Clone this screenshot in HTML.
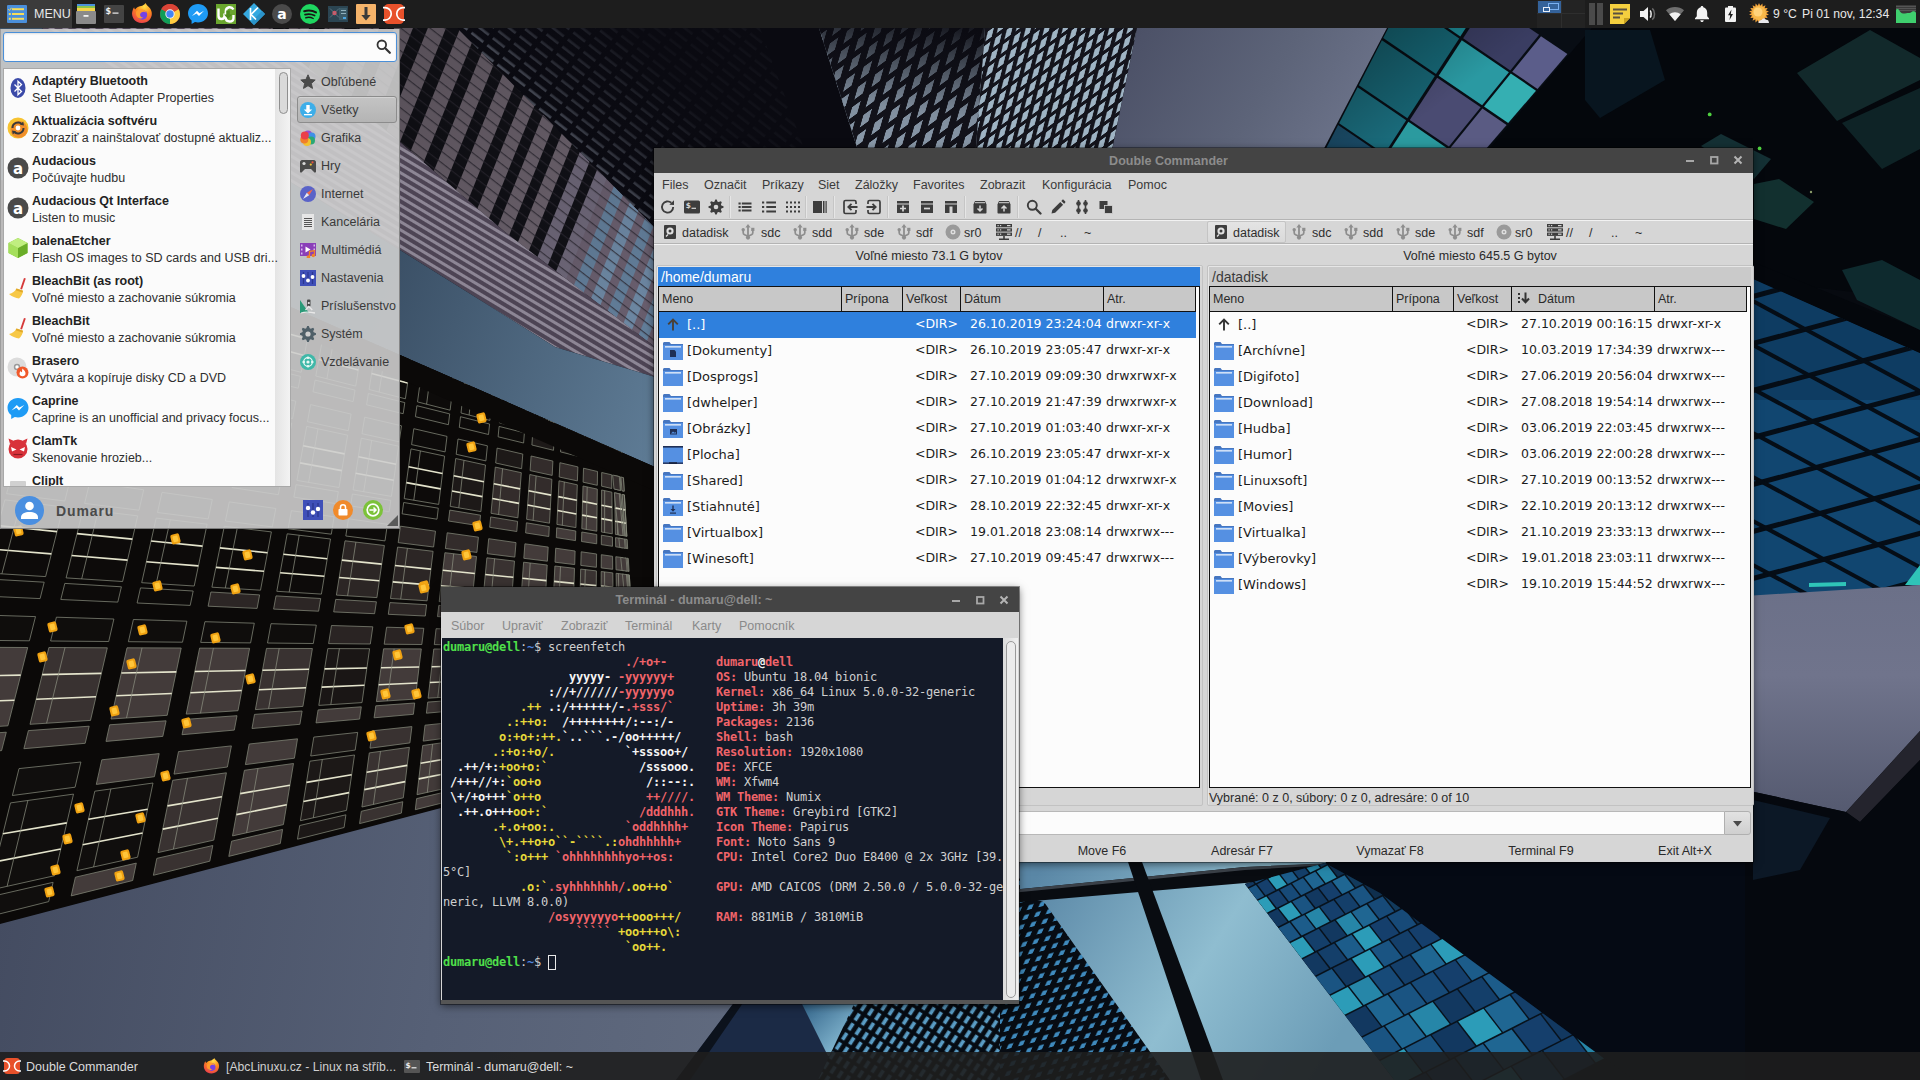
<!DOCTYPE html>
<html lang="sk"><head><meta charset="utf-8"><title>Desktop</title>
<style>
*{box-sizing:border-box;margin:0;padding:0}
html,body{width:1920px;height:1080px;overflow:hidden;background:#10141c}
body{position:relative;font-family:"Liberation Sans", "DejaVu Sans", sans-serif;font-size:12.5px;color:#2a2a2a}
.abs{position:absolute}
.t{position:absolute;white-space:nowrap;line-height:1;margin-top:1px}
#wall{position:absolute;left:0;top:0;width:1920px;height:1080px}
#top{position:absolute;left:0;top:0;width:1920px;height:28px;background:#1d1d1d}
#bot{position:absolute;left:0;top:1052px;width:1920px;height:28px;background:rgba(30,30,30,.9)}

#tt{font-family:"DejaVu Sans Mono","Liberation Mono",monospace;font-size:12px;line-height:15px;letter-spacing:-0.224px;color:#cfcfcf;white-space:pre}
#tt b.r{color:#f0646a}#tt b.w{color:#f4f4f4}#tt b.y{color:#e6d93a}#tt b.g{color:#4fe04a}#tt b.b{color:#4f86e0}
</style></head>
<body>
<svg id="wall" width="1920" height="1080" viewBox="0 0 1920 1080">
<defs>
<linearGradient id="skyA" gradientUnits="userSpaceOnUse" x1="380" y1="300" x2="700" y2="420"><stop offset="0" stop-color="#3b5066"/><stop offset="1" stop-color="#62809a"/></linearGradient>
<linearGradient id="skyB" gradientUnits="userSpaceOnUse" x1="0" y1="900" x2="800" y2="1050"><stop offset="0" stop-color="#444c61"/><stop offset=".55" stop-color="#566076"/><stop offset="1" stop-color="#626c80"/></linearGradient>
<linearGradient id="skyC" gradientUnits="userSpaceOnUse" x1="1140" y1="28" x2="1340" y2="150"><stop offset="0" stop-color="#4c5167"/><stop offset=".6" stop-color="#5d6479"/><stop offset="1" stop-color="#6b7289"/></linearGradient>
<linearGradient id="skyD" x1="0" y1="0" x2="0" y2="1"><stop offset="0" stop-color="#6b7088"/><stop offset=".4" stop-color="#70748c"/><stop offset="1" stop-color="#555a70"/></linearGradient>
<linearGradient id="skyE" gradientUnits="userSpaceOnUse" x1="1040" y1="870" x2="1330" y2="1050"><stop offset="0" stop-color="#5a87a6"/><stop offset=".55" stop-color="#8fbdd0"/><stop offset="1" stop-color="#6c9db7"/></linearGradient>
<pattern id="pinkV" width="12.5" height="40" patternUnits="userSpaceOnUse" patternTransform="rotate(19 400 28)"><rect width="12.5" height="40" fill="#121219"/><rect width="5.6" height="40" fill="#6e6471"/><rect y="9" width="5.6" height="1" fill="#4a4450"/><rect y="19" width="5.6" height="1" fill="#4a4450"/><rect y="29" width="5.6" height="1" fill="#4a4450"/><rect y="39" width="5.6" height="1" fill="#4a4450"/></pattern>
<pattern id="pinkH" width="40" height="7" patternUnits="userSpaceOnUse" patternTransform="rotate(31 400 250)"><rect width="40" height="7" fill="#4d4454"/><rect width="40" height="3" fill="#8d8695"/></pattern>
<pattern id="meshD" width="9" height="20" patternUnits="userSpaceOnUse" patternTransform="rotate(-52 600 60)"><rect width="9" height="20" fill="#0b0b12"/><rect x="1" y="2" width="2.600" height="15" fill="#aab4c6"/></pattern>
<pattern id="meshL" width="9" height="15" patternUnits="userSpaceOnUse" patternTransform="rotate(14 900 80) skewY(-50)"><rect width="9" height="15" fill="#14141c"/><rect x="1.500" y="2" width="5" height="10" fill="#9fb4c4"/></pattern>
<pattern id="meshB" width="9.500" height="11" patternUnits="userSpaceOnUse" patternTransform="rotate(24 1000 900) skewY(-38)"><rect width="9.500" height="11" fill="#070c13"/><rect x="2.500" y="2.500" width="4" height="5.500" fill="#3f8abd"/></pattern>
<pattern id="meshB2" width="8.500" height="11.500" patternUnits="userSpaceOnUse" patternTransform="rotate(33 900 1020)"><rect width="8.500" height="11.500" fill="#060b12"/><rect x="2.200" y="1.800" width="3.700" height="8" fill="#5a9cc4"/></pattern>
<pattern id="pinkFl" width="40" height="9" patternUnits="userSpaceOnUse" patternTransform="rotate(38 400 28)"><rect y="0" width="40" height="1.200" fill="#2c2832" opacity=".8"/></pattern>
<linearGradient id="pinkSh" gradientUnits="userSpaceOnUse" x1="380" y1="30" x2="700" y2="330"><stop offset="0" stop-color="#000" stop-opacity=".22"/><stop offset="1" stop-color="#000" stop-opacity="0"/></linearGradient>
<linearGradient id="meshFade" gradientUnits="userSpaceOnUse" x1="520" y1="170" x2="650" y2="50"><stop offset="0" stop-color="#0a0a11" stop-opacity=".1"/><stop offset=".45" stop-color="#0a0a11" stop-opacity=".72"/><stop offset="1" stop-color="#0a0a11" stop-opacity=".95"/></linearGradient>
<pattern id="meshL2" width="13" height="21" patternUnits="userSpaceOnUse" patternTransform="rotate(16 900 80) skewY(-52)"><path d="M0 0h13v21h-13z M3.500 4h6.500v13h-6.500z" fill="#13131b" fill-rule="evenodd"/></pattern>
<linearGradient id="meshL2sh" gradientUnits="userSpaceOnUse" x1="900" y1="20" x2="880" y2="165"><stop offset="0" stop-color="#0a0a11" stop-opacity=".9"/><stop offset=".3" stop-color="#0a0a11" stop-opacity=".5"/><stop offset=".6" stop-color="#0a0a11" stop-opacity=".12"/><stop offset="1" stop-color="#0a0a11" stop-opacity="0"/></linearGradient>
<linearGradient id="tpSh" gradientUnits="userSpaceOnUse" x1="1390" y1="30" x2="1480" y2="150"><stop offset="0" stop-color="#000" stop-opacity=".28"/><stop offset=".6" stop-color="#000" stop-opacity="0"/></linearGradient>
<linearGradient id="skyF" gradientUnits="userSpaceOnUse" x1="800" y1="1000" x2="850" y2="1050"><stop offset="0" stop-color="#2c5d84"/><stop offset="1" stop-color="#8fc3da"/></linearGradient>
<clipPath id="clipLit"><polygon points="-10,175 400,355 655,467 1100,660 1100,635 655,752 441,808 0,924 -10,927"/></clipPath>
</defs>
<rect width="1920" height="1080" fill="#070a10"/>
<polygon points="380.0,28.0 825.0,28.0 865.0,160.0 865.0,420.0 655.0,420.0 380.0,140.0" fill="#0a0a11"/>
<polygon points="430.0,28.0 760.0,28.0 870.0,330.0 655.0,260.0" fill="url(#meshD)" opacity=".8"/>
<polygon points="380.0,28.0 825.0,28.0 865.0,160.0 865.0,420.0 655.0,420.0 380.0,140.0" fill="url(#meshFade)"/>
<clipPath id="clipPink"><polygon points="-10,-400 457,28 650,223 837,411 655,347 505,232 400,142 -10,-190"/></clipPath>
<g clip-path="url(#clipPink)">
<rect x="-10" y="-400" width="900" height="850" fill="#111117"/>
<polygon points="962.8,-717.3 1391.2,-544.2 716.9,1124.7 288.5,951.6" fill="#6b6070"/>
<polygon points="260.0,-1001.3 281.5,-992.6 -392.8,676.4 -414.3,667.7" fill="#6f6570"/>
<polygon points="298.4,-985.8 319.5,-977.2 -354.8,691.7 -375.9,683.2" fill="#6f6570"/>
<polygon points="336.0,-970.6 356.7,-962.2 -317.6,706.7 -338.3,698.4" fill="#6f6570"/>
<polygon points="372.9,-955.7 393.1,-947.5 -281.2,721.4 -301.4,713.3" fill="#6f6570"/>
<polygon points="409.0,-941.1 428.8,-933.1 -245.5,735.9 -265.3,727.9" fill="#6f6570"/>
<polygon points="444.4,-926.8 463.8,-918.9 -210.4,750.0 -229.9,742.2" fill="#6f6570"/>
<polygon points="479.1,-912.7 498.2,-905.0 -176.1,763.9 -195.2,756.2" fill="#6f6570"/>
<polygon points="513.1,-899.0 531.8,-891.5 -142.5,777.5 -161.2,769.9" fill="#6f6570"/>
<polygon points="546.4,-885.5 564.7,-878.1 -109.6,790.8 -127.9,783.4" fill="#6f6570"/>
<polygon points="579.1,-872.3 597.0,-865.1 -77.3,803.8 -95.2,796.6" fill="#6f6570"/>
<polygon points="611.1,-859.4 628.7,-852.3 -45.6,816.6 -63.2,809.5" fill="#6f6570"/>
<polygon points="642.5,-846.7 659.7,-839.8 -14.6,829.1 -31.8,822.2" fill="#6f6570"/>
<polygon points="673.2,-834.3 690.1,-827.5 15.8,841.4 -1.1,834.6" fill="#6f6570"/>
<polygon points="703.3,-822.2 719.8,-815.5 45.6,853.5 29.0,846.8" fill="#6f6570"/>
<polygon points="732.8,-810.2 749.0,-803.7 74.7,865.3 58.5,858.7" fill="#6f6570"/>
<polygon points="761.8,-798.5 777.4,-792.2 103.1,876.7 87.5,870.4" fill="#6f6570"/>
<polygon points="789.7,-787.2 804.8,-781.2 130.5,887.8 115.4,881.7" fill="#6f6570"/>
<polygon points="816.6,-776.4 831.0,-770.6 156.7,898.4 142.3,892.5" fill="#6f6570"/>
<polygon points="842.3,-766.0 856.2,-760.4 181.9,908.5 168.0,902.9" fill="#6f6570"/>
<polygon points="867.1,-756.0 880.4,-750.6 206.1,918.3 192.8,912.9" fill="#6f6570"/>
<polygon points="890.8,-746.4 903.6,-741.2 229.3,927.7 216.5,922.5" fill="#6f6570"/>
<polygon points="913.6,-737.2 925.9,-732.2 251.6,936.7 239.3,931.7" fill="#6f6570"/>
<polygon points="935.5,-728.3 947.3,-723.6 273.0,945.3 261.2,940.6" fill="#716a7c"/>
<polygon points="956.5,-719.9 967.8,-715.3 293.5,953.6 282.2,949.1" fill="#716a7c"/>
<polygon points="976.7,-711.7 987.5,-707.3 313.2,961.6 302.4,957.2" fill="#64809c"/>
<polygon points="996.0,-703.9 1006.4,-699.7 332.1,969.2 321.7,965.0" fill="#6f8aa6"/>
<polygon points="1014.6,-696.4 1024.6,-692.3 350.3,976.6 340.3,972.6" fill="#64809c"/>
<polygon points="1032.5,-689.2 1042.1,-685.3 367.8,983.6 358.2,979.8" fill="#6f8aa6"/>
<polygon points="1049.6,-682.2 1058.8,-678.5 384.5,990.4 375.3,986.7" fill="#64809c"/>
<polygon points="1066.0,-675.6 1074.9,-672.0 400.6,996.9 391.7,993.3" fill="#6f8aa6"/>
<polygon points="1081.8,-669.2 1090.3,-665.8 416.0,1003.1 407.5,999.7" fill="#64809c"/>
<polygon points="1097.0,-663.1 1105.1,-659.8 430.8,1009.1 422.7,1005.8" fill="#6f8aa6"/>
<polygon points="1111.5,-657.2 1119.4,-654.1 445.1,1014.9 437.2,1011.7" fill="#64809c"/>
<polygon points="1125.5,-651.6 1133.3,-648.4 459.0,1020.5 451.2,1017.3" fill="#6f8aa6"/>
<polygon points="1139.4,-646.0 1147.2,-642.8 472.9,1026.1 465.1,1023.0" fill="#64809c"/>
<polygon points="1153.3,-640.3 1161.1,-637.2 486.8,1031.7 479.0,1028.6" fill="#6f8aa6"/>
<polygon points="1167.2,-634.7 1175.0,-631.6 500.7,1037.4 492.9,1034.2" fill="#64809c"/>
<rect x="-10" y="-400" width="900" height="850" fill="url(#pinkFl)"/>
<rect x="-10" y="-400" width="900" height="850" fill="url(#pinkSh)"/>
</g>
<polygon points="-10.0,-190.0 400.0,142.0 505.0,232.0 655.0,347.0 837.0,411.0 655.0,377.0 555.0,347.0 400.0,250.0 -10.0,-4.0" fill="url(#pinkH)"/>
<polygon points="-10.0,-4.0 400.0,250.0 555.0,347.0 655.0,377.0 1100.0,470.0 1100.0,660.0 655.0,467.0 400.0,355.0 -10.0,175.0" fill="url(#skyA)"/>
<g clip-path="url(#clipLit)">
<rect x="0" y="150" width="1100" height="820" fill="#0b0908"/>
<polygon points="106.4,122.7 156.0,140.2 151.8,156.7 101.9,139.4" fill="#0d0b0a" stroke="#7d8274" stroke-width=".8"/>
<polygon points="100.7,144.0 150.7,161.3 137.4,213.8 86.3,197.5" fill="#0d0b0a" stroke="#7d8274" stroke-width=".8"/>
<path d="M95.6 163.0L145.9 180.0" stroke="#e4e4cc" stroke-width="1.6"/>
<path d="M91.0 180.1L141.7 196.8" stroke="#e4e4cc" stroke-width="1.6"/>
<path d="M114.4 148.8L100.3 202.0" stroke="#8f9484" stroke-width=".7"/>
<polygon points="85.1,201.8 136.3,218.0 133.2,230.2 81.8,214.2" fill="#0d0b0a" stroke="#7d8274" stroke-width=".8"/>
<polygon points="172.8,146.2 219.3,162.6 215.5,178.9 168.8,162.6" fill="#0d0b0a" stroke="#7d8274" stroke-width=".8"/>
<polygon points="167.7,167.1 214.5,183.3 202.6,234.7 154.8,219.4" fill="#0d0b0a" stroke="#7d8274" stroke-width=".8"/>
<path d="M163.1 185.7L210.3 201.6" stroke="#e4e4cc" stroke-width="1.6"/>
<path d="M158.9 202.4L206.5 218.1" stroke="#e4e4cc" stroke-width="1.6"/>
<path d="M180.5 171.6L167.9 223.6" stroke="#8f9484" stroke-width=".7"/>
<polygon points="153.7,223.6 201.7,238.8 198.9,250.7 150.7,235.7" fill="#0d0b0a" stroke="#7d8274" stroke-width=".8"/>
<polygon points="235.0,168.2 278.3,183.5 274.9,199.5 231.4,184.4" fill="#0d0b0a" stroke="#7d8274" stroke-width=".8"/>
<polygon points="230.4,188.8 274.0,203.9 263.5,254.2 218.9,239.9" fill="#0d0b0a" stroke="#7d8274" stroke-width=".8"/>
<path d="M226.3 207.0L270.3 221.8" stroke="#e4e4cc" stroke-width="1.6"/>
<path d="M222.6 223.4L266.9 237.9" stroke="#e4e4cc" stroke-width="1.6"/>
<path d="M242.4 193.0L231.2 243.8" stroke="#8f9484" stroke-width=".7"/>
<polygon points="218.0,244.0 262.7,258.2 260.3,269.7 215.3,255.7" fill="#0d0b0a" stroke="#7d8274" stroke-width=".8"/>
<polygon points="292.9,188.7 332.9,202.9 329.9,218.6 289.7,204.6" fill="#0d0b0a" stroke="#7d8274" stroke-width=".8"/>
<polygon points="288.8,209.0 329.1,222.9 319.9,272.2 278.6,259.0" fill="#0d0b0a" stroke="#7d8274" stroke-width=".8"/>
<path d="M285.1 226.8L325.8 240.5" stroke="#e4e4cc" stroke-width="1.6"/>
<path d="M281.9 242.8L322.9 256.3" stroke="#e4e4cc" stroke-width="1.6"/>
<path d="M299.9 212.8L290.0 262.6" stroke="#8f9484" stroke-width=".7"/>
<polygon points="277.8,263.0 319.2,276.1 317.1,287.4 275.5,274.5" fill="#0d0b0a" stroke="#7d8274" stroke-width=".8"/>
<polygon points="346.3,207.6 383.0,220.6 380.4,236.1 343.5,223.3" fill="#0d0b0a" stroke="#7d8274" stroke-width=".8"/>
<polygon points="342.7,227.6 379.7,240.4 371.7,288.8 333.8,276.7" fill="#0d0b0a" stroke="#7d8274" stroke-width=".8"/>
<path d="M339.5 245.1L376.9 257.7" stroke="#e4e4cc" stroke-width="1.6"/>
<path d="M336.7 260.9L374.3 273.2" stroke="#e4e4cc" stroke-width="1.6"/>
<path d="M353.0 231.1L344.3 280.0" stroke="#8f9484" stroke-width=".7"/>
<polygon points="333.1,280.6 371.1,292.6 369.3,303.7 331.1,291.8" fill="#0d0b0a" stroke="#7d8274" stroke-width=".8"/>
<polygon points="395.3,224.9 428.5,236.7 426.3,252.0 392.8,240.4" fill="#0d0b0a" stroke="#7d8274" stroke-width=".8"/>
<polygon points="392.1,244.6 425.7,256.2 418.9,303.9 384.5,292.9" fill="#0d0b0a" stroke="#7d8274" stroke-width=".8"/>
<path d="M389.4 261.9L423.3 273.3" stroke="#e4e4cc" stroke-width="1.6"/>
<path d="M386.9 277.4L421.1 288.6" stroke="#e4e4cc" stroke-width="1.6"/>
<path d="M401.5 247.9L394.0 295.9" stroke="#8f9484" stroke-width=".7"/>
<polygon points="383.8,296.7 418.4,307.6 416.8,318.5 382.1,307.6" fill="#0d0b0a" stroke="#7d8274" stroke-width=".8"/>
<polygon points="439.6,240.6 469.3,251.2 467.5,266.3 437.5,255.9" fill="#0d0b0a" stroke="#7d8274" stroke-width=".8"/>
<polygon points="436.9,260.1 467.0,270.5 461.3,317.5 430.4,307.6" fill="#0d0b0a" stroke="#7d8274" stroke-width=".8"/>
<path d="M434.6 277.1L465.0 287.4" stroke="#e4e4cc" stroke-width="1.6"/>
<path d="M432.5 292.3L463.2 302.4" stroke="#e4e4cc" stroke-width="1.6"/>
<path d="M445.3 263.0L439.0 310.3" stroke="#8f9484" stroke-width=".7"/>
<polygon points="429.9,311.3 460.9,321.1 459.6,331.8 428.4,322.1" fill="#0d0b0a" stroke="#7d8274" stroke-width=".8"/>
<polygon points="479.2,254.7 505.4,263.9 503.9,279.0 477.4,269.8" fill="#0d0b0a" stroke="#7d8274" stroke-width=".8"/>
<polygon points="477.0,273.9 503.5,283.1 498.9,329.5 471.6,320.7" fill="#0d0b0a" stroke="#7d8274" stroke-width=".8"/>
<path d="M475.0 290.8L501.8 299.8" stroke="#e4e4cc" stroke-width="1.6"/>
<path d="M473.3 305.7L500.4 314.6" stroke="#e4e4cc" stroke-width="1.6"/>
<path d="M484.4 276.5L479.2 323.2" stroke="#8f9484" stroke-width=".7"/>
<polygon points="471.2,324.4 498.5,333.1 497.5,343.6 469.9,335.0" fill="#0d0b0a" stroke="#7d8274" stroke-width=".8"/>
<polygon points="514.0,267.0 536.5,275.0 535.4,289.9 512.6,282.0" fill="#0d0b0a" stroke="#7d8274" stroke-width=".8"/>
<polygon points="512.2,286.1 535.1,294.0 531.5,339.9 507.9,332.3" fill="#0d0b0a" stroke="#7d8274" stroke-width=".8"/>
<path d="M510.6 302.7L533.8 310.5" stroke="#e4e4cc" stroke-width="1.6"/>
<path d="M509.2 317.6L532.7 325.2" stroke="#e4e4cc" stroke-width="1.6"/>
<path d="M518.6 288.3L514.5 334.5" stroke="#8f9484" stroke-width=".7"/>
<polygon points="507.5,336.0 531.3,343.5 530.5,353.8 506.6,346.4" fill="#0d0b0a" stroke="#7d8274" stroke-width=".8"/>
<polygon points="543.8,277.5 562.6,284.2 561.8,299.1 542.7,292.5" fill="#0d0b0a" stroke="#7d8274" stroke-width=".8"/>
<polygon points="542.5,296.5 561.6,303.1 559.1,348.7 539.2,342.4" fill="#0d0b0a" stroke="#7d8274" stroke-width=".8"/>
<path d="M541.3 313.1L560.7 319.6" stroke="#e4e4cc" stroke-width="1.6"/>
<path d="M540.2 327.7L559.9 334.2" stroke="#e4e4cc" stroke-width="1.6"/>
<path d="M547.9 298.4L544.8 344.2" stroke="#8f9484" stroke-width=".7"/>
<polygon points="538.9,345.9 558.9,352.3 558.3,362.5 538.2,356.2" fill="#0d0b0a" stroke="#7d8274" stroke-width=".8"/>
<polygon points="568.6,286.3 583.6,291.6 583.1,306.5 567.9,301.2" fill="#0d0b0a" stroke="#7d8274" stroke-width=".8"/>
<polygon points="567.7,305.2 583.0,310.5 581.5,355.9 565.4,350.8" fill="#0d0b0a" stroke="#7d8274" stroke-width=".8"/>
<path d="M566.9 321.7L582.5 326.9" stroke="#e4e4cc" stroke-width="1.6"/>
<path d="M566.1 336.2L582.0 341.5" stroke="#e4e4cc" stroke-width="1.6"/>
<path d="M572.1 306.8L570.1 352.2" stroke="#8f9484" stroke-width=".7"/>
<polygon points="565.3,354.3 581.4,359.4 581.1,369.6 564.8,364.5" fill="#0d0b0a" stroke="#7d8274" stroke-width=".8"/>
<polygon points="588.2,293.3 599.4,297.2 599.2,312.1 587.8,308.1" fill="#0d0b0a" stroke="#7d8274" stroke-width=".8"/>
<polygon points="587.7,312.2 599.2,316.1 598.7,361.4 586.5,357.5" fill="#0d0b0a" stroke="#7d8274" stroke-width=".8"/>
<path d="M587.3 328.6L599.0 332.5" stroke="#e4e4cc" stroke-width="1.6"/>
<path d="M586.9 343.1L598.8 347.0" stroke="#e4e4cc" stroke-width="1.6"/>
<path d="M591.1 313.3L590.1 358.6" stroke="#8f9484" stroke-width=".7"/>
<polygon points="586.4,361.0 598.6,364.9 598.5,375.0 586.1,371.1" fill="#0d0b0a" stroke="#7d8274" stroke-width=".8"/>
<polygon points="602.6,298.4 609.7,300.9 609.9,315.8 602.5,313.2" fill="#0d0b0a" stroke="#7d8274" stroke-width=".8"/>
<polygon points="602.5,317.2 609.9,319.8 610.4,365.2 602.2,362.5" fill="#0d0b0a" stroke="#7d8274" stroke-width=".8"/>
<path d="M602.4 333.7L610.1 336.2" stroke="#e4e4cc" stroke-width="1.6"/>
<path d="M602.3 348.1L610.3 350.7" stroke="#e4e4cc" stroke-width="1.6"/>
<path d="M604.8 318.0L604.8 363.3" stroke="#8f9484" stroke-width=".7"/>
<polygon points="602.2,366.1 610.5,368.7 610.6,378.7 602.2,376.1" fill="#0d0b0a" stroke="#7d8274" stroke-width=".8"/>
<polygon points="611.5,301.5 614.6,302.6 615.1,317.6 611.8,316.4" fill="#0d0b0a" stroke="#7d8274" stroke-width=".8"/>
<polygon points="611.8,320.5 615.2,321.6 616.7,367.2 612.6,365.8" fill="#0d0b0a" stroke="#7d8274" stroke-width=".8"/>
<path d="M612.1 336.9L615.8 338.1" stroke="#e4e4cc" stroke-width="1.6"/>
<path d="M612.4 351.4L616.2 352.7" stroke="#e4e4cc" stroke-width="1.6"/>
<path d="M613.0 320.9L614.0 366.3" stroke="#8f9484" stroke-width=".7"/>
<polygon points="612.7,369.4 616.8,370.7 617.2,380.8 612.8,379.4" fill="#0d0b0a" stroke="#7d8274" stroke-width=".8"/>
<polygon points="614.9,302.7 613.8,302.3 614.6,317.4 615.5,317.7" fill="#0d0b0a" stroke="#7d8274" stroke-width=".8"/>
<polygon points="615.7,321.8 614.9,321.5 617.4,367.4 617.4,367.4" fill="#0d0b0a" stroke="#7d8274" stroke-width=".8"/>
<path d="M616.3 338.3L615.8 338.2" stroke="#e4e4cc" stroke-width="1.6"/>
<path d="M616.9 352.9L616.6 352.8" stroke="#e4e4cc" stroke-width="1.6"/>
<path d="M615.8 321.8L617.7 367.5" stroke="#8f9484" stroke-width=".7"/>
<polygon points="617.6,370.9 617.6,370.9 618.1,381.1 618.0,381.0" fill="#0d0b0a" stroke="#7d8274" stroke-width=".8"/>
<polygon points="612.7,301.9 607.2,300.0 608.4,315.3 613.6,317.1" fill="#0d0b0a" stroke="#7d8274" stroke-width=".8"/>
<polygon points="613.8,321.2 608.7,319.4 612.3,365.8 616.6,367.1" fill="#0d0b0a" stroke="#7d8274" stroke-width=".8"/>
<path d="M614.8 337.8L610.0 336.2" stroke="#e4e4cc" stroke-width="1.6"/>
<path d="M615.7 352.5L611.2 351.0" stroke="#e4e4cc" stroke-width="1.6"/>
<path d="M612.8 320.8L615.8 366.9" stroke="#8f9484" stroke-width=".7"/>
<polygon points="616.8,370.7 612.6,369.3 613.4,379.6 617.5,380.9" fill="#0d0b0a" stroke="#7d8274" stroke-width=".8"/>
<polygon points="604.6,299.1 594.8,295.6 596.3,311.1 605.9,314.4" fill="#0d0b0a" stroke="#7d8274" stroke-width=".8"/>
<polygon points="606.2,318.5 596.7,315.3 601.4,362.3 610.0,365.0" fill="#0d0b0a" stroke="#7d8274" stroke-width=".8"/>
<path d="M607.6 335.4L598.4 332.3" stroke="#e4e4cc" stroke-width="1.6"/>
<path d="M608.8 350.3L599.9 347.3" stroke="#e4e4cc" stroke-width="1.6"/>
<path d="M604.0 317.8L608.0 364.4" stroke="#8f9484" stroke-width=".7"/>
<polygon points="610.3,368.6 601.8,365.9 602.8,376.3 611.2,378.9" fill="#0d0b0a" stroke="#7d8274" stroke-width=".8"/>
<polygon points="78.1,227.9 129.8,243.6 125.3,261.4 73.2,246.1" fill="#0d0b0a" stroke="#7d8274" stroke-width=".8"/>
<polygon points="71.8,251.2 124.1,266.4 109.7,323.4 56.1,309.8" fill="#0d0b0a" stroke="#7d8274" stroke-width=".8"/>
<path d="M66.3 271.9L119.0 286.6" stroke="#e4e4cc" stroke-width="1.6"/>
<path d="M61.2 290.7L114.3 304.9" stroke="#e4e4cc" stroke-width="1.6"/>
<path d="M86.2 255.3L70.8 313.5" stroke="#8f9484" stroke-width=".7"/>
<polygon points="54.8,314.5 108.5,328.0 105.1,341.3 51.1,328.2" fill="#0d0b0a" stroke="#7d8274" stroke-width=".8"/>
<polygon points="147.5,248.9 195.9,263.7 191.9,281.0 143.1,266.6" fill="#0d0b0a" stroke="#7d8274" stroke-width=".8"/>
<polygon points="141.9,271.5 190.8,285.8 178.1,340.9 127.9,328.1" fill="#0d0b0a" stroke="#7d8274" stroke-width=".8"/>
<path d="M136.9 291.6L186.3 305.4" stroke="#e4e4cc" stroke-width="1.6"/>
<path d="M132.4 309.7L182.2 323.0" stroke="#e4e4cc" stroke-width="1.6"/>
<path d="M155.3 275.4L141.7 331.6" stroke="#8f9484" stroke-width=".7"/>
<polygon points="126.8,332.6 177.1,345.3 174.1,358.1 123.5,345.8" fill="#0d0b0a" stroke="#7d8274" stroke-width=".8"/>
<polygon points="212.4,268.7 257.6,282.4 254.1,299.2 208.5,285.9" fill="#0d0b0a" stroke="#7d8274" stroke-width=".8"/>
<polygon points="207.5,290.6 253.1,303.9 242.0,357.2 195.2,345.2" fill="#0d0b0a" stroke="#7d8274" stroke-width=".8"/>
<path d="M203.1 310.0L249.2 322.8" stroke="#e4e4cc" stroke-width="1.6"/>
<path d="M199.2 327.5L245.6 339.9" stroke="#e4e4cc" stroke-width="1.6"/>
<path d="M220.1 294.2L208.1 348.5" stroke="#8f9484" stroke-width=".7"/>
<polygon points="194.2,349.6 241.1,361.4 238.5,373.7 191.3,362.2" fill="#0d0b0a" stroke="#7d8274" stroke-width=".8"/>
<polygon points="272.9,287.0 314.8,299.7 311.7,316.1 269.5,303.8" fill="#0d0b0a" stroke="#7d8274" stroke-width=".8"/>
<polygon points="268.6,308.3 310.9,320.6 301.2,372.3 257.8,361.2" fill="#0d0b0a" stroke="#7d8274" stroke-width=".8"/>
<path d="M264.8 327.2L307.4 339.1" stroke="#e4e4cc" stroke-width="1.6"/>
<path d="M261.3 344.1L304.3 355.6" stroke="#e4e4cc" stroke-width="1.6"/>
<path d="M280.3 311.7L269.8 364.3" stroke="#8f9484" stroke-width=".7"/>
<polygon points="257.0,365.4 300.4,376.4 298.2,388.2 254.5,377.6" fill="#0d0b0a" stroke="#7d8274" stroke-width=".8"/>
<polygon points="328.9,304.0 367.3,315.7 364.7,331.7 325.9,320.3" fill="#0d0b0a" stroke="#7d8274" stroke-width=".8"/>
<polygon points="325.1,324.8 363.9,336.1 355.7,386.1 315.8,376.0" fill="#0d0b0a" stroke="#7d8274" stroke-width=".8"/>
<path d="M321.8 343.1L361.0 354.0" stroke="#e4e4cc" stroke-width="1.6"/>
<path d="M318.8 359.5L358.3 370.0" stroke="#e4e4cc" stroke-width="1.6"/>
<path d="M335.9 327.9L326.9 378.8" stroke="#8f9484" stroke-width=".7"/>
<polygon points="315.1,380.1 355.0,390.1 353.1,401.6 313.0,391.8" fill="#0d0b0a" stroke="#7d8274" stroke-width=".8"/>
<polygon points="380.2,319.6 415.1,330.2 412.9,345.8 377.7,335.5" fill="#0d0b0a" stroke="#7d8274" stroke-width=".8"/>
<polygon points="377.0,339.8 412.3,350.1 405.4,398.8 369.1,389.5" fill="#0d0b0a" stroke="#7d8274" stroke-width=".8"/>
<path d="M374.1 357.6L409.8 367.6" stroke="#e4e4cc" stroke-width="1.6"/>
<path d="M371.6 373.5L407.6 383.1" stroke="#e4e4cc" stroke-width="1.6"/>
<path d="M386.8 342.7L379.1 392.1" stroke="#8f9484" stroke-width=".7"/>
<polygon points="368.4,393.5 404.8,402.6 403.2,413.7 366.6,404.8" fill="#0d0b0a" stroke="#7d8274" stroke-width=".8"/>
<polygon points="426.8,333.8 458.2,343.3 456.4,358.6 424.7,349.3" fill="#0d0b0a" stroke="#7d8274" stroke-width=".8"/>
<polygon points="424.1,353.5 455.9,362.8 450.1,410.2 417.5,401.9" fill="#0d0b0a" stroke="#7d8274" stroke-width=".8"/>
<path d="M421.7 370.9L453.8 379.8" stroke="#e4e4cc" stroke-width="1.6"/>
<path d="M419.6 386.4L452.0 395.0" stroke="#e4e4cc" stroke-width="1.6"/>
<path d="M432.9 356.1L426.6 404.2" stroke="#8f9484" stroke-width=".7"/>
<polygon points="416.9,405.7 449.7,413.9 448.4,424.7 415.4,416.7" fill="#0d0b0a" stroke="#7d8274" stroke-width=".8"/>
<polygon points="468.6,346.5 496.4,354.9 494.9,369.9 466.9,361.7" fill="#0d0b0a" stroke="#7d8274" stroke-width=".8"/>
<polygon points="466.4,365.8 494.5,374.0 489.9,420.4 461.0,413.0" fill="#0d0b0a" stroke="#7d8274" stroke-width=".8"/>
<path d="M464.4 382.8L492.9 390.7" stroke="#e4e4cc" stroke-width="1.6"/>
<path d="M462.7 397.9L491.4 405.5" stroke="#e4e4cc" stroke-width="1.6"/>
<path d="M474.3 368.1L469.1 415.0" stroke="#8f9484" stroke-width=".7"/>
<polygon points="460.5,416.7 489.6,424.0 488.5,434.5 459.3,427.4" fill="#0d0b0a" stroke="#7d8274" stroke-width=".8"/>
<polygon points="505.5,357.7 529.6,365.0 528.5,379.8 504.1,372.6" fill="#0d0b0a" stroke="#7d8274" stroke-width=".8"/>
<polygon points="503.7,376.7 528.2,383.8 524.7,429.2 499.4,422.8" fill="#0d0b0a" stroke="#7d8274" stroke-width=".8"/>
<path d="M502.2 393.3L526.9 400.2" stroke="#e4e4cc" stroke-width="1.6"/>
<path d="M500.8 408.0L525.8 414.7" stroke="#e4e4cc" stroke-width="1.6"/>
<path d="M510.6 378.7L506.5 424.6" stroke="#8f9484" stroke-width=".7"/>
<polygon points="499.1,426.4 524.4,432.8 523.6,443.0 498.1,436.8" fill="#0d0b0a" stroke="#7d8274" stroke-width=".8"/>
<polygon points="537.4,367.4 557.7,373.6 556.9,388.1 536.4,382.1" fill="#0d0b0a" stroke="#7d8274" stroke-width=".8"/>
<polygon points="536.1,386.1 556.7,392.1 554.3,436.8 532.9,431.3" fill="#0d0b0a" stroke="#7d8274" stroke-width=".8"/>
<path d="M534.9 402.4L555.8 408.2" stroke="#e4e4cc" stroke-width="1.6"/>
<path d="M533.9 416.9L555.1 422.5" stroke="#e4e4cc" stroke-width="1.6"/>
<path d="M541.9 387.8L538.9 432.8" stroke="#8f9484" stroke-width=".7"/>
<polygon points="532.6,434.8 554.1,440.2 553.5,450.3 531.9,445.0" fill="#1d1918" stroke="#7d8274" stroke-width=".8"/>
<polygon points="564.2,375.5 580.7,380.5 580.2,395.0 563.5,390.0" fill="#0d0b0a" stroke="#7d8274" stroke-width=".8"/>
<polygon points="563.3,394.0 580.1,398.9 578.7,443.0 561.1,438.5" fill="#1d1918" stroke="#7d8274" stroke-width=".8"/>
<path d="M562.5 410.1L579.6 414.8" stroke="#e4e4cc" stroke-width="1.6"/>
<path d="M561.8 424.3L579.1 428.9" stroke="#e4e4cc" stroke-width="1.6"/>
<path d="M568.1 395.4L566.1 439.8" stroke="#8f9484" stroke-width=".7"/>
<polygon points="561.0,442.0 578.5,446.4 578.2,456.3 560.5,451.9" fill="#1d1918" stroke="#7d8274" stroke-width=".8"/>
<polygon points="585.8,382.1 598.4,385.9 598.2,400.2 585.4,396.5" fill="#0d0b0a" stroke="#7d8274" stroke-width=".8"/>
<polygon points="585.3,400.4 598.2,404.1 597.7,447.8 584.1,444.4" fill="#1d1918" stroke="#7d8274" stroke-width=".8"/>
<path d="M584.9 416.3L598.0 420.0" stroke="#e4e4cc" stroke-width="1.6"/>
<path d="M584.5 430.4L597.9 433.9" stroke="#e4e4cc" stroke-width="1.6"/>
<path d="M589.1 401.5L588.1 445.4" stroke="#8f9484" stroke-width=".7"/>
<polygon points="584.0,447.8 597.7,451.2 597.6,461.0 583.8,457.6" fill="#332c2b" stroke="#7d8274" stroke-width=".8"/>
<polygon points="602.1,387.0 610.7,389.6 610.9,403.9 602.1,401.4" fill="#0d0b0a" stroke="#7d8274" stroke-width=".8"/>
<polygon points="602.0,405.2 610.9,407.8 611.4,451.3 601.8,448.9" fill="#1d1918" stroke="#7d8274" stroke-width=".8"/>
<path d="M601.9 421.0L611.1 423.6" stroke="#e4e4cc" stroke-width="1.6"/>
<path d="M601.9 435.0L611.2 437.5" stroke="#e4e4cc" stroke-width="1.6"/>
<path d="M604.7 406.0L604.7 449.6" stroke="#8f9484" stroke-width=".7"/>
<polygon points="601.8,452.3 611.4,454.7 611.5,464.3 601.7,462.0" fill="#332c2b" stroke="#7d8274" stroke-width=".8"/>
<polygon points="613.0,390.3 617.5,391.7 618.0,406.0 613.3,404.6" fill="#1d1918" stroke="#7d8274" stroke-width=".8"/>
<polygon points="613.3,408.5 618.1,409.9 619.6,453.4 614.1,452.0" fill="#1d1918" stroke="#7d8274" stroke-width=".8"/>
<path d="M613.6 424.3L618.7 425.7" stroke="#e4e4cc" stroke-width="1.6"/>
<path d="M613.8 438.2L619.1 439.6" stroke="#e4e4cc" stroke-width="1.6"/>
<path d="M614.9 409.0L615.8 452.5" stroke="#8f9484" stroke-width=".7"/>
<polygon points="614.1,455.4 619.7,456.8 620.0,466.4 614.3,465.0" fill="#332c2b" stroke="#7d8274" stroke-width=".8"/>
<polygon points="618.4,392.0 618.7,392.1 619.5,406.5 618.9,406.3" fill="#1d1918" stroke="#7d8274" stroke-width=".8"/>
<polygon points="619.1,410.2 619.8,410.4 622.2,454.1 620.8,453.7" fill="#332c2b" stroke="#7d8274" stroke-width=".8"/>
<path d="M619.7 426.0L620.6 426.2" stroke="#e4e4cc" stroke-width="1.6"/>
<path d="M620.3 439.9L621.4 440.2" stroke="#e4e4cc" stroke-width="1.6"/>
<path d="M619.6 410.3L621.5 453.9" stroke="#8f9484" stroke-width=".7"/>
<polygon points="620.9,457.1 622.3,457.4 622.9,467.1 621.3,466.7" fill="#332c2b" stroke="#7d8274" stroke-width=".8"/>
<polygon points="618.1,391.9 614.2,390.7 615.4,405.3 619.0,406.3" fill="#1d1918" stroke="#7d8274" stroke-width=".8"/>
<polygon points="619.2,410.3 615.7,409.2 619.1,453.3 621.9,454.0" fill="#1d1918" stroke="#7d8274" stroke-width=".8"/>
<path d="M620.2 426.1L616.9 425.2" stroke="#e4e4cc" stroke-width="1.6"/>
<path d="M621.1 440.1L618.0 439.3" stroke="#e4e4cc" stroke-width="1.6"/>
<path d="M618.6 410.1L621.5 453.9" stroke="#8f9484" stroke-width=".7"/>
<polygon points="622.1,457.4 619.3,456.7 620.1,466.4 622.7,467.1" fill="#332c2b" stroke="#7d8274" stroke-width=".8"/>
<polygon points="612.1,390.1 603.9,387.6 605.4,402.3 613.3,404.7" fill="#0d0b0a" stroke="#7d8274" stroke-width=".8"/>
<polygon points="613.7,408.6 605.8,406.3 610.2,451.0 617.3,452.8" fill="#1d1918" stroke="#7d8274" stroke-width=".8"/>
<path d="M615.0 424.7L607.4 422.6" stroke="#e4e4cc" stroke-width="1.6"/>
<path d="M616.2 438.8L608.8 436.8" stroke="#e4e4cc" stroke-width="1.6"/>
<path d="M611.8 408.1L615.7 452.4" stroke="#8f9484" stroke-width=".7"/>
<polygon points="617.6,456.2 610.5,454.5 611.5,464.3 618.4,466.0" fill="#332c2b" stroke="#7d8274" stroke-width=".8"/>
<polygon points="47.1,343.2 101.4,355.9 96.5,375.4 41.6,363.4" fill="#0d0b0a" stroke="#7d8274" stroke-width=".8"/>
<polygon points="40.1,369.0 95.1,380.8 79.3,443.5 22.7,433.9" fill="#0d0b0a" stroke="#7d8274" stroke-width=".8"/>
<path d="M34.0 391.9L89.5 403.0" stroke="#e4e4cc" stroke-width="1.6"/>
<path d="M28.4 412.7L84.4 423.1" stroke="#e4e4cc" stroke-width="1.6"/>
<path d="M55.3 372.2L38.2 436.6" stroke="#8f9484" stroke-width=".7"/>
<polygon points="21.2,439.2 78.0,448.6 74.3,463.2 17.2,454.4" fill="#0d0b0a" stroke="#7d8274" stroke-width=".8"/>
<polygon points="119.9,360.2 170.9,372.1 166.6,390.8 115.2,379.5" fill="#0d0b0a" stroke="#7d8274" stroke-width=".8"/>
<polygon points="113.9,384.9 165.4,396.0 151.6,455.8 98.6,446.8" fill="#0d0b0a" stroke="#7d8274" stroke-width=".8"/>
<path d="M108.4 406.8L160.5 417.2" stroke="#e4e4cc" stroke-width="1.6"/>
<path d="M103.5 426.6L156.1 436.3" stroke="#e4e4cc" stroke-width="1.6"/>
<path d="M128.0 387.9L113.2 449.3" stroke="#8f9484" stroke-width=".7"/>
<polygon points="97.3,451.8 150.5,460.6 147.3,474.5 93.7,466.2" fill="#0d0b0a" stroke="#7d8274" stroke-width=".8"/>
<polygon points="188.2,376.1 235.7,387.2 232.0,405.2 184.0,394.6" fill="#0d0b0a" stroke="#7d8274" stroke-width=".8"/>
<polygon points="182.9,399.7 230.9,410.1 219.0,467.2 169.6,458.8" fill="#0d0b0a" stroke="#7d8274" stroke-width=".8"/>
<path d="M178.2 420.7L226.7 430.4" stroke="#e4e4cc" stroke-width="1.6"/>
<path d="M173.9 439.6L222.9 448.7" stroke="#e4e4cc" stroke-width="1.6"/>
<path d="M196.1 402.6L183.2 461.1" stroke="#8f9484" stroke-width=".7"/>
<polygon points="168.5,463.6 218.1,471.8 215.3,485.0 165.4,477.3" fill="#0d0b0a" stroke="#7d8274" stroke-width=".8"/>
<polygon points="251.8,390.9 295.8,401.2 292.6,418.5 248.2,408.7" fill="#0d0b0a" stroke="#7d8274" stroke-width=".8"/>
<polygon points="247.2,413.6 291.7,423.2 281.5,477.8 235.7,470.0" fill="#0d0b0a" stroke="#7d8274" stroke-width=".8"/>
<path d="M243.1 433.7L288.1 442.6" stroke="#e4e4cc" stroke-width="1.6"/>
<path d="M239.4 451.7L284.8 460.1" stroke="#e4e4cc" stroke-width="1.6"/>
<path d="M259.5 416.2L248.4 472.2" stroke="#8f9484" stroke-width=".7"/>
<polygon points="234.8,474.5 280.7,482.1 278.3,494.7 232.2,487.6" fill="#0d0b0a" stroke="#7d8274" stroke-width=".8"/>
<polygon points="310.6,404.6 351.1,414.1 348.3,430.7 307.5,421.7" fill="#0d0b0a" stroke="#7d8274" stroke-width=".8"/>
<polygon points="306.7,426.4 347.6,435.2 339.0,487.5 296.9,480.4" fill="#0d0b0a" stroke="#7d8274" stroke-width=".8"/>
<path d="M303.2 445.7L344.5 453.9" stroke="#e4e4cc" stroke-width="1.6"/>
<path d="M300.1 462.9L341.8 470.6" stroke="#e4e4cc" stroke-width="1.6"/>
<path d="M318.0 428.9L308.6 482.4" stroke="#8f9484" stroke-width=".7"/>
<polygon points="296.1,484.7 338.3,491.7 336.3,503.7 293.9,497.1" fill="#0d0b0a" stroke="#7d8274" stroke-width=".8"/>
<polygon points="364.7,417.2 401.5,425.8 399.2,441.8 362.0,433.7" fill="#0d0b0a" stroke="#7d8274" stroke-width=".8"/>
<polygon points="361.3,438.2 398.6,446.2 391.4,496.4 353.1,489.9" fill="#0d0b0a" stroke="#7d8274" stroke-width=".8"/>
<path d="M358.4 456.7L396.0 464.2" stroke="#e4e4cc" stroke-width="1.6"/>
<path d="M355.7 473.2L393.7 480.2" stroke="#e4e4cc" stroke-width="1.6"/>
<path d="M371.7 440.4L363.7 491.7" stroke="#8f9484" stroke-width=".7"/>
<polygon points="352.4,494.0 390.8,500.4 389.2,511.8 350.6,505.9" fill="#0d0b0a" stroke="#7d8274" stroke-width=".8"/>
<polygon points="413.8,428.7 447.0,436.4 445.1,451.9 411.6,444.6" fill="#0d0b0a" stroke="#7d8274" stroke-width=".8"/>
<polygon points="411.0,448.9 444.6,456.1 438.7,504.4 404.2,498.6" fill="#0d0b0a" stroke="#7d8274" stroke-width=".8"/>
<path d="M408.6 466.7L442.5 473.5" stroke="#e4e4cc" stroke-width="1.6"/>
<path d="M406.4 482.6L440.6 488.9" stroke="#e4e4cc" stroke-width="1.6"/>
<path d="M420.4 450.9L413.8 500.2" stroke="#8f9484" stroke-width=".7"/>
<polygon points="403.7,502.5 438.3,508.2 437.0,519.2 402.1,513.8" fill="#0d0b0a" stroke="#7d8274" stroke-width=".8"/>
<polygon points="458.0,439.0 487.4,445.8 485.9,460.9 456.2,454.3" fill="#0d0b0a" stroke="#7d8274" stroke-width=".8"/>
<polygon points="455.7,458.5 485.5,465.0 480.9,511.6 450.2,506.4" fill="#1d1918" stroke="#7d8274" stroke-width=".8"/>
<path d="M453.7 475.7L483.9 481.7" stroke="#e4e4cc" stroke-width="1.6"/>
<path d="M452.0 491.0L482.4 496.6" stroke="#e4e4cc" stroke-width="1.6"/>
<path d="M464.0 460.3L458.8 507.8" stroke="#8f9484" stroke-width=".7"/>
<polygon points="449.8,510.1 480.5,515.2 479.5,525.8 448.5,521.0" fill="#332c2b" stroke="#7d8274" stroke-width=".8"/>
<polygon points="497.1,448.1 522.8,454.1 521.6,468.7 495.7,463.0" fill="#1d1918" stroke="#7d8274" stroke-width=".8"/>
<polygon points="495.3,467.1 521.3,472.7 517.9,517.8 491.0,513.3" fill="#332c2b" stroke="#7d8274" stroke-width=".8"/>
<path d="M493.8 483.7L520.1 488.9" stroke="#e4e4cc" stroke-width="1.6"/>
<path d="M492.4 498.5L519.0 503.4" stroke="#e4e4cc" stroke-width="1.6"/>
<path d="M502.6 468.7L498.6 514.6" stroke="#8f9484" stroke-width=".7"/>
<polygon points="490.7,516.9 517.6,521.4 516.8,531.5 489.7,527.3" fill="#332c2b" stroke="#7d8274" stroke-width=".8"/>
<polygon points="531.1,456.0 552.9,461.1 552.2,475.4 530.1,470.6" fill="#332c2b" stroke="#7d8274" stroke-width=".8"/>
<polygon points="529.8,474.5 551.9,479.3 549.5,523.2 526.6,519.3" fill="#332c2b" stroke="#7d8274" stroke-width=".8"/>
<path d="M528.6 490.7L551.1 495.1" stroke="#e4e4cc" stroke-width="1.6"/>
<path d="M527.6 505.0L550.3 509.2" stroke="#e4e4cc" stroke-width="1.6"/>
<path d="M536.1 475.9L533.1 520.4" stroke="#8f9484" stroke-width=".7"/>
<polygon points="526.4,522.8 549.3,526.6 548.8,536.5 525.6,532.9" fill="#393231" stroke="#7d8274" stroke-width=".8"/>
<polygon points="559.9,462.7 577.9,466.9 577.4,480.9 559.2,477.0" fill="#332c2b" stroke="#7d8274" stroke-width=".8"/>
<polygon points="559.0,480.8 577.3,484.8 575.9,527.6 556.9,524.4" fill="#332c2b" stroke="#7d8274" stroke-width=".8"/>
<path d="M558.3 496.6L576.8 500.3" stroke="#e4e4cc" stroke-width="1.6"/>
<path d="M557.6 510.5L576.3 514.0" stroke="#e4e4cc" stroke-width="1.6"/>
<path d="M564.3 481.9L562.3 525.4" stroke="#8f9484" stroke-width=".7"/>
<polygon points="556.7,527.8 575.8,531.0 575.5,540.6 556.3,537.6" fill="#433b3a" stroke="#7d8274" stroke-width=".8"/>
<polygon points="583.5,468.2 597.5,471.5 597.3,485.3 583.1,482.2" fill="#332c2b" stroke="#7d8274" stroke-width=".8"/>
<polygon points="583.0,486.0 597.3,489.1 596.8,531.2 581.8,528.7" fill="#433b3a" stroke="#7d8274" stroke-width=".8"/>
<path d="M582.6 501.4L597.1 504.3" stroke="#e4e4cc" stroke-width="1.6"/>
<path d="M582.2 515.1L597.0 517.8" stroke="#e4e4cc" stroke-width="1.6"/>
<path d="M587.2 486.9L586.2 529.4" stroke="#8f9484" stroke-width=".7"/>
<polygon points="581.8,532.0 596.8,534.5 596.7,543.8 581.5,541.5" fill="#433b3a" stroke="#7d8274" stroke-width=".8"/>
<polygon points="601.7,472.5 611.7,474.8 611.8,488.5 601.6,486.2" fill="#332c2b" stroke="#7d8274" stroke-width=".8"/>
<polygon points="601.6,490.0 611.9,492.2 612.3,533.8 601.4,532.0" fill="#393231" stroke="#7d8274" stroke-width=".8"/>
<path d="M601.5 505.2L612.0 507.3" stroke="#e4e4cc" stroke-width="1.6"/>
<path d="M601.4 518.6L612.2 520.6" stroke="#e4e4cc" stroke-width="1.6"/>
<path d="M604.7 490.7L604.6 532.5" stroke="#8f9484" stroke-width=".7"/>
<polygon points="601.4,535.2 612.4,537.0 612.5,546.3 601.3,544.6" fill="#393231" stroke="#7d8274" stroke-width=".8"/>
<polygon points="614.5,475.4 620.3,476.8 620.8,490.5 614.7,489.1" fill="#332c2b" stroke="#7d8274" stroke-width=".8"/>
<polygon points="614.7,492.8 620.9,494.2 622.3,535.5 615.4,534.4" fill="#433b3a" stroke="#7d8274" stroke-width=".8"/>
<path d="M615.0 507.9L621.4 509.2" stroke="#e4e4cc" stroke-width="1.6"/>
<path d="M615.2 521.2L621.9 522.4" stroke="#e4e4cc" stroke-width="1.6"/>
<path d="M616.7 493.3L617.6 534.7" stroke="#8f9484" stroke-width=".7"/>
<polygon points="615.5,537.6 622.4,538.7 622.7,547.9 615.7,546.8" fill="#433b3a" stroke="#7d8274" stroke-width=".8"/>
<polygon points="621.7,477.1 623.5,477.5 624.2,491.2 622.2,490.8" fill="#332c2b" stroke="#7d8274" stroke-width=".8"/>
<polygon points="622.4,494.5 624.4,494.9 626.7,536.3 624.0,535.8" fill="#433b3a" stroke="#7d8274" stroke-width=".8"/>
<path d="M623.0 509.5L625.2 509.9" stroke="#e4e4cc" stroke-width="1.6"/>
<path d="M623.5 522.7L626.0 523.2" stroke="#e4e4cc" stroke-width="1.6"/>
<path d="M623.2 494.7L625.0 536.0" stroke="#8f9484" stroke-width=".7"/>
<polygon points="624.1,539.0 626.9,539.4 627.4,548.6 624.5,548.1" fill="#433b3a" stroke="#7d8274" stroke-width=".8"/>
<polygon points="623.3,477.5 620.9,476.9 622.0,490.7 624.2,491.2" fill="#332c2b" stroke="#7d8274" stroke-width=".8"/>
<polygon points="624.4,494.9 622.2,494.4 625.5,536.0 626.9,536.3" fill="#393231" stroke="#7d8274" stroke-width=".8"/>
<path d="M625.3 510.0L623.4 509.6" stroke="#e4e4cc" stroke-width="1.6"/>
<path d="M626.1 523.2L624.4 522.9" stroke="#e4e4cc" stroke-width="1.6"/>
<path d="M624.1 494.9L626.8 536.3" stroke="#8f9484" stroke-width=".7"/>
<polygon points="627.1,539.5 625.7,539.3 626.4,548.4 627.7,548.6" fill="#393231" stroke="#7d8274" stroke-width=".8"/>
<polygon points="619.3,476.6 612.6,475.0 614.0,489.0 620.4,490.4" fill="#332c2b" stroke="#7d8274" stroke-width=".8"/>
<polygon points="620.7,494.1 614.3,492.7 618.5,534.9 624.2,535.8" fill="#433b3a" stroke="#7d8274" stroke-width=".8"/>
<path d="M622.0 509.3L615.9 508.1" stroke="#e4e4cc" stroke-width="1.6"/>
<path d="M623.1 522.6L617.2 521.5" stroke="#e4e4cc" stroke-width="1.6"/>
<path d="M619.3 493.8L623.0 535.6" stroke="#8f9484" stroke-width=".7"/>
<polygon points="624.5,539.1 618.8,538.1 619.8,547.4 625.2,548.3" fill="#433b3a" stroke="#7d8274" stroke-width=".8"/>
<polygon points="12.6,471.2 70.2,479.4 64.8,501.0 6.6,493.7" fill="#0d0b0a" stroke="#7d8274" stroke-width=".8"/>
<polygon points="4.9,499.9 63.3,506.9 45.6,576.6 -14.7,572.8" fill="#0d0b0a" stroke="#7d8274" stroke-width=".8"/>
<path d="M-2.0 525.6L57.0 531.6" stroke="#e4e4cc" stroke-width="1.6"/>
<path d="M-8.3 549.0L51.4 553.9" stroke="#e4e4cc" stroke-width="1.6"/>
<path d="M20.9 501.8L1.9 573.8" stroke="#8f9484" stroke-width=".7"/>
<polygon points="-16.3,578.7 44.2,582.2 40.1,598.6 -20.9,595.8" fill="#0d0b0a" stroke="#7d8274" stroke-width=".8"/>
<polygon points="89.8,482.1 143.7,489.8 139.0,510.2 84.6,503.4" fill="#0d0b0a" stroke="#7d8274" stroke-width=".8"/>
<polygon points="83.1,509.3 137.7,515.9 122.6,581.5 66.1,577.9" fill="#0d0b0a" stroke="#7d8274" stroke-width=".8"/>
<path d="M77.1 533.6L132.4 539.1" stroke="#e4e4cc" stroke-width="1.6"/>
<path d="M71.7 555.5L127.5 560.1" stroke="#e4e4cc" stroke-width="1.6"/>
<path d="M98.1 511.1L81.7 578.9" stroke="#8f9484" stroke-width=".7"/>
<polygon points="64.8,583.4 121.4,586.8 117.8,602.1 60.8,599.5" fill="#0d0b0a" stroke="#7d8274" stroke-width=".8"/>
<polygon points="162.0,492.4 212.3,499.5 208.2,518.9 157.5,512.5" fill="#0d0b0a" stroke="#7d8274" stroke-width=".8"/>
<polygon points="156.2,518.1 207.1,524.2 194.2,586.0 141.7,582.7" fill="#0d0b0a" stroke="#7d8274" stroke-width=".8"/>
<path d="M151.1 541.0L202.5 546.1" stroke="#e4e4cc" stroke-width="1.6"/>
<path d="M146.4 561.7L198.4 565.9" stroke="#e4e4cc" stroke-width="1.6"/>
<path d="M170.3 519.8L156.2 583.6" stroke="#8f9484" stroke-width=".7"/>
<polygon points="140.5,587.9 193.2,591.0 190.2,605.4 137.1,603.0" fill="#0d0b0a" stroke="#7d8274" stroke-width=".8"/>
<polygon points="229.3,501.9 275.8,508.5 272.3,526.9 225.4,521.0" fill="#0d0b0a" stroke="#7d8274" stroke-width=".8"/>
<polygon points="224.3,526.3 271.4,531.9 260.5,590.2 211.9,587.2" fill="#0d0b0a" stroke="#7d8274" stroke-width=".8"/>
<path d="M219.9 547.9L267.5 552.7" stroke="#e4e4cc" stroke-width="1.6"/>
<path d="M216.0 567.4L264.0 571.3" stroke="#e4e4cc" stroke-width="1.6"/>
<path d="M237.3 527.8L225.3 588.0" stroke="#8f9484" stroke-width=".7"/>
<polygon points="210.9,592.0 259.6,594.9 257.1,608.4 208.1,606.2" fill="#2c2625" stroke="#7d8274" stroke-width=".8"/>
<polygon points="291.4,510.7 334.1,516.8 331.3,534.2 288.1,528.8" fill="#0d0b0a" stroke="#7d8274" stroke-width=".8"/>
<polygon points="287.2,533.8 330.5,539.0 321.4,594.1 276.8,591.3" fill="#0d0b0a" stroke="#7d8274" stroke-width=".8"/>
<path d="M283.5 554.3L327.2 558.7" stroke="#e4e4cc" stroke-width="1.6"/>
<path d="M280.2 572.7L324.3 576.3" stroke="#e4e4cc" stroke-width="1.6"/>
<path d="M299.2 535.3L289.2 592.1" stroke="#8f9484" stroke-width=".7"/>
<polygon points="276.0,595.9 320.7,598.5 318.6,611.2 273.6,609.1" fill="#2c2625" stroke="#7d8274" stroke-width=".8"/>
<polygon points="348.5,518.8 387.4,524.3 385.0,540.9 345.8,536.0" fill="#0d0b0a" stroke="#7d8274" stroke-width=".8"/>
<polygon points="345.0,540.8 384.4,545.5 376.9,597.6 336.4,595.1" fill="#2c2625" stroke="#7d8274" stroke-width=".8"/>
<path d="M341.9 560.1L381.7 564.1" stroke="#e4e4cc" stroke-width="1.6"/>
<path d="M339.2 577.5L379.3 580.8" stroke="#e4e4cc" stroke-width="1.6"/>
<path d="M355.9 542.1L347.6 595.8" stroke="#8f9484" stroke-width=".7"/>
<polygon points="335.7,599.4 376.4,601.8 374.6,613.7 333.7,611.9" fill="#2c2625" stroke="#7d8274" stroke-width=".8"/>
<polygon points="400.4,526.2 435.5,531.2 433.6,547.0 398.2,542.6" fill="#2c2625" stroke="#7d8274" stroke-width=".8"/>
<polygon points="397.6,547.1 433.1,551.3 427.1,600.8 390.5,598.5" fill="#2c2625" stroke="#7d8274" stroke-width=".8"/>
<path d="M395.0 565.5L430.9 569.1" stroke="#e4e4cc" stroke-width="1.6"/>
<path d="M392.8 581.9L429.0 584.9" stroke="#e4e4cc" stroke-width="1.6"/>
<path d="M407.4 548.3L400.7 599.1" stroke="#8f9484" stroke-width=".7"/>
<polygon points="389.9,602.6 426.6,604.7 425.3,616.0 388.3,614.3" fill="#2c2625" stroke="#7d8274" stroke-width=".8"/>
<polygon points="447.2,532.8 478.4,537.2 476.9,552.4 445.4,548.5" fill="#332c2b" stroke="#7d8274" stroke-width=".8"/>
<polygon points="444.9,552.7 476.5,556.5 471.8,603.6 439.2,601.6" fill="#433b3a" stroke="#7d8274" stroke-width=".8"/>
<path d="M442.8 570.3L474.8 573.5" stroke="#e4e4cc" stroke-width="1.6"/>
<path d="M441.0 585.9L473.3 588.5" stroke="#e4e4cc" stroke-width="1.6"/>
<path d="M453.7 553.8L448.3 602.2" stroke="#8f9484" stroke-width=".7"/>
<polygon points="438.8,605.4 471.4,607.4 470.4,618.0 437.5,616.6" fill="#433b3a" stroke="#7d8274" stroke-width=".8"/>
<polygon points="488.7,538.7 516.0,542.6 514.8,557.1 487.3,553.7" fill="#393231" stroke="#7d8274" stroke-width=".8"/>
<polygon points="486.9,557.8 514.5,561.1 511.1,606.1 482.5,604.3" fill="#393231" stroke="#7d8274" stroke-width=".8"/>
<path d="M485.3 574.5L513.3 577.3" stroke="#e4e4cc" stroke-width="1.6"/>
<path d="M483.9 589.4L512.2 591.7" stroke="#e4e4cc" stroke-width="1.6"/>
<path d="M494.6 558.7L490.5 604.8" stroke="#8f9484" stroke-width=".7"/>
<polygon points="482.2,608.0 510.8,609.7 510.0,619.8 481.2,618.5" fill="#393231" stroke="#7d8274" stroke-width=".8"/>
<polygon points="524.9,543.8 548.2,547.1 547.4,561.2 523.8,558.3" fill="#433b3a" stroke="#7d8274" stroke-width=".8"/>
<polygon points="523.6,562.2 547.2,565.0 544.9,608.3 520.4,606.7" fill="#433b3a" stroke="#7d8274" stroke-width=".8"/>
<path d="M522.4 578.2L546.4 580.6" stroke="#e4e4cc" stroke-width="1.6"/>
<path d="M521.4 592.5L545.6 594.5" stroke="#e4e4cc" stroke-width="1.6"/>
<path d="M530.2 563.0L527.3 607.2" stroke="#8f9484" stroke-width=".7"/>
<polygon points="520.1,610.2 544.7,611.7 544.1,621.4 519.4,620.3" fill="#433b3a" stroke="#7d8274" stroke-width=".8"/>
<polygon points="555.7,548.2 575.1,551.0 574.7,564.6 555.0,562.2" fill="#433b3a" stroke="#7d8274" stroke-width=".8"/>
<polygon points="554.9,566.0 574.5,568.3 573.2,610.1 552.8,608.8" fill="#433b3a" stroke="#7d8274" stroke-width=".8"/>
<path d="M554.1 581.4L574.0 583.4" stroke="#e4e4cc" stroke-width="1.6"/>
<path d="M553.4 595.1L573.6 596.8" stroke="#e4e4cc" stroke-width="1.6"/>
<path d="M560.5 566.6L558.6 609.2" stroke="#8f9484" stroke-width=".7"/>
<polygon points="552.6,612.1 573.1,613.3 572.8,622.7 552.1,621.7" fill="#433b3a" stroke="#7d8274" stroke-width=".8"/>
<polygon points="581.2,551.8 596.6,554.0 596.4,567.3 580.8,565.4" fill="#393231" stroke="#7d8274" stroke-width=".8"/>
<polygon points="580.7,569.1 596.4,570.9 596.0,611.5 579.6,610.5" fill="#393231" stroke="#7d8274" stroke-width=".8"/>
<path d="M580.3 584.0L596.2 585.6" stroke="#e4e4cc" stroke-width="1.6"/>
<path d="M580.0 597.3L596.1 598.6" stroke="#e4e4cc" stroke-width="1.6"/>
<path d="M585.3 569.6L584.3 610.8" stroke="#8f9484" stroke-width=".7"/>
<polygon points="579.5,613.7 595.9,614.7 595.8,623.7 579.3,623.0" fill="#393231" stroke="#7d8274" stroke-width=".8"/>
<polygon points="601.3,554.7 612.6,556.3 612.7,569.3 601.2,567.9" fill="#433b3a" stroke="#7d8274" stroke-width=".8"/>
<polygon points="601.2,571.5 612.8,572.9 613.2,612.6 601.0,611.8" fill="#433b3a" stroke="#7d8274" stroke-width=".8"/>
<path d="M601.1 586.1L612.9 587.3" stroke="#e4e4cc" stroke-width="1.6"/>
<path d="M601.0 599.0L613.1 600.0" stroke="#e4e4cc" stroke-width="1.6"/>
<path d="M604.6 571.9L604.6 612.1" stroke="#8f9484" stroke-width=".7"/>
<polygon points="601.0,615.0 613.2,615.7 613.3,624.5 600.9,623.9" fill="#433b3a" stroke="#7d8274" stroke-width=".8"/>
<polygon points="615.8,556.7 623.0,557.7 623.5,570.7 616.0,569.8" fill="#433b3a" stroke="#7d8274" stroke-width=".8"/>
<polygon points="616.1,573.3 623.6,574.2 624.9,613.4 616.8,612.9" fill="#433b3a" stroke="#7d8274" stroke-width=".8"/>
<path d="M616.3 587.7L624.0 588.4" stroke="#e4e4cc" stroke-width="1.6"/>
<path d="M616.6 600.3L624.5 601.0" stroke="#e4e4cc" stroke-width="1.6"/>
<path d="M618.4 573.6L619.3 613.0" stroke="#8f9484" stroke-width=".7"/>
<polygon points="616.8,615.9 625.0,616.4 625.3,625.0 617.0,624.7" fill="#433b3a" stroke="#7d8274" stroke-width=".8"/>
<polygon points="624.8,558.0 627.9,558.4 628.6,571.3 625.3,570.9" fill="#393231" stroke="#7d8274" stroke-width=".8"/>
<polygon points="625.5,574.4 628.8,574.8 631.0,613.8 627.0,613.5" fill="#393231" stroke="#7d8274" stroke-width=".8"/>
<path d="M626.0 588.6L629.6 589.0" stroke="#e4e4cc" stroke-width="1.6"/>
<path d="M626.5 601.1L630.3 601.4" stroke="#e4e4cc" stroke-width="1.6"/>
<path d="M626.7 574.6L628.4 613.6" stroke="#8f9484" stroke-width=".7"/>
<polygon points="627.1,616.5 631.1,616.8 631.6,625.3 627.5,625.1" fill="#393231" stroke="#7d8274" stroke-width=".8"/>
<polygon points="628.3,558.5 627.2,558.3 628.2,571.3 629.1,571.4" fill="#433b3a" stroke="#7d8274" stroke-width=".8"/>
<polygon points="629.3,574.9 628.4,574.8 631.5,613.8 631.6,613.8" fill="#433b3a" stroke="#7d8274" stroke-width=".8"/>
<path d="M630.1 589.0L629.5 589.0" stroke="#e4e4cc" stroke-width="1.6"/>
<path d="M630.9 601.5L630.5 601.5" stroke="#e4e4cc" stroke-width="1.6"/>
<path d="M629.3 574.9L631.9 613.8" stroke="#8f9484" stroke-width=".7"/>
<polygon points="631.8,616.8 631.7,616.8 632.3,625.4 632.3,625.4" fill="#433b3a" stroke="#7d8274" stroke-width=".8"/>
<polygon points="626.1,558.2 620.7,557.4 622.0,570.5 627.1,571.1" fill="#433b3a" stroke="#7d8274" stroke-width=".8"/>
<polygon points="627.4,574.7 622.4,574.1 626.3,613.5 630.7,613.7" fill="#433b3a" stroke="#7d8274" stroke-width=".8"/>
<path d="M628.6 588.9L623.8 588.4" stroke="#e4e4cc" stroke-width="1.6"/>
<path d="M629.6 601.4L625.1 601.0" stroke="#e4e4cc" stroke-width="1.6"/>
<path d="M626.4 574.5L629.8 613.7" stroke="#8f9484" stroke-width=".7"/>
<polygon points="630.9,616.7 626.6,616.5 627.5,625.1 631.6,625.3" fill="#433b3a" stroke="#7d8274" stroke-width=".8"/>
<polygon points="-26.0,614.7 35.5,616.6 29.4,640.8 -32.9,640.2" fill="#0f0d0c" stroke="#7d8274" stroke-width=".8"/>
<polygon points="-34.7,647.2 27.7,647.5 7.9,725.8 -57.0,730.1" fill="#433b3a" stroke="#7d8274" stroke-width=".8"/>
<path d="M-42.6 676.4L20.7 675.1" stroke="#e4e4cc" stroke-width="1.6"/>
<path d="M-49.7 702.9L14.4 700.2" stroke="#e4e4cc" stroke-width="1.6"/>
<path d="M-17.6 647.3L-39.2 728.9" stroke="#8f9484" stroke-width=".7"/>
<polygon points="-58.9,736.8 6.3,732.2 1.6,750.6 -64.1,756.4" fill="#433b3a" stroke="#7d8274" stroke-width=".8"/>
<polygon points="56.4,617.2 113.9,619.0 108.7,641.5 50.6,641.0" fill="#0f0d0c" stroke="#7d8274" stroke-width=".8"/>
<polygon points="48.9,647.5 107.3,647.8 90.5,720.4 30.0,724.3" fill="#393231" stroke="#7d8274" stroke-width=".8"/>
<path d="M42.2 674.6L101.3 673.4" stroke="#e4e4cc" stroke-width="1.6"/>
<path d="M36.2 699.2L96.0 696.7" stroke="#e4e4cc" stroke-width="1.6"/>
<path d="M65.0 647.6L46.6 723.2" stroke="#8f9484" stroke-width=".7"/>
<polygon points="28.4,730.6 89.2,726.2 85.2,743.3 23.9,748.7" fill="#393231" stroke="#7d8274" stroke-width=".8"/>
<polygon points="133.4,619.5 186.9,621.2 182.5,642.2 128.4,641.7" fill="#0f0d0c" stroke="#7d8274" stroke-width=".8"/>
<polygon points="127.0,647.8 181.2,648.0 167.2,715.3 111.0,719.0" fill="#433b3a" stroke="#7d8274" stroke-width=".8"/>
<path d="M121.4 673.0L176.3 671.9" stroke="#e4e4cc" stroke-width="1.6"/>
<path d="M116.2 695.8L171.8 693.5" stroke="#e4e4cc" stroke-width="1.6"/>
<path d="M142.0 647.9L126.5 718.0" stroke="#8f9484" stroke-width=".7"/>
<polygon points="109.7,724.8 166.1,720.8 162.8,736.4 106.0,741.4" fill="#433b3a" stroke="#7d8274" stroke-width=".8"/>
<polygon points="204.9,621.7 254.3,623.2 250.6,642.9 200.7,642.4" fill="#0f0d0c" stroke="#7d8274" stroke-width=".8"/>
<polygon points="199.6,648.1 249.6,648.3 238.0,710.7 186.2,714.1" fill="#433b3a" stroke="#7d8274" stroke-width=".8"/>
<path d="M194.8 671.5L245.5 670.5" stroke="#e4e4cc" stroke-width="1.6"/>
<path d="M190.5 692.7L241.7 690.5" stroke="#e4e4cc" stroke-width="1.6"/>
<path d="M213.4 648.2L200.5 713.2" stroke="#8f9484" stroke-width=".7"/>
<polygon points="185.1,719.4 237.0,715.7 234.3,730.1 182.0,734.7" fill="#433b3a" stroke="#7d8274" stroke-width=".8"/>
<polygon points="271.0,623.7 316.3,625.1 313.3,643.5 267.5,643.0" fill="#0f0d0c" stroke="#7d8274" stroke-width=".8"/>
<polygon points="266.5,648.4 312.4,648.5 302.9,706.4 255.4,709.6" fill="#393231" stroke="#7d8274" stroke-width=".8"/>
<path d="M262.5 670.2L309.0 669.2" stroke="#e4e4cc" stroke-width="1.6"/>
<path d="M259.0 689.8L306.0 687.8" stroke="#e4e4cc" stroke-width="1.6"/>
<path d="M279.2 648.4L268.6 708.7" stroke="#8f9484" stroke-width=".7"/>
<polygon points="254.5,714.4 302.1,711.0 299.9,724.3 252.0,728.5" fill="#393231" stroke="#7d8274" stroke-width=".8"/>
<polygon points="331.5,625.5 372.8,626.8 370.3,644.0 328.6,643.6" fill="#2a2423" stroke="#7d8274" stroke-width=".8"/>
<polygon points="327.8,648.6 369.6,648.7 362.0,702.6 318.8,705.4" fill="#1a1615" stroke="#7d8274" stroke-width=".8"/>
<path d="M324.6 668.9L366.9 668.0" stroke="#e4e4cc" stroke-width="1.6"/>
<path d="M321.7 687.1L364.4 685.3" stroke="#e4e4cc" stroke-width="1.6"/>
<path d="M339.4 648.6L330.8 704.6" stroke="#8f9484" stroke-width=".7"/>
<polygon points="318.1,709.9 361.3,706.8 359.6,719.1 316.0,722.9" fill="#433b3a" stroke="#7d8274" stroke-width=".8"/>
<polygon points="386.6,627.2 423.8,628.3 421.8,644.5 384.2,644.2" fill="#2a2423" stroke="#7d8274" stroke-width=".8"/>
<polygon points="383.6,648.8 421.3,648.9 415.2,699.1 376.4,701.6" fill="#433b3a" stroke="#7d8274" stroke-width=".8"/>
<path d="M381.0 667.8L419.1 667.0" stroke="#e4e4cc" stroke-width="1.6"/>
<path d="M378.7 684.7L417.2 683.0" stroke="#e4e4cc" stroke-width="1.6"/>
<path d="M394.1 648.8L387.2 700.9" stroke="#8f9484" stroke-width=".7"/>
<polygon points="375.8,705.8 414.7,703.0 413.4,714.3 374.1,717.8" fill="#433b3a" stroke="#7d8274" stroke-width=".8"/>
<polygon points="436.1,628.7 469.2,629.7 467.7,645.0 434.3,644.6" fill="#2a2423" stroke="#7d8274" stroke-width=".8"/>
<polygon points="433.8,649.0 467.3,649.1 462.7,696.0 428.1,698.2" fill="#393231" stroke="#7d8274" stroke-width=".8"/>
<path d="M431.7 666.7L465.6 666.0" stroke="#e4e4cc" stroke-width="1.6"/>
<path d="M429.9 682.5L464.2 681.0" stroke="#e4e4cc" stroke-width="1.6"/>
<path d="M443.1 649.0L437.8 697.6" stroke="#8f9484" stroke-width=".7"/>
<polygon points="427.7,702.1 462.3,699.6 461.3,710.1 426.4,713.2" fill="#393231" stroke="#7d8274" stroke-width=".8"/>
<polygon points="480.1,630.0 509.2,630.9 508.1,645.3 478.7,645.1" fill="#2a2423" stroke="#7d8274" stroke-width=".8"/>
<polygon points="478.4,649.2 507.8,649.3 504.4,693.2 474.1,695.2" fill="#433b3a" stroke="#7d8274" stroke-width=".8"/>
<path d="M476.8 665.8L506.5 665.2" stroke="#e4e4cc" stroke-width="1.6"/>
<path d="M475.4 680.5L505.4 679.3" stroke="#e4e4cc" stroke-width="1.6"/>
<path d="M486.6 649.2L482.6 694.7" stroke="#8f9484" stroke-width=".7"/>
<polygon points="473.7,698.8 504.1,696.6 503.4,706.4 472.8,709.1" fill="#433b3a" stroke="#7d8274" stroke-width=".8"/>
<polygon points="518.6,631.2 543.6,631.9 542.8,645.7 517.6,645.4" fill="#2a2423" stroke="#7d8274" stroke-width=".8"/>
<polygon points="517.4,649.3 542.6,649.4 540.3,690.9 514.3,692.6" fill="#433b3a" stroke="#7d8274" stroke-width=".8"/>
<path d="M516.2 665.0L541.8 664.5" stroke="#e4e4cc" stroke-width="1.6"/>
<path d="M515.3 678.8L541.1 677.8" stroke="#e4e4cc" stroke-width="1.6"/>
<path d="M524.5 649.3L521.6 692.1" stroke="#8f9484" stroke-width=".7"/>
<polygon points="514.0,695.9 540.2,694.1 539.7,703.2 513.4,705.5" fill="#433b3a" stroke="#7d8274" stroke-width=".8"/>
<polygon points="551.6,632.1 572.4,632.8 572.0,645.9 550.9,645.7" fill="#2a2423" stroke="#7d8274" stroke-width=".8"/>
<polygon points="550.8,649.4 571.9,649.5 570.6,688.9 548.7,690.3" fill="#393231" stroke="#7d8274" stroke-width=".8"/>
<path d="M550.0 664.3L571.4 663.9" stroke="#e4e4cc" stroke-width="1.6"/>
<path d="M549.4 677.4L571.0 676.5" stroke="#e4e4cc" stroke-width="1.6"/>
<path d="M556.8 649.5L555.0 689.9" stroke="#8f9484" stroke-width=".7"/>
<polygon points="548.6,693.5 570.5,691.9 570.2,700.5 548.2,702.4" fill="#393231" stroke="#7d8274" stroke-width=".8"/>
<polygon points="579.0,633.0 595.7,633.5 595.6,646.2 578.7,646.0" fill="#2a2423" stroke="#7d8274" stroke-width=".8"/>
<polygon points="578.6,649.5 595.5,649.6 595.1,687.3 577.5,688.4" fill="#433b3a" stroke="#7d8274" stroke-width=".8"/>
<path d="M578.2 663.8L595.4 663.4" stroke="#e4e4cc" stroke-width="1.6"/>
<path d="M577.8 676.2L595.3 675.4" stroke="#e4e4cc" stroke-width="1.6"/>
<path d="M583.5 649.6L582.6 688.1" stroke="#8f9484" stroke-width=".7"/>
<polygon points="577.4,691.4 595.1,690.1 595.0,698.3 577.2,699.9" fill="#433b3a" stroke="#7d8274" stroke-width=".8"/>
<polygon points="600.9,633.6 613.4,634.0 613.6,646.3 600.8,646.2" fill="#2a2423" stroke="#7d8274" stroke-width=".8"/>
<polygon points="600.8,649.6 613.6,649.7 614.0,686.0 600.6,686.9" fill="#433b3a" stroke="#7d8274" stroke-width=".8"/>
<path d="M600.7 663.3L613.8 663.0" stroke="#e4e4cc" stroke-width="1.6"/>
<path d="M600.6 675.2L613.9 674.6" stroke="#e4e4cc" stroke-width="1.6"/>
<path d="M604.5 649.6L604.5 686.7" stroke="#8f9484" stroke-width=".7"/>
<polygon points="600.6,689.7 614.0,688.8 614.1,696.6 600.5,697.8" fill="#433b3a" stroke="#7d8274" stroke-width=".8"/>
<polygon points="617.1,634.1 625.6,634.4 626.0,646.5 617.3,646.4" fill="#2a2423" stroke="#7d8274" stroke-width=".8"/>
<polygon points="617.4,649.7 626.1,649.7 627.3,685.2 618.0,685.8" fill="#393231" stroke="#7d8274" stroke-width=".8"/>
<path d="M617.6 662.9L626.5 662.8" stroke="#e4e4cc" stroke-width="1.6"/>
<path d="M617.8 674.5L626.9 674.1" stroke="#e4e4cc" stroke-width="1.6"/>
<path d="M620.0 649.7L620.8 685.6" stroke="#8f9484" stroke-width=".7"/>
<polygon points="618.0,688.5 627.3,687.8 627.6,695.4 618.2,696.3" fill="#393231" stroke="#7d8274" stroke-width=".8"/>
<polygon points="627.8,634.4 632.1,634.6 632.8,646.5 628.3,646.5" fill="#2a2423" stroke="#7d8274" stroke-width=".8"/>
<polygon points="628.4,649.7 633.0,649.7 634.9,684.7 629.8,685.0" fill="#433b3a" stroke="#7d8274" stroke-width=".8"/>
<path d="M628.9 662.7L633.7 662.6" stroke="#e4e4cc" stroke-width="1.6"/>
<path d="M629.3 674.0L634.3 673.8" stroke="#e4e4cc" stroke-width="1.6"/>
<path d="M629.9 649.7L631.5 684.9" stroke="#8f9484" stroke-width=".7"/>
<polygon points="629.9,687.7 635.0,687.3 635.4,694.7 630.2,695.2" fill="#433b3a" stroke="#7d8274" stroke-width=".8"/>
<polygon points="632.9,634.6 633.1,634.6 634.0,646.5 633.6,646.5" fill="#2a2423" stroke="#7d8274" stroke-width=".8"/>
<polygon points="633.8,649.7 634.2,649.7 636.9,684.5 635.9,684.6" fill="#433b3a" stroke="#7d8274" stroke-width=".8"/>
<path d="M634.6 662.6L635.2 662.6" stroke="#e4e4cc" stroke-width="1.6"/>
<path d="M635.3 673.7L636.1 673.7" stroke="#e4e4cc" stroke-width="1.6"/>
<path d="M634.2 649.7L636.5 684.6" stroke="#8f9484" stroke-width=".7"/>
<polygon points="636.1,687.2 637.1,687.1 637.7,694.5 636.6,694.6" fill="#433b3a" stroke="#7d8274" stroke-width=".8"/>
<polygon points="632.4,634.6 628.4,634.5 629.6,646.5 633.4,646.5" fill="#2a2423" stroke="#7d8274" stroke-width=".8"/>
<polygon points="633.6,649.7 629.9,649.7 633.4,684.8 636.5,684.6" fill="#393231" stroke="#7d8274" stroke-width=".8"/>
<path d="M634.7 662.6L631.2 662.7" stroke="#e4e4cc" stroke-width="1.6"/>
<path d="M635.6 673.7L632.3 673.9" stroke="#e4e4cc" stroke-width="1.6"/>
<path d="M632.9 649.7L636.0 684.6" stroke="#8f9484" stroke-width=".7"/>
<polygon points="636.7,687.2 633.6,687.4 634.4,694.8 637.4,694.6" fill="#393231" stroke="#7d8274" stroke-width=".8"/>
<polygon points="-70.0,778.1 -3.5,771.0 -10.5,798.5 -77.9,807.4" fill="#100e0d" stroke="#7d8274" stroke-width=".8"/>
<polygon points="19.0,768.6 80.9,762.0 75.1,787.2 12.4,795.5" fill="#100e0d" stroke="#7d8274" stroke-width=".8"/>
<polygon points="10.5,802.9 73.5,794.1 54.6,875.7 -11.1,890.4" fill="#100e0d" stroke="#7d8274" stroke-width=".8"/>
<path d="M2.9 833.7L66.8 822.9" stroke="#e4e4cc" stroke-width="1.6"/>
<path d="M-4.0 861.7L60.8 849.0" stroke="#e4e4cc" stroke-width="1.6"/>
<path d="M27.9 800.5L7.1 886.3" stroke="#8f9484" stroke-width=".7"/>
<polygon points="-12.8,897.5 53.1,882.3 48.7,901.6 -18.0,918.3" fill="#100e0d" stroke="#7d8274" stroke-width=".8"/>
<polygon points="101.8,759.8 159.2,753.6 154.4,776.7 96.3,784.4" fill="#433b3a" stroke="#7d8274" stroke-width=".8"/>
<polygon points="94.8,791.2 153.0,783.0 137.6,857.2 76.9,870.7" fill="#100e0d" stroke="#7d8274" stroke-width=".8"/>
<path d="M88.4 819.2L147.6 809.3" stroke="#e4e4cc" stroke-width="1.6"/>
<path d="M82.7 844.7L142.6 833.0" stroke="#e4e4cc" stroke-width="1.6"/>
<path d="M110.9 788.9L93.6 867.0" stroke="#8f9484" stroke-width=".7"/>
<polygon points="75.4,877.2 136.3,863.1 132.7,880.5 71.2,895.9" fill="#433b3a" stroke="#7d8274" stroke-width=".8"/>
<polygon points="178.5,751.6 231.4,745.9 227.4,767.0 174.0,774.1" fill="#393231" stroke="#7d8274" stroke-width=".8"/>
<polygon points="172.7,780.3 226.4,772.8 213.8,840.1 158.0,852.6" fill="#393231" stroke="#7d8274" stroke-width=".8"/>
<path d="M167.5 805.9L221.9 796.7" stroke="#e4e4cc" stroke-width="1.6"/>
<path d="M162.8 829.1L217.9 818.3" stroke="#e4e4cc" stroke-width="1.6"/>
<path d="M187.5 778.2L173.4 849.1" stroke="#8f9484" stroke-width=".7"/>
<polygon points="156.8,858.4 212.8,845.5 209.8,861.2 153.4,875.3" fill="#393231" stroke="#7d8274" stroke-width=".8"/>
<polygon points="249.2,744.0 297.5,738.8 294.4,758.2 245.4,764.6" fill="#433b3a" stroke="#7d8274" stroke-width=".8"/>
<polygon points="244.4,770.3 293.5,763.5 283.4,824.6 232.5,835.9" fill="#433b3a" stroke="#7d8274" stroke-width=".8"/>
<path d="M240.2 793.6L289.9 785.2" stroke="#e4e4cc" stroke-width="1.6"/>
<path d="M236.4 814.6L286.7 804.8" stroke="#e4e4cc" stroke-width="1.6"/>
<path d="M258.0 768.4L246.6 832.8" stroke="#8f9484" stroke-width=".7"/>
<polygon points="231.6,841.2 282.6,829.4 280.3,843.5 228.8,856.4" fill="#433b3a" stroke="#7d8274" stroke-width=".8"/>
<polygon points="313.8,737.1 357.7,732.4 355.2,750.1 310.7,756.0" fill="#1c1817" stroke="#7d8274" stroke-width=".8"/>
<polygon points="309.9,761.2 354.5,755.0 346.5,810.4 300.4,820.7" fill="#1c1817" stroke="#7d8274" stroke-width=".8"/>
<path d="M306.5 782.4L351.6 774.8" stroke="#e4e4cc" stroke-width="1.6"/>
<path d="M303.5 801.5L349.1 792.6" stroke="#e4e4cc" stroke-width="1.6"/>
<path d="M322.3 759.5L313.3 817.9" stroke="#8f9484" stroke-width=".7"/>
<polygon points="299.7,825.5 345.9,814.8 344.1,827.5 297.5,839.2" fill="#1c1817" stroke="#7d8274" stroke-width=".8"/>
<polygon points="372.4,730.8 411.9,726.6 409.9,742.9 370.0,748.2" fill="#393231" stroke="#7d8274" stroke-width=".8"/>
<polygon points="369.3,752.9 409.4,747.3 403.3,797.8 361.9,807.0" fill="#393231" stroke="#7d8274" stroke-width=".8"/>
<path d="M366.7 772.3L407.2 765.4" stroke="#e4e4cc" stroke-width="1.6"/>
<path d="M364.3 789.6L405.2 781.6" stroke="#e4e4cc" stroke-width="1.6"/>
<path d="M380.5 751.3L373.4 804.4" stroke="#8f9484" stroke-width=".7"/>
<polygon points="361.3,811.3 402.8,801.7 401.4,813.1 359.6,823.6" fill="#393231" stroke="#7d8274" stroke-width=".8"/>
<polygon points="425.0,725.2 460.2,721.5 458.7,736.4 423.2,741.1" fill="#433b3a" stroke="#7d8274" stroke-width=".8"/>
<polygon points="422.7,745.5 458.3,740.5 453.7,786.5 417.0,794.7" fill="#433b3a" stroke="#7d8274" stroke-width=".8"/>
<path d="M420.6 763.2L456.6 757.1" stroke="#e4e4cc" stroke-width="1.6"/>
<path d="M418.8 778.9L455.2 771.8" stroke="#e4e4cc" stroke-width="1.6"/>
<path d="M432.6 744.1L427.3 792.4" stroke="#8f9484" stroke-width=".7"/>
<polygon points="416.6,798.6 453.4,790.1 452.4,800.4 415.3,809.7" fill="#433b3a" stroke="#7d8274" stroke-width=".8"/>
<polygon points="471.7,720.2 502.6,716.9 501.5,730.8 470.4,734.9" fill="#433b3a" stroke="#7d8274" stroke-width=".8"/>
<polygon points="470.0,738.9 501.2,734.5 498.0,776.6 465.8,783.8" fill="#433b3a" stroke="#7d8274" stroke-width=".8"/>
<path d="M468.5 755.1L500.0 749.8" stroke="#e4e4cc" stroke-width="1.6"/>
<path d="M467.2 769.5L499.0 763.2" stroke="#e4e4cc" stroke-width="1.6"/>
<path d="M478.8 737.6L474.8 781.8" stroke="#8f9484" stroke-width=".7"/>
<polygon points="465.5,787.3 497.7,779.8 497.0,789.2 464.6,797.3" fill="#433b3a" stroke="#7d8274" stroke-width=".8"/>
<polygon points="512.6,715.9 539.1,713.0 538.4,725.9 511.7,729.4" fill="#393231" stroke="#7d8274" stroke-width=".8"/>
<polygon points="511.4,733.1 538.2,729.4 536.1,768.1 508.5,774.2" fill="#393231" stroke="#7d8274" stroke-width=".8"/>
<path d="M510.3 748.0L537.5 743.4" stroke="#e4e4cc" stroke-width="1.6"/>
<path d="M509.4 761.2L536.8 755.8" stroke="#e4e4cc" stroke-width="1.6"/>
<path d="M519.0 732.0L516.3 772.5" stroke="#8f9484" stroke-width=".7"/>
<polygon points="508.2,777.4 535.9,771.0 535.5,779.5 507.6,786.5" fill="#393231" stroke="#7d8274" stroke-width=".8"/>
<polygon points="547.7,712.1 569.9,709.7 569.5,721.8 547.1,724.7" fill="#433b3a" stroke="#7d8274" stroke-width=".8"/>
<polygon points="546.9,728.1 569.4,725.0 568.2,760.9 545.0,766.1" fill="#433b3a" stroke="#7d8274" stroke-width=".8"/>
<path d="M546.2 742.0L569.0 738.1" stroke="#e4e4cc" stroke-width="1.6"/>
<path d="M545.6 754.1L568.6 749.6" stroke="#e4e4cc" stroke-width="1.6"/>
<path d="M553.3 727.3L551.6 764.6" stroke="#8f9484" stroke-width=".7"/>
<polygon points="544.9,769.0 568.1,763.6 567.9,771.4 544.5,777.3" fill="#433b3a" stroke="#7d8274" stroke-width=".8"/>
<polygon points="576.9,709.0 594.9,707.1 594.8,718.4 576.6,720.8" fill="#433b3a" stroke="#7d8274" stroke-width=".8"/>
<polygon points="576.5,724.0 594.8,721.5 594.4,755.0 575.6,759.2" fill="#433b3a" stroke="#7d8274" stroke-width=".8"/>
<path d="M576.2 736.9L594.6 733.8" stroke="#e4e4cc" stroke-width="1.6"/>
<path d="M575.9 748.2L594.5 744.5" stroke="#e4e4cc" stroke-width="1.6"/>
<path d="M581.8 723.3L581.0 758.0" stroke="#8f9484" stroke-width=".7"/>
<polygon points="575.5,761.9 594.4,757.6 594.3,764.8 575.3,769.6" fill="#433b3a" stroke="#7d8274" stroke-width=".8"/>
<polygon points="600.5,706.5 614.2,705.0 614.3,715.8 600.4,717.7" fill="#393231" stroke="#7d8274" stroke-width=".8"/>
<polygon points="600.4,720.7 614.4,718.7 614.7,750.5 600.2,753.7" fill="#393231" stroke="#7d8274" stroke-width=".8"/>
<path d="M600.3 732.8L614.5 730.4" stroke="#e4e4cc" stroke-width="1.6"/>
<path d="M600.3 743.4L614.6 740.6" stroke="#e4e4cc" stroke-width="1.6"/>
<path d="M604.5 720.1L604.5 752.8" stroke="#8f9484" stroke-width=".7"/>
<polygon points="600.2,756.2 614.8,752.9 614.8,759.7 600.2,763.3" fill="#393231" stroke="#7d8274" stroke-width=".8"/>
<polygon points="618.3,704.6 627.9,703.5 628.2,714.0 618.5,715.3" fill="#433b3a" stroke="#7d8274" stroke-width=".8"/>
<polygon points="618.5,718.2 628.3,716.8 629.3,747.2 619.1,749.5" fill="#433b3a" stroke="#7d8274" stroke-width=".8"/>
<path d="M618.7 729.7L628.7 728.0" stroke="#e4e4cc" stroke-width="1.6"/>
<path d="M618.9 739.7L629.0 737.8" stroke="#e4e4cc" stroke-width="1.6"/>
<path d="M621.5 717.8L622.1 748.8" stroke="#8f9484" stroke-width=".7"/>
<polygon points="619.1,751.9 629.4,749.5 629.6,755.9 619.2,758.6" fill="#433b3a" stroke="#7d8274" stroke-width=".8"/>
<polygon points="630.5,703.3 635.9,702.7 636.4,712.9 630.9,713.6" fill="#433b3a" stroke="#7d8274" stroke-width=".8"/>
<polygon points="631.0,716.4 636.6,715.6 638.2,745.2 632.2,746.6" fill="#433b3a" stroke="#7d8274" stroke-width=".8"/>
<path d="M631.4 727.6L637.2 726.6" stroke="#e4e4cc" stroke-width="1.6"/>
<path d="M631.8 737.2L637.7 736.1" stroke="#e4e4cc" stroke-width="1.6"/>
<path d="M632.8 716.2L634.1 746.1" stroke="#8f9484" stroke-width=".7"/>
<polygon points="632.3,748.8 638.3,747.4 638.7,753.7 632.5,755.2" fill="#433b3a" stroke="#7d8274" stroke-width=".8"/>
<polygon points="637.0,702.6 638.3,702.4 639.1,712.6 637.7,712.7" fill="#393231" stroke="#7d8274" stroke-width=".8"/>
<polygon points="637.8,715.5 639.3,715.3 641.5,744.5 639.6,744.9" fill="#393231" stroke="#7d8274" stroke-width=".8"/>
<path d="M638.5 726.4L640.1 726.1" stroke="#e4e4cc" stroke-width="1.6"/>
<path d="M639.1 735.8L640.8 735.4" stroke="#e4e4cc" stroke-width="1.6"/>
<path d="M638.5 715.4L640.4 744.7" stroke="#8f9484" stroke-width=".7"/>
<polygon points="639.7,747.1 641.7,746.7 642.2,752.8 640.1,753.3" fill="#393231" stroke="#7d8274" stroke-width=".8"/>
<polygon points="638.0,702.4 635.2,702.8 636.2,712.9 638.8,712.6" fill="#433b3a" stroke="#7d8274" stroke-width=".8"/>
<polygon points="639.1,715.3 636.4,715.7 639.3,745.0 641.5,744.5" fill="#433b3a" stroke="#7d8274" stroke-width=".8"/>
<path d="M640.0 726.1L637.5 726.6" stroke="#e4e4cc" stroke-width="1.6"/>
<path d="M640.7 735.5L638.4 735.9" stroke="#e4e4cc" stroke-width="1.6"/>
<path d="M638.7 715.4L641.2 744.6" stroke="#8f9484" stroke-width=".7"/>
<polygon points="641.7,746.7 639.6,747.1 640.2,753.3 642.2,752.8" fill="#433b3a" stroke="#7d8274" stroke-width=".8"/>
<polygon points="-23.6,941.2 43.8,922.8 37.2,951.5 -31.3,972.2" fill="#433b3a" stroke="#7d8274" stroke-width=".8"/>
<polygon points="-33.4,980.8 35.3,959.4 13.7,1052.9 -58.6,1082.6" fill="#433b3a" stroke="#7d8274" stroke-width=".8"/>
<path d="M-42.2 1016.5L27.7 992.2" stroke="#e4e4cc" stroke-width="1.6"/>
<path d="M-50.3 1049.1L20.8 1022.2" stroke="#e4e4cc" stroke-width="1.6"/>
<path d="M-14.4 974.9L-38.6 1074.4" stroke="#8f9484" stroke-width=".7"/>
<polygon points="66.5,916.6 128.7,899.6 123.3,925.3 60.3,944.5" fill="#393231" stroke="#7d8274" stroke-width=".8"/>
<polygon points="58.5,952.2 121.8,932.4 104.5,1015.6 38.1,1042.9" fill="#393231" stroke="#7d8274" stroke-width=".8"/>
<path d="M51.3 984.1L115.7 961.8" stroke="#e4e4cc" stroke-width="1.6"/>
<path d="M44.8 1013.1L110.1 988.4" stroke="#e4e4cc" stroke-width="1.6"/>
<path d="M76.0 946.7L56.5 1035.3" stroke="#8f9484" stroke-width=".7"/>
<polygon points="149.6,893.9 206.6,878.4 202.3,901.4 144.6,918.9" fill="#433b3a" stroke="#7d8274" stroke-width=".8"/>
<polygon points="143.2,925.8 201.2,907.7 187.3,981.6 126.8,1006.5" fill="#433b3a" stroke="#7d8274" stroke-width=".8"/>
<path d="M137.4 954.3L196.3 933.9" stroke="#e4e4cc" stroke-width="1.6"/>
<path d="M132.1 980.1L191.8 957.5" stroke="#e4e4cc" stroke-width="1.6"/>
<path d="M159.2 920.8L143.6 999.6" stroke="#8f9484" stroke-width=".7"/>
<polygon points="225.8,873.1 277.7,859.0 274.3,879.5 221.7,895.5" fill="#433b3a" stroke="#7d8274" stroke-width=".8"/>
<polygon points="220.6,901.6 273.4,885.2 262.6,950.7 207.6,973.3" fill="#433b3a" stroke="#7d8274" stroke-width=".8"/>
<path d="M216.0 927.0L269.6 908.5" stroke="#e4e4cc" stroke-width="1.6"/>
<path d="M211.9 950.0L266.1 929.4" stroke="#e4e4cc" stroke-width="1.6"/>
<path d="M235.3 897.1L222.9 967.0" stroke="#8f9484" stroke-width=".7"/>
<polygon points="206.6,979.0 261.8,955.9 259.2,971.1 203.6,995.8" fill="#433b3a" stroke="#7d8274" stroke-width=".8"/>
<polygon points="295.1,854.2 342.1,841.4 339.5,859.8 291.9,874.2" fill="#393231" stroke="#7d8274" stroke-width=".8"/>
<polygon points="291.1,879.7 338.8,864.8 330.5,922.8 281.0,943.1" fill="#393231" stroke="#7d8274" stroke-width=".8"/>
<path d="M287.5 902.3L335.8 885.5" stroke="#e4e4cc" stroke-width="1.6"/>
<path d="M284.2 922.6L333.2 904.1" stroke="#e4e4cc" stroke-width="1.6"/>
<path d="M304.3 875.6L294.7 937.5" stroke="#8f9484" stroke-width=".7"/>
<polygon points="280.2,948.2 329.8,927.4 327.9,940.8 277.8,962.9" fill="#393231" stroke="#7d8274" stroke-width=".8"/>
<polygon points="357.8,837.1 399.9,825.6 397.9,842.1 355.3,855.0" fill="#433b3a" stroke="#7d8274" stroke-width=".8"/>
<polygon points="354.7,859.9 397.4,846.6 391.2,897.9 347.0,916.0" fill="#433b3a" stroke="#7d8274" stroke-width=".8"/>
<path d="M351.9 880.0L395.2 865.0" stroke="#e4e4cc" stroke-width="1.6"/>
<path d="M349.4 897.9L393.2 881.4" stroke="#e4e4cc" stroke-width="1.6"/>
<path d="M366.6 856.2L359.3 911.0" stroke="#8f9484" stroke-width=".7"/>
<polygon points="346.3,920.5 390.7,901.9 389.3,913.6 344.6,933.4" fill="#433b3a" stroke="#7d8274" stroke-width=".8"/>
<polygon points="413.9,821.8 451.2,811.6 449.8,826.3 412.0,837.8" fill="#433b3a" stroke="#7d8274" stroke-width=".8"/>
<polygon points="411.5,842.2 449.4,830.4 444.9,875.8 405.8,891.9" fill="#433b3a" stroke="#7d8274" stroke-width=".8"/>
<path d="M409.5 860.0L447.8 846.7" stroke="#e4e4cc" stroke-width="1.6"/>
<path d="M407.6 875.9L446.3 861.3" stroke="#e4e4cc" stroke-width="1.6"/>
<path d="M422.1 838.9L416.7 887.4" stroke="#8f9484" stroke-width=".7"/>
<polygon points="405.4,895.8 444.5,879.4 443.5,889.6 404.1,907.1" fill="#433b3a" stroke="#7d8274" stroke-width=".8"/>
<polygon points="463.5,808.2 496.2,799.3 495.2,812.6 462.2,822.6" fill="#393231" stroke="#7d8274" stroke-width=".8"/>
<polygon points="461.8,826.5 494.9,816.2 491.8,856.6 457.7,870.6" fill="#393231" stroke="#7d8274" stroke-width=".8"/>
<path d="M460.4 842.4L493.8 830.8" stroke="#e4e4cc" stroke-width="1.6"/>
<path d="M459.1 856.5L492.8 843.7" stroke="#e4e4cc" stroke-width="1.6"/>
<path d="M471.1 823.6L467.3 866.6" stroke="#8f9484" stroke-width=".7"/>
<polygon points="457.4,874.0 491.6,859.7 490.9,868.7 456.5,883.9" fill="#393231" stroke="#7d8274" stroke-width=".8"/>
<polygon points="506.9,796.4 535.0,788.7 534.3,800.7 506.0,809.3" fill="#433b3a" stroke="#7d8274" stroke-width=".8"/>
<polygon points="505.7,812.8 534.1,804.0 532.2,840.0 502.9,852.0" fill="#433b3a" stroke="#7d8274" stroke-width=".8"/>
<path d="M504.7 827.0L533.4 817.1" stroke="#e4e4cc" stroke-width="1.6"/>
<path d="M503.8 839.6L532.8 828.6" stroke="#e4e4cc" stroke-width="1.6"/>
<path d="M513.7 810.3L511.2 848.6" stroke="#8f9484" stroke-width=".7"/>
<polygon points="502.7,855.0 532.0,842.8 531.6,850.7 502.1,863.7" fill="#433b3a" stroke="#7d8274" stroke-width=".8"/>
<polygon points="544.0,786.2 567.6,779.8 567.2,790.7 543.5,797.9" fill="#433b3a" stroke="#7d8274" stroke-width=".8"/>
<polygon points="543.3,801.1 567.1,793.7 566.1,826.1 541.6,836.1" fill="#433b3a" stroke="#7d8274" stroke-width=".8"/>
<path d="M542.7 813.9L566.7 805.5" stroke="#e4e4cc" stroke-width="1.6"/>
<path d="M542.1 825.1L566.4 815.9" stroke="#e4e4cc" stroke-width="1.6"/>
<path d="M550.1 799.0L548.5 833.3" stroke="#8f9484" stroke-width=".7"/>
<polygon points="541.4,838.8 566.0,828.5 565.8,835.6 541.1,846.5" fill="#433b3a" stroke="#7d8274" stroke-width=".8"/>
<polygon points="575.1,777.8 594.2,772.5 594.1,782.6 574.8,788.4" fill="#393231" stroke="#7d8274" stroke-width=".8"/>
<polygon points="574.7,791.3 594.1,785.3 593.7,814.7 573.9,822.9" fill="#393231" stroke="#7d8274" stroke-width=".8"/>
<path d="M574.4 802.9L593.9 796.1" stroke="#e4e4cc" stroke-width="1.6"/>
<path d="M574.1 813.0L593.8 805.5" stroke="#e4e4cc" stroke-width="1.6"/>
<path d="M580.3 789.6L579.6 820.5" stroke="#8f9484" stroke-width=".7"/>
<polygon points="573.8,825.3 593.7,816.9 593.7,823.2 573.6,832.1" fill="#393231" stroke="#7d8274" stroke-width=".8"/>
<polygon points="600.2,770.9 614.9,766.9 615.0,776.2 600.1,780.8" fill="#433b3a" stroke="#7d8274" stroke-width=".8"/>
<polygon points="600.1,783.4 615.0,778.7 615.3,805.8 599.9,812.2" fill="#433b3a" stroke="#7d8274" stroke-width=".8"/>
<path d="M600.0 794.0L615.2 788.8" stroke="#e4e4cc" stroke-width="1.6"/>
<path d="M600.0 803.2L615.3 797.4" stroke="#e4e4cc" stroke-width="1.6"/>
<path d="M604.4 782.0L604.4 810.3" stroke="#8f9484" stroke-width=".7"/>
<polygon points="599.9,814.3 615.4,807.9 615.4,813.6 599.9,820.5" fill="#433b3a" stroke="#7d8274" stroke-width=".8"/>
<polygon points="619.3,765.7 629.8,762.8 630.1,771.7 619.5,774.9" fill="#433b3a" stroke="#7d8274" stroke-width=".8"/>
<polygon points="619.5,777.3 630.2,774.0 631.0,799.4 620.0,803.9" fill="#433b3a" stroke="#7d8274" stroke-width=".8"/>
<path d="M619.7 787.2L630.5 783.4" stroke="#e4e4cc" stroke-width="1.6"/>
<path d="M619.9 795.7L630.8 791.5" stroke="#e4e4cc" stroke-width="1.6"/>
<path d="M622.7 776.3L623.3 802.6" stroke="#8f9484" stroke-width=".7"/>
<polygon points="620.0,805.9 631.1,801.3 631.3,806.6 620.1,811.5" fill="#433b3a" stroke="#7d8274" stroke-width=".8"/>
<polygon points="632.8,762.0 639.0,760.3 639.5,768.8 633.1,770.7" fill="#393231" stroke="#7d8274" stroke-width=".8"/>
<polygon points="633.2,773.1 639.6,771.1 641.0,795.3 634.2,798.1" fill="#393231" stroke="#7d8274" stroke-width=".8"/>
<path d="M633.6 782.4L640.1 780.1" stroke="#e4e4cc" stroke-width="1.6"/>
<path d="M633.9 790.4L640.6 787.8" stroke="#e4e4cc" stroke-width="1.6"/>
<path d="M635.2 772.4L636.3 797.2" stroke="#8f9484" stroke-width=".7"/>
<polygon points="634.2,800.0 641.1,797.1 641.4,802.1 634.4,805.2" fill="#393231" stroke="#7d8274" stroke-width=".8"/>
<polygon points="640.5,759.9 642.7,759.3 643.3,767.6 641.0,768.3" fill="#433b3a" stroke="#7d8274" stroke-width=".8"/>
<polygon points="641.2,770.6 643.5,769.9 645.3,793.5 642.6,794.6" fill="#433b3a" stroke="#7d8274" stroke-width=".8"/>
<path d="M641.7 779.6L644.2 778.7" stroke="#e4e4cc" stroke-width="1.6"/>
<path d="M642.2 787.2L644.8 786.3" stroke="#e4e4cc" stroke-width="1.6"/>
<path d="M642.1 770.3L643.7 794.2" stroke="#8f9484" stroke-width=".7"/>
<polygon points="642.7,796.4 645.5,795.3 645.8,800.2 643.1,801.4" fill="#433b3a" stroke="#7d8274" stroke-width=".8"/>
<polygon points="642.7,759.3 640.8,759.8 641.6,768.2 643.4,767.6" fill="#433b3a" stroke="#7d8274" stroke-width=".8"/>
<polygon points="643.6,769.8 641.9,770.4 644.2,794.0 645.5,793.4" fill="#433b3a" stroke="#7d8274" stroke-width=".8"/>
<path d="M644.3 778.7L642.7 779.2" stroke="#e4e4cc" stroke-width="1.6"/>
<path d="M644.9 786.2L643.5 786.7" stroke="#e4e4cc" stroke-width="1.6"/>
<path d="M643.4 769.9L645.5 793.5" stroke="#8f9484" stroke-width=".7"/>
<polygon points="645.7,795.2 644.4,795.7 644.9,800.6 646.1,800.0" fill="#433b3a" stroke="#7d8274" stroke-width=".8"/>
<polygon points="-10.0,175.0 400.0,355.0 655.0,467.0 1100.0,660.0 1100.0,684.0 655.0,491.0 400.0,379.0 -10.0,199.0" fill="#0b0908"/>
<rect x="171" y="534" width="9" height="10" rx="2" fill="#f0a212" transform="rotate(-14 175 539)"/>
<rect x="173" y="536" width="5" height="6" rx="1" fill="#ffc63a" transform="rotate(-14 175 539)"/>
<rect x="243" y="550" width="9" height="10" rx="2" fill="#f0a212" transform="rotate(-14 247 555)"/>
<rect x="245" y="552" width="5" height="6" rx="1" fill="#ffc63a" transform="rotate(-14 247 555)"/>
<rect x="153" y="581" width="9" height="10" rx="2" fill="#f0a212" transform="rotate(-14 157 586)"/>
<rect x="155" y="583" width="5" height="6" rx="1" fill="#ffc63a" transform="rotate(-14 157 586)"/>
<rect x="231" y="584" width="9" height="10" rx="2" fill="#f0a212" transform="rotate(-14 235 589)"/>
<rect x="233" y="586" width="5" height="6" rx="1" fill="#ffc63a" transform="rotate(-14 235 589)"/>
<rect x="420" y="581" width="9" height="10" rx="2" fill="#f0a212" transform="rotate(-14 424 586)"/>
<rect x="422" y="583" width="5" height="6" rx="1" fill="#ffc63a" transform="rotate(-14 424 586)"/>
<rect x="48" y="622" width="9" height="10" rx="2" fill="#f0a212" transform="rotate(-14 52 627)"/>
<rect x="50" y="624" width="5" height="6" rx="1" fill="#ffc63a" transform="rotate(-14 52 627)"/>
<rect x="138" y="625" width="9" height="10" rx="2" fill="#f0a212" transform="rotate(-14 142 630)"/>
<rect x="140" y="627" width="5" height="6" rx="1" fill="#ffc63a" transform="rotate(-14 142 630)"/>
<rect x="211" y="633" width="9" height="10" rx="2" fill="#f0a212" transform="rotate(-14 215 638)"/>
<rect x="213" y="635" width="5" height="6" rx="1" fill="#ffc63a" transform="rotate(-14 215 638)"/>
<rect x="405" y="624" width="9" height="10" rx="2" fill="#f0a212" transform="rotate(-14 409 629)"/>
<rect x="407" y="626" width="5" height="6" rx="1" fill="#ffc63a" transform="rotate(-14 409 629)"/>
<rect x="38" y="652" width="9" height="10" rx="2" fill="#f0a212" transform="rotate(-14 42 657)"/>
<rect x="40" y="654" width="5" height="6" rx="1" fill="#ffc63a" transform="rotate(-14 42 657)"/>
<rect x="127" y="659" width="9" height="10" rx="2" fill="#f0a212" transform="rotate(-14 131 664)"/>
<rect x="129" y="661" width="5" height="6" rx="1" fill="#ffc63a" transform="rotate(-14 131 664)"/>
<rect x="246" y="674" width="9" height="10" rx="2" fill="#f0a212" transform="rotate(-14 250 679)"/>
<rect x="248" y="676" width="5" height="6" rx="1" fill="#ffc63a" transform="rotate(-14 250 679)"/>
<rect x="393" y="650" width="9" height="10" rx="2" fill="#f0a212" transform="rotate(-14 397 655)"/>
<rect x="395" y="652" width="5" height="6" rx="1" fill="#ffc63a" transform="rotate(-14 397 655)"/>
<rect x="110" y="706" width="9" height="10" rx="2" fill="#f0a212" transform="rotate(-14 114 711)"/>
<rect x="112" y="708" width="5" height="6" rx="1" fill="#ffc63a" transform="rotate(-14 114 711)"/>
<rect x="182" y="718" width="9" height="10" rx="2" fill="#f0a212" transform="rotate(-14 186 723)"/>
<rect x="184" y="720" width="5" height="6" rx="1" fill="#ffc63a" transform="rotate(-14 186 723)"/>
<rect x="381" y="689" width="9" height="10" rx="2" fill="#f0a212" transform="rotate(-14 385 694)"/>
<rect x="383" y="691" width="5" height="6" rx="1" fill="#ffc63a" transform="rotate(-14 385 694)"/>
<rect x="412" y="689" width="9" height="10" rx="2" fill="#f0a212" transform="rotate(-14 416 694)"/>
<rect x="414" y="691" width="5" height="6" rx="1" fill="#ffc63a" transform="rotate(-14 416 694)"/>
<rect x="367" y="731" width="9" height="10" rx="2" fill="#f0a212" transform="rotate(-14 371 736)"/>
<rect x="369" y="733" width="5" height="6" rx="1" fill="#ffc63a" transform="rotate(-14 371 736)"/>
<rect x="161" y="771" width="9" height="10" rx="2" fill="#f0a212" transform="rotate(-14 165 776)"/>
<rect x="163" y="773" width="5" height="6" rx="1" fill="#ffc63a" transform="rotate(-14 165 776)"/>
<rect x="75" y="803" width="9" height="10" rx="2" fill="#f0a212" transform="rotate(-14 79 808)"/>
<rect x="77" y="805" width="5" height="6" rx="1" fill="#ffc63a" transform="rotate(-14 79 808)"/>
<rect x="136" y="813" width="9" height="10" rx="2" fill="#f0a212" transform="rotate(-14 140 818)"/>
<rect x="138" y="815" width="5" height="6" rx="1" fill="#ffc63a" transform="rotate(-14 140 818)"/>
<rect x="63" y="834" width="9" height="10" rx="2" fill="#f0a212" transform="rotate(-14 67 839)"/>
<rect x="65" y="836" width="5" height="6" rx="1" fill="#ffc63a" transform="rotate(-14 67 839)"/>
<rect x="121" y="850" width="9" height="10" rx="2" fill="#f0a212" transform="rotate(-14 125 855)"/>
<rect x="123" y="852" width="5" height="6" rx="1" fill="#ffc63a" transform="rotate(-14 125 855)"/>
<rect x="51" y="865" width="9" height="10" rx="2" fill="#f0a212" transform="rotate(-14 55 870)"/>
<rect x="53" y="867" width="5" height="6" rx="1" fill="#ffc63a" transform="rotate(-14 55 870)"/>
<rect x="115" y="871" width="9" height="10" rx="2" fill="#f0a212" transform="rotate(-14 119 876)"/>
<rect x="117" y="873" width="5" height="6" rx="1" fill="#ffc63a" transform="rotate(-14 119 876)"/>
<rect x="45" y="887" width="9" height="10" rx="2" fill="#f0a212" transform="rotate(-14 49 892)"/>
<rect x="47" y="889" width="5" height="6" rx="1" fill="#ffc63a" transform="rotate(-14 49 892)"/>
<rect x="477" y="413" width="9" height="10" rx="2" fill="#f0a212" transform="rotate(-14 481 418)"/>
<rect x="479" y="415" width="5" height="6" rx="1" fill="#ffc63a" transform="rotate(-14 481 418)"/>
<rect x="467" y="442" width="9" height="10" rx="2" fill="#f0a212" transform="rotate(-14 471 447)"/>
<rect x="469" y="444" width="5" height="6" rx="1" fill="#ffc63a" transform="rotate(-14 471 447)"/>
<rect x="473" y="521" width="9" height="10" rx="2" fill="#f0a212" transform="rotate(-14 477 526)"/>
<rect x="475" y="523" width="5" height="6" rx="1" fill="#ffc63a" transform="rotate(-14 477 526)"/>
<rect x="462" y="550" width="9" height="10" rx="2" fill="#f0a212" transform="rotate(-14 466 555)"/>
<rect x="464" y="552" width="5" height="6" rx="1" fill="#ffc63a" transform="rotate(-14 466 555)"/>
<rect x="419" y="583" width="9" height="10" rx="2" fill="#f0a212" transform="rotate(-14 423 588)"/>
<rect x="421" y="585" width="5" height="6" rx="1" fill="#ffc63a" transform="rotate(-14 423 588)"/>
<rect x="14" y="526" width="9" height="10" rx="2" fill="#f0a212" transform="rotate(-14 18 531)"/>
<rect x="16" y="528" width="5" height="6" rx="1" fill="#ffc63a" transform="rotate(-14 18 531)"/>
</g>
<polygon points="-10.0,927.0 0.0,924.0 441.0,808.0 655.0,752.0 1100.0,635.0 1100.0,1080.0 -10.0,1080.0" fill="url(#skyB)"/>
<polygon points="736.0,1000.0 803.0,1000.0 834.0,1060.0 834.0,1080.0 676.0,1080.0" fill="#1b2a45"/>
<polygon points="736.0,1000.0 745.0,1000.0 690.0,1080.0 676.0,1080.0" fill="#0c121c"/>
<polygon points="800.0,1000.0 858.0,1000.0 832.0,1056.0 828.0,1056.0" fill="url(#skyF)"/>
<polygon points="856.0,1000.0 1045.0,880.0 1060.0,900.0 1175.0,1080.0 818.0,1080.0" fill="url(#meshB2)"/>
<polygon points="1000.0,860.0 1044.0,902.0 1175.0,1080.0 1000.0,1080.0" fill="url(#meshB)"/>
<polygon points="1020.0,862.0 1330.0,862.0 1245.0,884.0 1395.0,1080.0 1170.0,1080.0 1044.0,902.0 1020.0,895.0" fill="url(#skyE)"/>
<polygon points="1010.0,890.0 1245.0,867.0 1420.0,860.0 1420.0,872.0 1245.0,883.0 1010.0,903.0" fill="#090c11"/>
<polygon points="1010.0,890.0 1245.0,867.0 1330.0,863.0 1330.0,865.0 1245.0,870.0 1010.0,893.0" fill="#3a4048"/>
<polygon points="1128.0,862.0 1142.0,862.0 1223.0,1080.0 1201.0,1080.0" fill="#090c11"/>
<polygon points="1325.0,860.0 1760.0,860.0 1760.0,1080.0 1395.0,1080.0" fill="#050a14"/>
<clipPath id="clipTeal"><polygon points="1245,884 1325,863 1380,893 1640,1085 1398,1085"/></clipPath>
<g clip-path="url(#clipTeal)">
<rect x="1200" y="850" width="460" height="240" fill="#08121c"/>
<polygon points="1218.6,854.4 1226.8,865.0 1236.2,860.2 1228.1,849.6" fill="#1a5482"/>
<polygon points="1229.4,848.9 1237.6,859.5 1247.0,854.7 1238.9,844.2" fill="#1f6692"/>
<polygon points="1240.2,843.5 1248.4,854.1 1257.8,849.3 1249.6,838.7" fill="#2686a8"/>
<polygon points="1251.0,838.0 1259.1,848.6 1268.6,843.8 1260.4,833.2" fill="#123860"/>
<polygon points="1261.8,832.6 1269.9,843.1 1279.4,838.4 1271.2,827.8" fill="#143f6a"/>
<polygon points="1272.5,827.1 1280.7,837.7 1290.2,832.9 1282.0,822.3" fill="#1c5c8a"/>
<polygon points="1283.3,821.6 1291.5,832.2 1301.0,827.4 1292.8,816.9" fill="#0f2f4e"/>
<polygon points="1294.1,816.2 1302.3,826.8 1311.8,822.0 1303.6,811.4" fill="#123a5c"/>
<polygon points="1304.9,810.7 1313.1,821.3 1322.6,816.5 1314.4,805.9" fill="#0f2f4e"/>
<polygon points="1227.8,866.2 1235.9,876.8 1245.4,872.0 1237.2,861.5" fill="#2c9cb8"/>
<polygon points="1238.5,860.8 1246.7,871.4 1256.2,866.6 1248.0,856.0" fill="#1a5482"/>
<polygon points="1249.3,855.3 1257.5,865.9 1267.0,861.1 1258.8,850.5" fill="#123860"/>
<polygon points="1260.1,849.9 1268.3,860.5 1277.8,855.7 1269.6,845.1" fill="#2c9cb8"/>
<polygon points="1270.9,844.4 1279.1,855.0 1288.5,850.2 1280.4,839.6" fill="#1f6692"/>
<polygon points="1281.7,839.0 1289.9,849.5 1299.3,844.7 1291.2,834.2" fill="#143f6a"/>
<polygon points="1292.5,833.5 1300.7,844.1 1310.1,839.3 1302.0,828.7" fill="#123a5c"/>
<polygon points="1303.3,828.0 1311.5,838.6 1320.9,833.8 1312.7,823.2" fill="#0f2f4e"/>
<polygon points="1314.1,822.6 1322.2,833.2 1331.7,828.4 1323.5,817.8" fill="#123a5c"/>
<polygon points="1236.9,878.1 1245.1,888.7 1254.5,883.9 1246.4,873.3" fill="#123860"/>
<polygon points="1247.7,872.6 1255.9,883.2 1265.3,878.4 1257.2,867.9" fill="#174a78"/>
<polygon points="1258.5,867.2 1266.7,877.8 1276.1,873.0 1267.9,862.4" fill="#1c5c8a"/>
<polygon points="1269.3,861.7 1277.4,872.3 1286.9,867.5 1278.7,856.9" fill="#1f6692"/>
<polygon points="1280.1,856.3 1288.2,866.8 1297.7,862.1 1289.5,851.5" fill="#153f6c"/>
<polygon points="1290.9,850.8 1299.0,861.4 1308.5,856.6 1300.3,846.0" fill="#123860"/>
<polygon points="1301.6,845.3 1309.8,855.9 1319.3,851.1 1311.1,840.6" fill="#0f2f4e"/>
<polygon points="1312.4,839.9 1320.6,850.5 1330.1,845.7 1321.9,835.1" fill="#123a5c"/>
<polygon points="1323.2,834.4 1331.4,845.0 1340.9,840.2 1332.7,829.6" fill="#0f2f4e"/>
<polygon points="1246.0,890.0 1254.5,900.8 1264.3,895.9 1255.9,885.0" fill="#1a5482"/>
<polygon points="1257.2,884.3 1265.6,895.2 1275.4,890.2 1267.0,879.3" fill="#153f6c"/>
<polygon points="1268.3,878.7 1276.7,889.6 1286.6,884.6 1278.2,873.7" fill="#2c9cb8"/>
<polygon points="1279.5,873.0 1287.9,883.9 1297.7,879.0 1289.3,868.1" fill="#1c5c8a"/>
<polygon points="1290.6,867.4 1299.0,878.3 1308.8,873.3 1300.4,862.4" fill="#143f6a"/>
<polygon points="1301.8,861.8 1310.2,872.6 1320.0,867.7 1311.6,856.8" fill="#2686a8"/>
<polygon points="1312.9,856.1 1321.3,867.0 1331.1,862.0 1322.7,851.2" fill="#123a5c"/>
<polygon points="1324.0,850.5 1332.5,861.4 1342.3,856.4 1333.9,845.5" fill="#0f2f4e"/>
<polygon points="1335.2,844.8 1343.6,855.7 1353.4,850.8 1345.0,839.9" fill="#123a5c"/>
<polygon points="1255.4,902.1 1264.5,913.9 1275.4,908.4 1266.3,896.6" fill="#2c9cb8"/>
<polygon points="1267.7,895.9 1276.8,907.7 1287.7,902.2 1278.6,890.4" fill="#153f6c"/>
<polygon points="1279.9,889.7 1289.0,901.5 1299.9,896.0 1290.8,884.2" fill="#174a78"/>
<polygon points="1292.1,883.5 1301.2,895.3 1312.1,889.8 1303.0,878.0" fill="#1a5482"/>
<polygon points="1304.3,877.3 1313.4,889.1 1324.3,883.6 1315.2,871.8" fill="#1f6692"/>
<polygon points="1316.6,871.2 1325.7,883.0 1336.6,877.4 1327.5,865.6" fill="#2686a8"/>
<polygon points="1328.8,865.0 1337.9,876.8 1348.8,871.2 1339.7,859.5" fill="#0f2f4e"/>
<polygon points="1341.0,858.8 1350.1,870.6 1361.0,865.1 1351.9,853.3" fill="#123a5c"/>
<polygon points="1353.2,852.6 1362.4,864.4 1373.3,858.9 1364.1,847.1" fill="#0f2f4e"/>
<polygon points="1265.5,915.2 1275.4,927.9 1287.4,921.8 1277.6,909.0" fill="#123860"/>
<polygon points="1278.9,908.4 1288.8,921.1 1300.8,915.0 1291.0,902.3" fill="#2c9cb8"/>
<polygon points="1292.3,901.6 1302.2,914.4 1314.2,908.3 1304.4,895.5" fill="#1a5482"/>
<polygon points="1305.7,894.8 1315.6,907.6 1327.6,901.5 1317.8,888.7" fill="#123860"/>
<polygon points="1319.1,888.0 1328.9,900.8 1341.0,894.7 1331.2,881.9" fill="#153f6c"/>
<polygon points="1332.5,881.3 1342.3,894.0 1354.4,887.9 1344.5,875.2" fill="#1f6692"/>
<polygon points="1345.9,874.5 1355.7,887.3 1367.8,881.2 1357.9,868.4" fill="#123a5c"/>
<polygon points="1359.3,867.7 1369.1,880.5 1381.2,874.4 1371.3,861.6" fill="#0f2f4e"/>
<polygon points="1372.7,860.9 1382.5,873.7 1394.6,867.6 1384.7,854.8" fill="#123a5c"/>
<polygon points="1276.3,929.2 1287.0,943.0 1300.3,936.3 1289.7,922.5" fill="#1a5482"/>
<polygon points="1291.0,921.8 1301.7,935.6 1315.0,928.9 1304.3,915.0" fill="#1c5c8a"/>
<polygon points="1305.6,914.4 1316.3,928.2 1329.6,921.5 1319.0,907.6" fill="#2686a8"/>
<polygon points="1320.3,907.0 1331.0,920.8 1344.3,914.0 1333.6,900.2" fill="#153f6c"/>
<polygon points="1334.9,899.5 1345.6,913.4 1358.9,906.6 1348.3,892.8" fill="#143f6a"/>
<polygon points="1349.6,892.1 1360.3,906.0 1373.6,899.2 1362.9,885.4" fill="#1a5482"/>
<polygon points="1364.2,884.7 1374.9,898.5 1388.2,891.8 1377.6,878.0" fill="#0f2f4e"/>
<polygon points="1378.9,877.3 1389.6,891.1 1402.9,884.4 1392.2,870.6" fill="#123a5c"/>
<polygon points="1393.5,869.9 1404.2,883.7 1417.5,877.0 1406.8,863.2" fill="#0f2f4e"/>
<polygon points="1288.0,944.3 1299.5,959.2 1314.2,951.8 1302.7,936.9" fill="#2c9cb8"/>
<polygon points="1304.0,936.2 1315.5,951.1 1330.2,943.7 1318.7,928.8" fill="#143f6a"/>
<polygon points="1320.0,928.1 1331.5,943.0 1346.2,935.6 1334.7,920.7" fill="#123860"/>
<polygon points="1336.0,920.0 1347.5,935.0 1362.2,927.5 1350.7,912.6" fill="#2686a8"/>
<polygon points="1352.0,911.9 1363.5,926.9 1378.2,919.4 1366.6,904.5" fill="#1f6692"/>
<polygon points="1368.0,903.8 1379.5,918.8 1394.2,911.3 1382.6,896.4" fill="#174a78"/>
<polygon points="1384.0,895.7 1395.5,910.7 1410.2,903.3 1398.6,888.3" fill="#123a5c"/>
<polygon points="1400.0,887.6 1411.5,902.6 1426.2,895.2 1414.6,880.2" fill="#0f2f4e"/>
<polygon points="1416.0,879.5 1427.5,894.5 1442.2,887.1 1430.6,872.1" fill="#123a5c"/>
<polygon points="1300.5,960.5 1313.0,976.7 1329.1,968.5 1316.6,952.3" fill="#123860"/>
<polygon points="1318.0,951.7 1330.5,967.8 1346.6,959.7 1334.1,943.5" fill="#143f6a"/>
<polygon points="1335.4,942.8 1347.9,959.0 1364.0,950.9 1351.5,934.7" fill="#1c5c8a"/>
<polygon points="1352.9,934.0 1365.3,950.2 1381.5,942.0 1369.0,925.9" fill="#2c9cb8"/>
<polygon points="1370.3,925.2 1382.8,941.4 1398.9,933.2 1386.4,917.0" fill="#153f6c"/>
<polygon points="1387.7,916.4 1400.2,932.5 1416.3,924.4 1403.9,908.2" fill="#174a78"/>
<polygon points="1405.2,907.5 1417.7,923.7 1433.8,915.6 1421.3,899.4" fill="#0f2f4e"/>
<polygon points="1422.6,898.7 1435.1,914.9 1451.2,906.7 1438.7,890.6" fill="#123a5c"/>
<polygon points="1440.1,889.9 1452.6,906.1 1468.7,897.9 1456.2,881.7" fill="#0f2f4e"/>
<polygon points="1314.0,977.9 1327.5,995.4 1345.2,986.5 1331.7,969.0" fill="#1a5482"/>
<polygon points="1333.0,968.3 1346.5,985.8 1364.2,976.9 1350.7,959.4" fill="#123860"/>
<polygon points="1352.0,958.7 1365.5,976.2 1383.2,967.2 1369.7,949.8" fill="#2c9cb8"/>
<polygon points="1371.0,949.1 1384.5,966.6 1402.2,957.6 1388.7,940.2" fill="#1a5482"/>
<polygon points="1390.0,939.5 1403.5,957.0 1421.2,948.0 1407.7,930.5" fill="#143f6a"/>
<polygon points="1409.0,929.9 1422.5,947.3 1440.2,938.4 1426.7,920.9" fill="#153f6c"/>
<polygon points="1428.0,920.2 1441.5,937.7 1459.2,928.8 1445.7,911.3" fill="#123a5c"/>
<polygon points="1447.0,910.6 1460.5,928.1 1478.2,919.2 1464.7,901.7" fill="#0f2f4e"/>
<polygon points="1466.0,901.0 1479.5,918.5 1497.2,909.6 1483.7,892.1" fill="#123a5c"/>
<polygon points="1328.5,996.7 1343.0,1015.6 1362.4,1005.8 1347.8,986.9" fill="#2c9cb8"/>
<polygon points="1349.1,986.2 1363.7,1005.1 1383.1,995.3 1368.5,976.4" fill="#2686a8"/>
<polygon points="1369.8,975.8 1384.4,994.6 1403.7,984.9 1389.2,966.0" fill="#174a78"/>
<polygon points="1390.5,965.3 1405.1,984.2 1424.4,974.4 1409.8,955.5" fill="#143f6a"/>
<polygon points="1411.2,954.8 1425.7,973.7 1445.1,963.9 1430.5,945.0" fill="#1f6692"/>
<polygon points="1431.8,944.4 1446.4,963.3 1465.8,953.5 1451.2,934.6" fill="#2c9cb8"/>
<polygon points="1452.5,933.9 1467.1,952.8 1486.4,943.0 1471.9,924.1" fill="#0f2f4e"/>
<polygon points="1473.2,923.5 1487.8,942.3 1507.1,932.5 1492.5,913.7" fill="#123a5c"/>
<polygon points="1493.9,913.0 1508.4,931.9 1527.8,922.1 1513.2,903.2" fill="#0f2f4e"/>
<polygon points="1344.0,1016.8 1359.8,1037.2 1380.9,1026.5 1365.2,1006.1" fill="#123860"/>
<polygon points="1366.5,1005.5 1382.2,1025.9 1403.4,1015.2 1387.6,994.8" fill="#1f6692"/>
<polygon points="1389.0,994.1 1404.7,1014.5 1425.9,1003.8 1410.1,983.4" fill="#1a5482"/>
<polygon points="1411.4,982.7 1427.2,1003.1 1448.3,992.4 1432.6,972.0" fill="#174a78"/>
<polygon points="1433.9,971.3 1449.7,991.7 1470.8,981.0 1455.1,960.6" fill="#153f6c"/>
<polygon points="1456.4,960.0 1472.1,980.4 1493.3,969.7 1477.5,949.3" fill="#1c5c8a"/>
<polygon points="1478.9,948.6 1494.6,969.0 1515.8,958.3 1500.0,937.9" fill="#123a5c"/>
<polygon points="1501.3,937.2 1517.1,957.6 1538.2,946.9 1522.5,926.5" fill="#0f2f4e"/>
<polygon points="1523.8,925.9 1539.6,946.3 1560.7,935.6 1545.0,915.2" fill="#123a5c"/>
<polygon points="1360.8,1038.5 1377.8,1060.5 1400.8,1048.8 1383.8,1026.8" fill="#1a5482"/>
<polygon points="1385.2,1026.1 1402.2,1048.2 1425.2,1036.5 1408.2,1014.5" fill="#1f6692"/>
<polygon points="1409.6,1013.8 1426.6,1035.8 1449.7,1024.1 1432.6,1002.1" fill="#2686a8"/>
<polygon points="1434.0,1001.4 1451.0,1023.5 1474.1,1011.8 1457.1,989.8" fill="#123860"/>
<polygon points="1458.4,989.1 1475.4,1011.1 1498.5,999.4 1481.5,977.4" fill="#143f6a"/>
<polygon points="1482.8,976.7 1499.8,998.8 1522.9,987.1 1505.9,965.1" fill="#1c5c8a"/>
<polygon points="1507.2,964.4 1524.2,986.4 1547.3,974.7 1530.3,952.7" fill="#0f2f4e"/>
<polygon points="1531.6,952.0 1548.6,974.1 1571.7,962.4 1554.7,940.4" fill="#123a5c"/>
<polygon points="1556.0,939.7 1573.0,961.7 1596.1,950.0 1579.1,928.0" fill="#0f2f4e"/>
<polygon points="1378.7,1061.8 1397.1,1085.6 1422.2,1072.8 1403.9,1049.1" fill="#2c9cb8"/>
<polygon points="1405.2,1048.4 1423.6,1072.2 1448.7,1059.4 1430.4,1035.6" fill="#1a5482"/>
<polygon points="1431.7,1035.0 1450.1,1058.7 1475.2,1046.0 1456.9,1022.2" fill="#123860"/>
<polygon points="1458.2,1021.6 1476.6,1045.3 1501.7,1032.6 1483.4,1008.8" fill="#2c9cb8"/>
<polygon points="1484.7,1008.2 1503.0,1031.9 1528.2,1019.2 1509.8,995.4" fill="#1f6692"/>
<polygon points="1511.2,994.8 1529.5,1018.5 1554.7,1005.8 1536.3,982.0" fill="#143f6a"/>
<polygon points="1537.7,981.4 1556.0,1005.1 1581.2,992.4 1562.8,968.6" fill="#123a5c"/>
<polygon points="1564.1,968.0 1582.5,991.7 1607.7,979.0 1589.3,955.2" fill="#0f2f4e"/>
<polygon points="1590.6,954.6 1609.0,978.3 1634.2,965.6 1615.8,941.8" fill="#123a5c"/>
<polygon points="1398.1,1086.8 1417.9,1112.5 1445.3,1098.6 1425.5,1073.0" fill="#123860"/>
<polygon points="1426.8,1072.3 1446.6,1097.9 1474.0,1084.1 1454.2,1058.4" fill="#174a78"/>
<polygon points="1455.5,1057.7 1475.3,1083.4 1502.7,1069.5 1482.9,1043.9" fill="#1c5c8a"/>
<polygon points="1484.2,1043.2 1504.0,1068.9 1531.4,1055.0 1511.6,1029.4" fill="#1f6692"/>
<polygon points="1513.0,1028.7 1532.8,1054.3 1560.2,1040.5 1540.4,1014.8" fill="#153f6c"/>
<polygon points="1541.7,1014.1 1561.5,1039.8 1588.9,1025.9 1569.1,1000.3" fill="#123860"/>
<polygon points="1570.4,999.6 1590.2,1025.3 1617.6,1011.4 1597.8,985.7" fill="#0f2f4e"/>
<polygon points="1599.1,985.1 1618.9,1010.7 1646.3,996.9 1626.5,971.2" fill="#123a5c"/>
<polygon points="1627.9,970.5 1647.7,996.2 1675.1,982.3 1655.2,956.7" fill="#0f2f4e"/>
<polygon points="1418.8,1113.7 1440.2,1141.4 1470.0,1126.3 1448.6,1098.7" fill="#1a5482"/>
<polygon points="1450.0,1098.0 1471.3,1125.6 1501.1,1110.6 1479.8,1082.9" fill="#153f6c"/>
<polygon points="1481.1,1082.2 1502.5,1109.9 1532.3,1094.8 1510.9,1067.1" fill="#2c9cb8"/>
<polygon points="1512.2,1066.5 1533.6,1094.1 1563.4,1079.1 1542.0,1051.4" fill="#1c5c8a"/>
<polygon points="1543.3,1050.7 1564.7,1078.4 1594.5,1063.3 1573.1,1035.6" fill="#143f6a"/>
<polygon points="1574.5,1035.0 1595.8,1062.6 1625.6,1047.6 1604.3,1019.9" fill="#2686a8"/>
<polygon points="1605.6,1019.2 1627.0,1046.9 1656.8,1031.8 1635.4,1004.1" fill="#123a5c"/>
<polygon points="1636.7,1003.5 1658.1,1031.1 1687.9,1016.1 1666.5,988.4" fill="#0f2f4e"/>
<polygon points="1667.9,987.7 1689.2,1015.4 1719.0,1000.3 1697.7,972.6" fill="#123a5c"/>
</g>
<polygon points="819.0,28.0 1137.0,28.0 1112.0,150.0 861.0,160.0" fill="url(#meshL)"/>
<polygon points="819.0,28.0 985.0,28.0 975.0,160.0 861.0,160.0" fill="#8f9fb0"/>
<polygon points="819.0,28.0 985.0,28.0 975.0,160.0 861.0,160.0" fill="url(#meshL2)"/>
<polygon points="819.0,28.0 985.0,28.0 975.0,160.0 861.0,160.0" fill="url(#meshL2sh)"/>
<polygon points="1137.0,28.0 1388.0,28.0 1320.0,160.0 1110.0,160.0" fill="url(#skyC)"/>
<clipPath id="clipTP"><polygon points="1387,28 1592,28 1478,160 1318,160"/></clipPath>
<g clip-path="url(#clipTP)">
<rect x="1300" y="20" width="320" height="150" fill="#080d14"/>
<polygon points="1424.9,-42.8 1485.2,-1.8 1460.3,36.4 1403.9,-2.0" fill="#1d8a96"/>
<polygon points="1488.0,0.1 1539.1,34.8 1510.3,70.4 1463.1,38.3" fill="#3a3d62"/>
<polygon points="1541.0,36.2 1567.4,54.1 1537.5,88.9 1512.2,71.7" fill="#5b5d8a"/>
<polygon points="1569.0,55.2 1601.7,77.4 1569.9,110.9 1539.1,89.9" fill="#0a1620"/>
<polygon points="1402.7,0.0 1459.2,38.4 1436.0,74.0 1383.2,38.0" fill="#166776"/>
<polygon points="1461.8,40.2 1508.9,72.2 1482.1,105.3 1438.7,75.8" fill="#2a99a2"/>
<polygon points="1510.8,73.5 1536.0,90.7 1508.2,123.1 1484.0,106.6" fill="#35afb2"/>
<polygon points="1537.5,91.7 1568.3,112.6 1538.7,143.8 1509.6,124.0" fill="#0b1a28"/>
<polygon points="1381.9,40.2 1434.8,76.1 1407.4,118.3 1358.8,85.2" fill="#176473"/>
<polygon points="1437.2,77.8 1480.7,107.3 1448.9,146.5 1409.8,119.9" fill="#4a4b72"/>
<polygon points="1482.4,108.5 1506.6,125.0 1473.6,163.3 1450.6,147.7" fill="#5a5b83"/>
<polygon points="1508.0,125.9 1537.0,145.6 1501.9,182.6 1475.0,164.2" fill="#0b1a28"/>
<polygon points="1357.6,87.3 1406.2,120.3 1384.4,153.9 1339.1,123.2" fill="#1a6b7b"/>
<polygon points="1408.4,121.8 1447.5,148.4 1422.2,179.7 1386.6,155.4" fill="#2b9a9f"/>
<polygon points="1449.1,149.5 1472.1,165.2 1445.8,195.7 1423.8,180.7" fill="#3a3d62"/>
<polygon points="1473.4,166.0 1500.3,184.3 1472.4,213.8 1447.1,196.6" fill="#0b1a28"/>
<polygon points="1338.1,125.0 1383.3,155.8 1360.6,190.7 1318.9,162.4" fill="#1b4c68"/>
<polygon points="1385.3,157.2 1421.0,181.4 1394.7,213.9 1362.6,192.1" fill="#1d6a7c"/>
<polygon points="1422.4,182.4 1444.4,197.4 1417.1,229.2 1396.1,214.9" fill="#0b1a28"/>
<polygon points="1445.6,198.2 1470.9,215.4 1441.9,246.0 1418.3,230.0" fill="#0b1a28"/>
<rect x="1300" y="20" width="320" height="150" fill="url(#tpSh)"/>
</g>
<polygon points="1592.0,28.0 1920.0,28.0 1920.0,300.0 1753.0,280.0 1753.0,160.0 1480.0,160.0" fill="#04070c"/>
<polygon points="1797.0,73.0 1870.0,30.0 1920.0,58.0 1920.0,80.0 1837.0,121.0" fill="#12292b"/>
<polygon points="1842.0,123.0 1920.0,88.0 1920.0,149.0 1882.0,169.0" fill="#0e2326"/>
<polygon points="1701.0,146.0 1721.0,134.0 1771.0,159.0 1754.0,179.0" fill="#143034"/>
<polygon points="1585.0,30.0 1650.0,30.0 1665.0,80.0 1600.0,118.0 1585.0,100.0" fill="#08151f"/>
<circle cx="1709.700" cy="114.400" r="1.900" fill="#4fd040"/><circle cx="1759.600" cy="148.400" r="1.900" fill="#4fd040"/>
<clipPath id="clipRS"><polygon points="1745,275 1920,353 1920,586 1745,597"/></clipPath>
<g clip-path="url(#clipRS)">
<rect x="1740" y="270" width="180" height="330" fill="#114670"/>
<rect x="1740" y="270" width="180" height="130" fill="#0c3558" opacity=".55"/>
<path d="M1740 112L1925 62" stroke="#050d16" stroke-width="5"/>
<path d="M1740 159L1925 109" stroke="#050d16" stroke-width="5"/>
<path d="M1740 206L1925 156" stroke="#050d16" stroke-width="5"/>
<path d="M1740 253L1925 203" stroke="#050d16" stroke-width="5"/>
<path d="M1740 300L1925 250" stroke="#050d16" stroke-width="5"/>
<path d="M1740 347L1925 297" stroke="#050d16" stroke-width="5"/>
<path d="M1740 394L1925 344" stroke="#050d16" stroke-width="5"/>
<path d="M1740 441L1925 391" stroke="#050d16" stroke-width="5"/>
<path d="M1740 488L1925 438" stroke="#050d16" stroke-width="5"/>
<path d="M1740 535L1925 485" stroke="#050d16" stroke-width="5"/>
<path d="M1740 582L1925 532" stroke="#050d16" stroke-width="5"/>
<path d="M1740 629L1925 579" stroke="#050d16" stroke-width="5"/>
<path d="M1740 676L1925 626" stroke="#050d16" stroke-width="5"/>
<path d="M1740 723L1925 673" stroke="#050d16" stroke-width="5"/>
<path d="M1740 770L1925 720" stroke="#050d16" stroke-width="5"/>
<path d="M1740 817L1925 767" stroke="#050d16" stroke-width="5"/>
<path d="M1740 162L1925 262" stroke="#050d16" stroke-width="4"/>
<path d="M1740 206L1925 306" stroke="#050d16" stroke-width="4"/>
<path d="M1740 250L1925 350" stroke="#050d16" stroke-width="4"/>
<path d="M1740 294L1925 394" stroke="#050d16" stroke-width="4"/>
<path d="M1740 338L1925 438" stroke="#050d16" stroke-width="4"/>
<path d="M1740 382L1925 482" stroke="#050d16" stroke-width="4"/>
<path d="M1740 426L1925 526" stroke="#050d16" stroke-width="4"/>
<path d="M1740 470L1925 570" stroke="#050d16" stroke-width="4"/>
<path d="M1740 514L1925 614" stroke="#050d16" stroke-width="4"/>
<path d="M1740 558L1925 658" stroke="#050d16" stroke-width="4"/>
<path d="M1740 602L1925 702" stroke="#050d16" stroke-width="4"/>
<path d="M1740 646L1925 746" stroke="#050d16" stroke-width="4"/>
</g>
<polygon points="1753.0,279.0 1920.0,353.0 1920.0,330.0 1753.0,262.0" fill="#04070c"/>
<polygon points="1754.0,184.0 1779.0,179.0 1814.0,202.0 1786.0,229.0 1754.0,219.0" fill="#12302f"/>
<polygon points="1842.0,270.0 1882.0,260.0 1920.0,280.0 1920.0,330.0 1857.0,300.0" fill="#0e2a2e"/>
<circle cx="1811" cy="192" r="1.200" fill="#8a9a6a"/>
<polygon points="1809.0,583.0 1846.0,582.0 1846.0,586.0 1809.0,587.0" fill="#2fc4b8"/>
<polygon points="1905.0,585.0 1920.0,565.0 1920.0,585.0" fill="#2fc4b8"/>
<polygon points="1745.0,596.0 1920.0,585.0 1920.0,731.0 1846.0,812.0 1745.0,790.0" fill="url(#skyD)"/>
<polygon points="1846.0,812.0 1920.0,731.0 1920.0,760.0 1860.0,822.0" fill="#24242d"/>
<polygon points="1745.0,790.0 1846.0,812.0 1860.0,822.0 1920.0,760.0 1920.0,1080.0 1745.0,1080.0" fill="#05080e"/>
<polygon points="1753.0,800.0 1830.0,818.0 1800.0,870.0 1753.0,880.0" fill="#0c1826"/>
</svg>
<div id="dc" class="abs" style="left:654px;top:148px;width:1099px;height:714px;background:#d6d6d6;box-shadow:0 2px 8px rgba(0,0,0,.55),0 0 0 1px rgba(0,0,0,.35)">
<div class="abs" style="left:0;top:0;width:1099px;height:25px;background:#444"></div>
<div class="t" style="left:0;top:6px;width:1029px;text-align:center;font-weight:bold;font-size:12.5px;color:#8c8c8c">Double Commander</div>
<svg class="abs" style="left:1031px;top:7px" width="10" height="10" viewBox="0 0 10 10"><rect x="1" y="5" width="8" height="2" fill="#a8a8a8"/></svg>
<svg class="abs" style="left:1055px;top:7px" width="10" height="10" viewBox="0 0 10 10"><rect x="2" y="2" width="6.500" height="6.500" fill="none" stroke="#a8a8a8" stroke-width="1.800"/></svg>
<svg class="abs" style="left:1079px;top:7px" width="10" height="10" viewBox="0 0 10 10"><path d="M1.500 1.500l7 7M8.500 1.500l-7 7" stroke="#b4b4b4" stroke-width="2"/></svg>
<div class="t" style="left:8px;top:30px;color:#3a3a3a">Files</div>
<div class="t" style="left:50px;top:30px;color:#3a3a3a">Označit</div>
<div class="t" style="left:108px;top:30px;color:#3a3a3a">Príkazy</div>
<div class="t" style="left:164px;top:30px;color:#3a3a3a">Siet</div>
<div class="t" style="left:201px;top:30px;color:#3a3a3a">Záložky</div>
<div class="t" style="left:259px;top:30px;color:#3a3a3a">Favorites</div>
<div class="t" style="left:326px;top:30px;color:#3a3a3a">Zobrazit</div>
<div class="t" style="left:388px;top:30px;color:#3a3a3a">Konfigurácia</div>
<div class="t" style="left:474px;top:30px;color:#3a3a3a">Pomoc</div>
<svg class="abs" style="left:6px;top:51px" width="16" height="16" viewBox="0 0 16 16"><path d="M13.200 8A5.600 5.600 0 1 1 11.300 3.800" stroke="#3d3d3d" stroke-width="1.900" fill="none"/><path d="M9.300 5.800L14 6V1.300z" fill="#3d3d3d"/></svg>
<svg class="abs" style="left:30px;top:51px" width="16" height="16" viewBox="0 0 16 16"><rect x="0" y="1.500" width="16" height="13" rx="1.500" fill="#3d3d3d"/><text x="1.800" y="9.300" font-family="DejaVu Sans, sans-serif" font-size="7.500" font-weight="bold" fill="#d6d6d6">$</text><rect x="7.500" y="8.700" width="4.500" height="1.200" fill="#d6d6d6"/></svg>
<svg class="abs" style="left:54px;top:51px" width="16" height="16" viewBox="0 0 16 16"><polygon points="15.5,7.3 15.5,8.7 13.3,9.6 12.9,10.6 13.8,12.8 12.8,13.8 10.6,12.9 9.6,13.3 8.7,15.5 7.3,15.5 6.4,13.3 5.4,12.9 3.2,13.8 2.2,12.8 3.1,10.6 2.7,9.6 0.5,8.7 0.5,7.3 2.7,6.4 3.1,5.4 2.2,3.2 3.2,2.2 5.4,3.1 6.4,2.7 7.3,0.5 8.7,0.5 9.6,2.7 10.6,3.1 12.8,2.2 13.8,3.2 12.9,5.4 13.3,6.4" fill="#3d3d3d"/><circle cx="8" cy="8" r="2.300" fill="#d6d6d6"/></svg>
<svg class="abs" style="left:83px;top:51px" width="16" height="16" viewBox="0 0 16 16"><rect x="1.500" y="3.5" width="2.200" height="2" fill="#3d3d3d"/><rect x="4.800" y="3.5" width="9.700" height="2" fill="#3d3d3d"/><rect x="1.500" y="7" width="2.200" height="2" fill="#3d3d3d"/><rect x="4.800" y="7" width="9.700" height="2" fill="#3d3d3d"/><rect x="1.500" y="10.5" width="2.200" height="2" fill="#3d3d3d"/><rect x="4.800" y="10.5" width="9.700" height="2" fill="#3d3d3d"/></svg>
<svg class="abs" style="left:107px;top:51px" width="16" height="16" viewBox="0 0 16 16"><rect x="1" y="2.5" width="2.200" height="2" fill="#3d3d3d"/><rect x="5.300" y="2.5" width="9.700" height="2" fill="#3d3d3d"/><rect x="1" y="7" width="2.200" height="2" fill="#3d3d3d"/><rect x="5.300" y="7" width="9.700" height="2" fill="#3d3d3d"/><rect x="1" y="11.5" width="2.200" height="2" fill="#3d3d3d"/><rect x="5.300" y="11.5" width="9.700" height="2" fill="#3d3d3d"/></svg>
<svg class="abs" style="left:131px;top:51px" width="16" height="16" viewBox="0 0 16 16"><rect x="1" y="2.5" width="2" height="2" fill="#3d3d3d"/><rect x="1" y="7" width="2" height="2" fill="#3d3d3d"/><rect x="1" y="11.5" width="2" height="2" fill="#3d3d3d"/><rect x="5" y="2.5" width="2" height="2" fill="#3d3d3d"/><rect x="5" y="7" width="2" height="2" fill="#3d3d3d"/><rect x="5" y="11.5" width="2" height="2" fill="#3d3d3d"/><rect x="9" y="2.5" width="2" height="2" fill="#3d3d3d"/><rect x="9" y="7" width="2" height="2" fill="#3d3d3d"/><rect x="9" y="11.5" width="2" height="2" fill="#3d3d3d"/><rect x="13" y="2.5" width="2" height="2" fill="#3d3d3d"/><rect x="13" y="7" width="2" height="2" fill="#3d3d3d"/><rect x="13" y="11.5" width="2" height="2" fill="#3d3d3d"/></svg>
<svg class="abs" style="left:158px;top:51px" width="16" height="16" viewBox="0 0 16 16"><rect x="1" y="2" width="9" height="12" fill="#3d3d3d"/><rect x="11" y="2" width="1.500" height="12" fill="#3d3d3d"/><rect x="13.500" y="2" width="1.200" height="12" fill="#3d3d3d"/></svg>
<svg class="abs" style="left:188px;top:51px" width="16" height="16" viewBox="0 0 16 16"><path d="M14 5V3c0-.8-.6-1.500-1.500-1.500h-9C2.600 1.500 2 2.200 2 3v10c0 .8 .6 1.500 1.500 1.500h9c.9 0 1.500-.7 1.500-1.500v-2" stroke="#3d3d3d" stroke-width="1.700" fill="none"/><path d="M15.500 8H6.500M9.500 4.800L6.300 8l3.200 3.200" stroke="#3d3d3d" stroke-width="1.800" fill="none"/></svg>
<svg class="abs" style="left:212px;top:51px" width="16" height="16" viewBox="0 0 16 16"><path d="M2 5V3c0-.8 .6-1.500 1.500-1.500h9c.9 0 1.500 .7 1.500 1.500v10c0 .8-.6 1.500-1.500 1.500h-9C2.600 14.500 2 13.800 2 13v-2" stroke="#3d3d3d" stroke-width="1.700" fill="none"/><path d="M.5 8h9M6.500 4.800L9.700 8l-3.200 3.200" stroke="#3d3d3d" stroke-width="1.800" fill="none"/></svg>
<svg class="abs" style="left:241px;top:51px" width="16" height="16" viewBox="0 0 16 16"><rect x="2" y="2" width="12" height="12" fill="#3d3d3d"/><rect x="2" y="2" width="12" height="2.500" fill="#3d3d3d"/><path d="M8 6.500v6M5 9.500h6" stroke="#d6d6d6" stroke-width="1.700"/><rect x="2" y="4.500" width="12" height="1" fill="#d6d6d6"/></svg>
<svg class="abs" style="left:265px;top:51px" width="16" height="16" viewBox="0 0 16 16"><rect x="2" y="2" width="12" height="12" fill="#3d3d3d"/><rect x="2" y="4.500" width="12" height="1" fill="#d6d6d6"/><path d="M5 9.500h6" stroke="#d6d6d6" stroke-width="1.700"/></svg>
<svg class="abs" style="left:289px;top:51px" width="16" height="16" viewBox="0 0 16 16"><rect x="2" y="2" width="12" height="12" fill="#3d3d3d"/><rect x="2" y="4.500" width="12" height="1" fill="#d6d6d6"/><rect x="6.500" y="7.500" width="3" height="6.500" fill="#d6d6d6"/></svg>
<svg class="abs" style="left:318px;top:51px" width="16" height="16" viewBox="0 0 16 16"><path d="M1.500 5.500l1.500-3.500h10l1.500 3.500v8c0 .6-.4 1-1 1h-11c-.6 0-1-.4-1-1z" fill="#3d3d3d"/><rect x="3" y="3.200" width="10" height="1" fill="#d6d6d6"/><path d="M8 6.500v5M5.500 9.500L8 12l2.500-2.500" stroke="#d6d6d6" stroke-width="1.500" fill="none"/></svg>
<svg class="abs" style="left:342px;top:51px" width="16" height="16" viewBox="0 0 16 16"><path d="M1.500 5.500l1.500-3.500h10l1.500 3.500v8c0 .6-.4 1-1 1h-11c-.6 0-1-.4-1-1z" fill="#3d3d3d"/><rect x="3" y="3.200" width="10" height="1" fill="#d6d6d6"/><path d="M8 12.500v-5M5.500 9.500L8 7l2.500 2.500" stroke="#d6d6d6" stroke-width="1.500" fill="none"/></svg>
<svg class="abs" style="left:372px;top:51px" width="16" height="16" viewBox="0 0 16 16"><circle cx="6.300" cy="6.300" r="4.500" fill="none" stroke="#3d3d3d" stroke-width="1.900"/><path d="M9.700 9.700l4.800 4.800" stroke="#3d3d3d" stroke-width="2.300" stroke-linecap="round"/></svg>
<svg class="abs" style="left:396px;top:51px" width="16" height="16" viewBox="0 0 16 16"><path d="M1.500 14.500l.8-3.600 8-8 2.800 2.800-8 8z" fill="#3d3d3d"/><path d="M11.300 1.900l1-1c.4-.4 1-.4 1.400 0l1.400 1.400c.4 .4 .4 1 0 1.400l-1 1z" fill="#3d3d3d"/></svg>
<svg class="abs" style="left:420px;top:51px" width="16" height="16" viewBox="0 0 16 16"><path d="M4.500 1v14M11.500 1v14" stroke="#3d3d3d" stroke-width="1.600"/><circle cx="4.500" cy="4.500" r="2.300" fill="#3d3d3d"/><circle cx="4.500" cy="11.500" r="2.300" fill="#3d3d3d"/><circle cx="11.500" cy="4.500" r="2.300" fill="#3d3d3d"/><circle cx="11.500" cy="11.500" r="2.300" fill="#3d3d3d"/></svg>
<svg class="abs" style="left:444px;top:51px" width="16" height="16" viewBox="0 0 16 16"><rect x="1.500" y="2" width="8" height="8" fill="#3d3d3d"/><rect x="6.500" y="6.500" width="8" height="8" fill="#3d3d3d" stroke="#d6d6d6" stroke-width=".8"/></svg>
<div class="abs" style="left:75px;top:48px;width:1px;height:22px;background:#c6c6c6"></div><div class="abs" style="left:76px;top:48px;width:1px;height:22px;background:#e6e6e6"></div>
<div class="abs" style="left:151px;top:48px;width:1px;height:22px;background:#c6c6c6"></div><div class="abs" style="left:152px;top:48px;width:1px;height:22px;background:#e6e6e6"></div>
<div class="abs" style="left:179px;top:48px;width:1px;height:22px;background:#c6c6c6"></div><div class="abs" style="left:180px;top:48px;width:1px;height:22px;background:#e6e6e6"></div>
<div class="abs" style="left:233px;top:48px;width:1px;height:22px;background:#c6c6c6"></div><div class="abs" style="left:234px;top:48px;width:1px;height:22px;background:#e6e6e6"></div>
<div class="abs" style="left:310px;top:48px;width:1px;height:22px;background:#c6c6c6"></div><div class="abs" style="left:311px;top:48px;width:1px;height:22px;background:#e6e6e6"></div>
<div class="abs" style="left:363px;top:48px;width:1px;height:22px;background:#c6c6c6"></div><div class="abs" style="left:364px;top:48px;width:1px;height:22px;background:#e6e6e6"></div>
<div class="abs" style="left:0;top:71px;width:1099px;height:1px;background:#b4b4b4"></div><div class="abs" style="left:0;top:72px;width:1099px;height:1px;background:#f2f2f2"></div>
<svg class="abs" style="left:10px;top:77px" width="12" height="14" viewBox="0 0 12 14"><rect x="0" y="0" width="12" height="14" rx="1" fill="#3d3d3d"/><circle cx="6" cy="6" r="3.600" fill="#e0e0e0"/><circle cx="6" cy="6" r="1.500" fill="#3d3d3d"/><path d="M2 11.500l2-2" stroke="#e0e0e0" stroke-width="1.300"/></svg>
<div class="t" style="left:28px;top:78px;color:#2e2e2e">datadisk</div>
<svg class="abs" style="left:87px;top:76px" width="14" height="16" viewBox="0 0 14 16"><path d="M7 0l2.600 3.400H7.900v9.200h-1.800V3.400H4.400z" fill="#8e8e8e"/><circle cx="7" cy="13.600" r="2.100" fill="#8e8e8e"/><path d="M2.200 6.500v2.300c0 1 .5 1.600 1.400 2l3.400 1.500M11.800 6v2.800c0 1-.5 1.600-1.400 2L7 12.300" stroke="#8e8e8e" stroke-width="1.700" fill="none"/><circle cx="2.200" cy="5.800" r="1.700" fill="#8e8e8e"/><rect x="10.200" y="3.800" width="3.200" height="3.200" fill="#8e8e8e"/></svg>
<div class="t" style="left:107px;top:78px;color:#2e2e2e">sdc</div>
<svg class="abs" style="left:139px;top:76px" width="14" height="16" viewBox="0 0 14 16"><path d="M7 0l2.600 3.400H7.900v9.200h-1.800V3.400H4.400z" fill="#8e8e8e"/><circle cx="7" cy="13.600" r="2.100" fill="#8e8e8e"/><path d="M2.200 6.500v2.300c0 1 .5 1.600 1.400 2l3.400 1.500M11.800 6v2.800c0 1-.5 1.600-1.400 2L7 12.300" stroke="#8e8e8e" stroke-width="1.700" fill="none"/><circle cx="2.200" cy="5.800" r="1.700" fill="#8e8e8e"/><rect x="10.200" y="3.800" width="3.200" height="3.200" fill="#8e8e8e"/></svg>
<div class="t" style="left:158px;top:78px;color:#2e2e2e">sdd</div>
<svg class="abs" style="left:191px;top:76px" width="14" height="16" viewBox="0 0 14 16"><path d="M7 0l2.600 3.400H7.900v9.200h-1.800V3.400H4.400z" fill="#8e8e8e"/><circle cx="7" cy="13.600" r="2.100" fill="#8e8e8e"/><path d="M2.200 6.500v2.300c0 1 .5 1.600 1.400 2l3.400 1.500M11.800 6v2.800c0 1-.5 1.600-1.400 2L7 12.300" stroke="#8e8e8e" stroke-width="1.700" fill="none"/><circle cx="2.200" cy="5.800" r="1.700" fill="#8e8e8e"/><rect x="10.200" y="3.800" width="3.200" height="3.200" fill="#8e8e8e"/></svg>
<div class="t" style="left:210px;top:78px;color:#2e2e2e">sde</div>
<svg class="abs" style="left:243px;top:76px" width="14" height="16" viewBox="0 0 14 16"><path d="M7 0l2.600 3.400H7.900v9.200h-1.800V3.400H4.400z" fill="#8e8e8e"/><circle cx="7" cy="13.600" r="2.100" fill="#8e8e8e"/><path d="M2.200 6.500v2.300c0 1 .5 1.600 1.400 2l3.400 1.500M11.800 6v2.800c0 1-.5 1.600-1.400 2L7 12.300" stroke="#8e8e8e" stroke-width="1.700" fill="none"/><circle cx="2.200" cy="5.800" r="1.700" fill="#8e8e8e"/><rect x="10.200" y="3.800" width="3.200" height="3.200" fill="#8e8e8e"/></svg>
<div class="t" style="left:262px;top:78px;color:#2e2e2e">sdf</div>
<svg class="abs" style="left:291px;top:76px" width="16" height="16" viewBox="0 0 16 16"><circle cx="8" cy="8" r="7.500" fill="#9a9a9a"/><circle cx="8" cy="8" r="2.500" fill="#dedede"/><circle cx="8" cy="8" r="1" fill="#9a9a9a"/></svg>
<div class="t" style="left:310px;top:78px;color:#2e2e2e">sr0</div>
<svg class="abs" style="left:342px;top:76px" width="16" height="16" viewBox="0 0 16 16"><rect x="0" y="0" width="16" height="3.300" fill="#3d3d3d"/><rect x="1.500" y="1" width="1.200" height="1.200" fill="#d6d6d6"/><rect x="4" y="1" width="1.200" height="1.200" fill="#d6d6d6"/><rect x="11" y="1" width="3.500" height="1.200" fill="#d6d6d6"/><rect x="0" y="4.3" width="16" height="3.300" fill="#3d3d3d"/><rect x="1.500" y="5.3" width="1.200" height="1.200" fill="#d6d6d6"/><rect x="4" y="5.3" width="1.200" height="1.200" fill="#d6d6d6"/><rect x="11" y="5.3" width="3.500" height="1.200" fill="#d6d6d6"/><rect x="0" y="8.6" width="16" height="3.300" fill="#3d3d3d"/><rect x="1.500" y="9.6" width="1.200" height="1.200" fill="#d6d6d6"/><rect x="4" y="9.6" width="1.200" height="1.200" fill="#d6d6d6"/><rect x="11" y="9.6" width="3.500" height="1.200" fill="#d6d6d6"/><rect x="7.200" y="12" width="1.600" height="3" fill="#3d3d3d"/><rect x="3" y="14.500" width="10" height="1.500" fill="#3d3d3d"/></svg>
<div class="t" style="left:361px;top:78px;color:#2e2e2e">//</div>
<div class="t" style="left:384px;top:78px;color:#2e2e2e">/</div>
<div class="t" style="left:406px;top:78px;color:#2e2e2e">..</div>
<div class="t" style="left:430px;top:78px;color:#2e2e2e">~</div>
<div class="abs" style="left:553px;top:73px;width:79px;height:22px;background:linear-gradient(#e4e4e4,#dadada);border:1px solid #c4c4c4;border-radius:2px"></div>
<svg class="abs" style="left:561px;top:77px" width="12" height="14" viewBox="0 0 12 14"><rect x="0" y="0" width="12" height="14" rx="1" fill="#3d3d3d"/><circle cx="6" cy="6" r="3.600" fill="#e0e0e0"/><circle cx="6" cy="6" r="1.500" fill="#3d3d3d"/><path d="M2 11.500l2-2" stroke="#e0e0e0" stroke-width="1.300"/></svg>
<div class="t" style="left:579px;top:78px;color:#2e2e2e">datadisk</div>
<svg class="abs" style="left:638px;top:76px" width="14" height="16" viewBox="0 0 14 16"><path d="M7 0l2.600 3.400H7.900v9.200h-1.800V3.400H4.400z" fill="#8e8e8e"/><circle cx="7" cy="13.600" r="2.100" fill="#8e8e8e"/><path d="M2.200 6.500v2.300c0 1 .5 1.600 1.400 2l3.400 1.500M11.800 6v2.800c0 1-.5 1.600-1.400 2L7 12.300" stroke="#8e8e8e" stroke-width="1.700" fill="none"/><circle cx="2.200" cy="5.800" r="1.700" fill="#8e8e8e"/><rect x="10.200" y="3.800" width="3.200" height="3.200" fill="#8e8e8e"/></svg>
<div class="t" style="left:658px;top:78px;color:#2e2e2e">sdc</div>
<svg class="abs" style="left:690px;top:76px" width="14" height="16" viewBox="0 0 14 16"><path d="M7 0l2.600 3.400H7.900v9.200h-1.800V3.400H4.400z" fill="#8e8e8e"/><circle cx="7" cy="13.600" r="2.100" fill="#8e8e8e"/><path d="M2.200 6.500v2.300c0 1 .5 1.600 1.400 2l3.400 1.500M11.800 6v2.800c0 1-.5 1.600-1.400 2L7 12.300" stroke="#8e8e8e" stroke-width="1.700" fill="none"/><circle cx="2.200" cy="5.800" r="1.700" fill="#8e8e8e"/><rect x="10.200" y="3.800" width="3.200" height="3.200" fill="#8e8e8e"/></svg>
<div class="t" style="left:709px;top:78px;color:#2e2e2e">sdd</div>
<svg class="abs" style="left:742px;top:76px" width="14" height="16" viewBox="0 0 14 16"><path d="M7 0l2.600 3.400H7.900v9.200h-1.800V3.400H4.400z" fill="#8e8e8e"/><circle cx="7" cy="13.600" r="2.100" fill="#8e8e8e"/><path d="M2.200 6.500v2.300c0 1 .5 1.600 1.400 2l3.400 1.500M11.800 6v2.800c0 1-.5 1.600-1.400 2L7 12.300" stroke="#8e8e8e" stroke-width="1.700" fill="none"/><circle cx="2.200" cy="5.800" r="1.700" fill="#8e8e8e"/><rect x="10.200" y="3.800" width="3.200" height="3.200" fill="#8e8e8e"/></svg>
<div class="t" style="left:761px;top:78px;color:#2e2e2e">sde</div>
<svg class="abs" style="left:794px;top:76px" width="14" height="16" viewBox="0 0 14 16"><path d="M7 0l2.600 3.400H7.900v9.200h-1.800V3.400H4.400z" fill="#8e8e8e"/><circle cx="7" cy="13.600" r="2.100" fill="#8e8e8e"/><path d="M2.200 6.500v2.300c0 1 .5 1.600 1.400 2l3.400 1.500M11.800 6v2.800c0 1-.5 1.600-1.400 2L7 12.300" stroke="#8e8e8e" stroke-width="1.700" fill="none"/><circle cx="2.200" cy="5.800" r="1.700" fill="#8e8e8e"/><rect x="10.200" y="3.800" width="3.200" height="3.200" fill="#8e8e8e"/></svg>
<div class="t" style="left:813px;top:78px;color:#2e2e2e">sdf</div>
<svg class="abs" style="left:842px;top:76px" width="16" height="16" viewBox="0 0 16 16"><circle cx="8" cy="8" r="7.500" fill="#9a9a9a"/><circle cx="8" cy="8" r="2.500" fill="#dedede"/><circle cx="8" cy="8" r="1" fill="#9a9a9a"/></svg>
<div class="t" style="left:861px;top:78px;color:#2e2e2e">sr0</div>
<svg class="abs" style="left:893px;top:76px" width="16" height="16" viewBox="0 0 16 16"><rect x="0" y="0" width="16" height="3.300" fill="#3d3d3d"/><rect x="1.500" y="1" width="1.200" height="1.200" fill="#d6d6d6"/><rect x="4" y="1" width="1.200" height="1.200" fill="#d6d6d6"/><rect x="11" y="1" width="3.500" height="1.200" fill="#d6d6d6"/><rect x="0" y="4.3" width="16" height="3.300" fill="#3d3d3d"/><rect x="1.500" y="5.3" width="1.200" height="1.200" fill="#d6d6d6"/><rect x="4" y="5.3" width="1.200" height="1.200" fill="#d6d6d6"/><rect x="11" y="5.3" width="3.500" height="1.200" fill="#d6d6d6"/><rect x="0" y="8.6" width="16" height="3.300" fill="#3d3d3d"/><rect x="1.500" y="9.6" width="1.200" height="1.200" fill="#d6d6d6"/><rect x="4" y="9.6" width="1.200" height="1.200" fill="#d6d6d6"/><rect x="11" y="9.6" width="3.500" height="1.200" fill="#d6d6d6"/><rect x="7.200" y="12" width="1.600" height="3" fill="#3d3d3d"/><rect x="3" y="14.500" width="10" height="1.500" fill="#3d3d3d"/></svg>
<div class="t" style="left:912px;top:78px;color:#2e2e2e">//</div>
<div class="t" style="left:935px;top:78px;color:#2e2e2e">/</div>
<div class="t" style="left:957px;top:78px;color:#2e2e2e">..</div>
<div class="t" style="left:981px;top:78px;color:#2e2e2e">~</div>
<div class="abs" style="left:0;top:95px;width:1099px;height:1px;background:#b4b4b4"></div><div class="abs" style="left:0;top:96px;width:1099px;height:1px;background:#f2f2f2"></div>
<div class="t" style="left:2px;top:101px;width:546px;text-align:center;color:#2a2a2a">Voľné miesto 73.1 G bytov</div>
<div class="t" style="left:553px;top:101px;width:546px;text-align:center;color:#2a2a2a">Voľné miesto 645.5 G bytov</div>
<div class="abs" style="left:2px;top:117px;width:547px;height:541px;border:1px solid #c2c2c2;border-radius:2px;box-shadow:inset 1px 1px 0 #e6e6e6"></div>
<div class="abs" style="left:4px;top:119px;width:542px;height:19px;background:#2f80dd"></div>
<div class="t" style="left:7px;top:121px;color:#fff;font-size:14px">/home/dumaru</div>
<div class="abs" style="left:4px;top:138px;width:542px;height:502px;background:#fcfcfc;border:1px solid #111"></div>
<div class="abs" style="left:4px;top:138px;width:184px;height:26px;background:#c8c8c8;border:1px solid #111"></div>
<div class="t" style="left:8px;top:144px;color:#2a2a2a">Meno</div>
<div class="abs" style="left:187px;top:138px;width:62px;height:26px;background:#c8c8c8;border:1px solid #111"></div>
<div class="t" style="left:191px;top:144px;color:#2a2a2a">Prípona</div>
<div class="abs" style="left:248px;top:138px;width:59px;height:26px;background:#c8c8c8;border:1px solid #111"></div>
<div class="t" style="left:252px;top:144px;color:#2a2a2a">Veľkost</div>
<div class="abs" style="left:306px;top:138px;width:144px;height:26px;background:#c8c8c8;border:1px solid #111"></div>
<div class="t" style="left:310px;top:144px;color:#2a2a2a">Dátum</div>
<div class="abs" style="left:449px;top:138px;width:93px;height:26px;background:#c8c8c8;border:1px solid #111"></div>
<div class="t" style="left:453px;top:144px;color:#2a2a2a">Atr.</div>
<div class="abs" style="left:5px;top:164px;width:537px;height:26px;background:#2f80dd"></div>
<svg class="abs" style="left:13px;top:170px" width="12" height="14" viewBox="0 0 12 14"><path d="M6 12.500V1.500M1.200 6.300L6 1.500l4.800 4.800" stroke="#4a4036" stroke-width="1.900" fill="none"/></svg>
<div class="t" style="left:33px;top:169px;font-size:13px;font-family:'DejaVu Sans', 'Liberation Sans', sans-serif;color:#fff">[..]</div>
<div class="t" style="left:261px;top:169px;font-size:12.5px;width:43px;font-family:'DejaVu Sans', 'Liberation Sans', sans-serif;color:#fff">&lt;DIR&gt;</div>
<div class="t" style="left:316px;top:169px;font-size:12.5px;font-family:'DejaVu Sans', 'Liberation Sans', sans-serif;color:#fff">26.10.2019 23:24:04</div>
<div class="t" style="left:452px;top:169px;font-size:12.5px;letter-spacing:.1px;font-family:'DejaVu Sans', 'Liberation Sans', sans-serif;color:#fff">drwxr-xr-x</div>
<svg class="abs" style="left:9px;top:194px" width="20" height="18" viewBox="0 0 20 18"><path d="M0 1.500C0 .700 .600 0 1.500 0h5l1.500 2H20v16H0z" fill="#4676c0"/><rect x="0" y="3" width="20" height="15" rx=".600" fill="#5590e2"/><rect x="2" y="4.200" width="16" height="1.300" fill="#eef3fb"/><path d="M7 8h4.500l1.500 1.500V15H7z" fill="#1f2f55"/></svg>
<div class="t" style="left:33px;top:195px;font-size:13px;font-family:'DejaVu Sans', 'Liberation Sans', sans-serif;color:#1c1c1c">[Dokumenty]</div>
<div class="t" style="left:261px;top:195px;font-size:12.5px;width:43px;font-family:'DejaVu Sans', 'Liberation Sans', sans-serif;color:#1c1c1c">&lt;DIR&gt;</div>
<div class="t" style="left:316px;top:195px;font-size:12.5px;font-family:'DejaVu Sans', 'Liberation Sans', sans-serif;color:#1c1c1c">26.10.2019 23:05:47</div>
<div class="t" style="left:452px;top:195px;font-size:12.5px;letter-spacing:.1px;font-family:'DejaVu Sans', 'Liberation Sans', sans-serif;color:#1c1c1c">drwxr-xr-x</div>
<svg class="abs" style="left:9px;top:220px" width="20" height="18" viewBox="0 0 20 18"><path d="M0 1.500C0 .700 .600 0 1.500 0h5l1.500 2H20v16H0z" fill="#4676c0"/><rect x="0" y="3" width="20" height="15" rx=".600" fill="#5590e2"/><rect x="2" y="4.200" width="16" height="1.300" fill="#eef3fb"/></svg>
<div class="t" style="left:33px;top:221px;font-size:13px;font-family:'DejaVu Sans', 'Liberation Sans', sans-serif;color:#1c1c1c">[Dosprogs]</div>
<div class="t" style="left:261px;top:221px;font-size:12.5px;width:43px;font-family:'DejaVu Sans', 'Liberation Sans', sans-serif;color:#1c1c1c">&lt;DIR&gt;</div>
<div class="t" style="left:316px;top:221px;font-size:12.5px;font-family:'DejaVu Sans', 'Liberation Sans', sans-serif;color:#1c1c1c">27.10.2019 09:09:30</div>
<div class="t" style="left:452px;top:221px;font-size:12.5px;letter-spacing:.1px;font-family:'DejaVu Sans', 'Liberation Sans', sans-serif;color:#1c1c1c">drwxrwxr-x</div>
<svg class="abs" style="left:9px;top:246px" width="20" height="18" viewBox="0 0 20 18"><path d="M0 1.500C0 .700 .600 0 1.500 0h5l1.500 2H20v16H0z" fill="#4676c0"/><rect x="0" y="3" width="20" height="15" rx=".600" fill="#5590e2"/><rect x="2" y="4.200" width="16" height="1.300" fill="#eef3fb"/></svg>
<div class="t" style="left:33px;top:247px;font-size:13px;font-family:'DejaVu Sans', 'Liberation Sans', sans-serif;color:#1c1c1c">[dwhelper]</div>
<div class="t" style="left:261px;top:247px;font-size:12.5px;width:43px;font-family:'DejaVu Sans', 'Liberation Sans', sans-serif;color:#1c1c1c">&lt;DIR&gt;</div>
<div class="t" style="left:316px;top:247px;font-size:12.5px;font-family:'DejaVu Sans', 'Liberation Sans', sans-serif;color:#1c1c1c">27.10.2019 21:47:39</div>
<div class="t" style="left:452px;top:247px;font-size:12.5px;letter-spacing:.1px;font-family:'DejaVu Sans', 'Liberation Sans', sans-serif;color:#1c1c1c">drwxrwxr-x</div>
<svg class="abs" style="left:9px;top:272px" width="20" height="18" viewBox="0 0 20 18"><path d="M0 1.500C0 .700 .600 0 1.500 0h5l1.500 2H20v16H0z" fill="#4676c0"/><rect x="0" y="3" width="20" height="15" rx=".600" fill="#5590e2"/><rect x="2" y="4.200" width="16" height="1.300" fill="#eef3fb"/><rect x="7" y="9" width="7" height="5.500" fill="#1f2f55"/><path d="M8 13.500l2-2 1.500 1.200 1-.7 .8 1.500z" fill="#5590e2"/></svg>
<div class="t" style="left:33px;top:273px;font-size:13px;font-family:'DejaVu Sans', 'Liberation Sans', sans-serif;color:#1c1c1c">[Obrázky]</div>
<div class="t" style="left:261px;top:273px;font-size:12.5px;width:43px;font-family:'DejaVu Sans', 'Liberation Sans', sans-serif;color:#1c1c1c">&lt;DIR&gt;</div>
<div class="t" style="left:316px;top:273px;font-size:12.5px;font-family:'DejaVu Sans', 'Liberation Sans', sans-serif;color:#1c1c1c">27.10.2019 01:03:40</div>
<div class="t" style="left:452px;top:273px;font-size:12.5px;letter-spacing:.1px;font-family:'DejaVu Sans', 'Liberation Sans', sans-serif;color:#1c1c1c">drwxr-xr-x</div>
<svg class="abs" style="left:9px;top:298px" width="20" height="18" viewBox="0 0 20 18"><rect x="0" y="0" width="20" height="18" fill="#5590e2"/><rect x="0" y="0" width="20" height="1.600" fill="#1f2f55"/><rect x="0" y="16.400" width="20" height="1.600" fill="#2a3c68"/><rect x="6" y="16.200" width="8" height="1.800" fill="#1a2440"/></svg>
<div class="t" style="left:33px;top:299px;font-size:13px;font-family:'DejaVu Sans', 'Liberation Sans', sans-serif;color:#1c1c1c">[Plocha]</div>
<div class="t" style="left:261px;top:299px;font-size:12.5px;width:43px;font-family:'DejaVu Sans', 'Liberation Sans', sans-serif;color:#1c1c1c">&lt;DIR&gt;</div>
<div class="t" style="left:316px;top:299px;font-size:12.5px;font-family:'DejaVu Sans', 'Liberation Sans', sans-serif;color:#1c1c1c">26.10.2019 23:05:47</div>
<div class="t" style="left:452px;top:299px;font-size:12.5px;letter-spacing:.1px;font-family:'DejaVu Sans', 'Liberation Sans', sans-serif;color:#1c1c1c">drwxr-xr-x</div>
<svg class="abs" style="left:9px;top:324px" width="20" height="18" viewBox="0 0 20 18"><path d="M0 1.500C0 .700 .600 0 1.500 0h5l1.500 2H20v16H0z" fill="#4676c0"/><rect x="0" y="3" width="20" height="15" rx=".600" fill="#5590e2"/><rect x="2" y="4.200" width="16" height="1.300" fill="#eef3fb"/></svg>
<div class="t" style="left:33px;top:325px;font-size:13px;font-family:'DejaVu Sans', 'Liberation Sans', sans-serif;color:#1c1c1c">[Shared]</div>
<div class="t" style="left:261px;top:325px;font-size:12.5px;width:43px;font-family:'DejaVu Sans', 'Liberation Sans', sans-serif;color:#1c1c1c">&lt;DIR&gt;</div>
<div class="t" style="left:316px;top:325px;font-size:12.5px;font-family:'DejaVu Sans', 'Liberation Sans', sans-serif;color:#1c1c1c">27.10.2019 01:04:12</div>
<div class="t" style="left:452px;top:325px;font-size:12.5px;letter-spacing:.1px;font-family:'DejaVu Sans', 'Liberation Sans', sans-serif;color:#1c1c1c">drwxrwxr-x</div>
<svg class="abs" style="left:9px;top:350px" width="20" height="18" viewBox="0 0 20 18"><path d="M0 1.500C0 .700 .600 0 1.500 0h5l1.500 2H20v16H0z" fill="#4676c0"/><rect x="0" y="3" width="20" height="15" rx=".600" fill="#5590e2"/><rect x="2" y="4.200" width="16" height="1.300" fill="#eef3fb"/><path d="M9.300 7.500h1.400v3.500h1.800L10 13.800 7.500 11h1.800z" fill="#1f2f55"/><rect x="7" y="14.500" width="6" height="1.200" fill="#1f2f55"/></svg>
<div class="t" style="left:33px;top:351px;font-size:13px;font-family:'DejaVu Sans', 'Liberation Sans', sans-serif;color:#1c1c1c">[Stiahnuté]</div>
<div class="t" style="left:261px;top:351px;font-size:12.5px;width:43px;font-family:'DejaVu Sans', 'Liberation Sans', sans-serif;color:#1c1c1c">&lt;DIR&gt;</div>
<div class="t" style="left:316px;top:351px;font-size:12.5px;font-family:'DejaVu Sans', 'Liberation Sans', sans-serif;color:#1c1c1c">28.10.2019 22:32:45</div>
<div class="t" style="left:452px;top:351px;font-size:12.5px;letter-spacing:.1px;font-family:'DejaVu Sans', 'Liberation Sans', sans-serif;color:#1c1c1c">drwxr-xr-x</div>
<svg class="abs" style="left:9px;top:376px" width="20" height="18" viewBox="0 0 20 18"><path d="M0 1.500C0 .700 .600 0 1.500 0h5l1.500 2H20v16H0z" fill="#4676c0"/><rect x="0" y="3" width="20" height="15" rx=".600" fill="#5590e2"/><rect x="2" y="4.200" width="16" height="1.300" fill="#eef3fb"/></svg>
<div class="t" style="left:33px;top:377px;font-size:13px;font-family:'DejaVu Sans', 'Liberation Sans', sans-serif;color:#1c1c1c">[Virtualbox]</div>
<div class="t" style="left:261px;top:377px;font-size:12.5px;width:43px;font-family:'DejaVu Sans', 'Liberation Sans', sans-serif;color:#1c1c1c">&lt;DIR&gt;</div>
<div class="t" style="left:316px;top:377px;font-size:12.5px;font-family:'DejaVu Sans', 'Liberation Sans', sans-serif;color:#1c1c1c">19.01.2018 23:08:14</div>
<div class="t" style="left:452px;top:377px;font-size:12.5px;letter-spacing:.1px;font-family:'DejaVu Sans', 'Liberation Sans', sans-serif;color:#1c1c1c">drwxrwx---</div>
<svg class="abs" style="left:9px;top:402px" width="20" height="18" viewBox="0 0 20 18"><path d="M0 1.500C0 .700 .600 0 1.500 0h5l1.500 2H20v16H0z" fill="#4676c0"/><rect x="0" y="3" width="20" height="15" rx=".600" fill="#5590e2"/><rect x="2" y="4.200" width="16" height="1.300" fill="#eef3fb"/></svg>
<div class="t" style="left:33px;top:403px;font-size:13px;font-family:'DejaVu Sans', 'Liberation Sans', sans-serif;color:#1c1c1c">[Winesoft]</div>
<div class="t" style="left:261px;top:403px;font-size:12.5px;width:43px;font-family:'DejaVu Sans', 'Liberation Sans', sans-serif;color:#1c1c1c">&lt;DIR&gt;</div>
<div class="t" style="left:316px;top:403px;font-size:12.5px;font-family:'DejaVu Sans', 'Liberation Sans', sans-serif;color:#1c1c1c">27.10.2019 09:45:47</div>
<div class="t" style="left:452px;top:403px;font-size:12.5px;letter-spacing:.1px;font-family:'DejaVu Sans', 'Liberation Sans', sans-serif;color:#1c1c1c">drwxrwx---</div>
<div class="abs" style="left:553px;top:117px;width:547px;height:541px;border:1px solid #c2c2c2;border-radius:2px;box-shadow:inset 1px 1px 0 #e6e6e6"></div>
<div class="abs" style="left:555px;top:119px;width:542px;height:19px;background:#cacaca"></div>
<div class="t" style="left:558px;top:121px;color:#3a3a3a;font-size:14px">/datadisk</div>
<div class="abs" style="left:555px;top:138px;width:542px;height:502px;background:#fcfcfc;border:1px solid #111"></div>
<div class="abs" style="left:555px;top:138px;width:184px;height:26px;background:#c8c8c8;border:1px solid #111"></div>
<div class="t" style="left:559px;top:144px;color:#2a2a2a">Meno</div>
<div class="abs" style="left:738px;top:138px;width:62px;height:26px;background:#c8c8c8;border:1px solid #111"></div>
<div class="t" style="left:742px;top:144px;color:#2a2a2a">Prípona</div>
<div class="abs" style="left:799px;top:138px;width:59px;height:26px;background:#c8c8c8;border:1px solid #111"></div>
<div class="t" style="left:803px;top:144px;color:#2a2a2a">Veľkost</div>
<div class="abs" style="left:857px;top:138px;width:144px;height:26px;background:#c8c8c8;border:1px solid #111"></div>
<svg class="abs" style="left:863px;top:143px" width="14" height="14" viewBox="0 0 14 14"><path d="M8.500 1.500v9M5 7.500l3.500 3.800L12 7.500" stroke="#333" stroke-width="2" fill="none"/><rect x="1" y="2" width="2" height="2" fill="#333"/><rect x="1" y="6" width="2" height="2" fill="#333"/><rect x="1" y="10" width="2" height="2" fill="#333"/></svg>
<div class="t" style="left:884px;top:144px;color:#2a2a2a">Dátum</div>
<div class="abs" style="left:1000px;top:138px;width:93px;height:26px;background:#c8c8c8;border:1px solid #111"></div>
<div class="t" style="left:1004px;top:144px;color:#2a2a2a">Atr.</div>
<svg class="abs" style="left:564px;top:170px" width="12" height="14" viewBox="0 0 12 14"><path d="M6 12.500V1.500M1.200 6.300L6 1.500l4.800 4.800" stroke="#333" stroke-width="1.900" fill="none"/></svg>
<div class="t" style="left:584px;top:169px;font-size:13px;font-family:'DejaVu Sans', 'Liberation Sans', sans-serif;color:#1c1c1c">[..]</div>
<div class="t" style="left:812px;top:169px;font-size:12.5px;width:43px;font-family:'DejaVu Sans', 'Liberation Sans', sans-serif;color:#1c1c1c">&lt;DIR&gt;</div>
<div class="t" style="left:867px;top:169px;font-size:12.5px;font-family:'DejaVu Sans', 'Liberation Sans', sans-serif;color:#1c1c1c">27.10.2019 00:16:15</div>
<div class="t" style="left:1003px;top:169px;font-size:12.5px;letter-spacing:.1px;font-family:'DejaVu Sans', 'Liberation Sans', sans-serif;color:#1c1c1c">drwxr-xr-x</div>
<svg class="abs" style="left:560px;top:194px" width="20" height="18" viewBox="0 0 20 18"><path d="M0 1.500C0 .700 .600 0 1.500 0h5l1.500 2H20v16H0z" fill="#4676c0"/><rect x="0" y="3" width="20" height="15" rx=".600" fill="#5590e2"/><rect x="2" y="4.200" width="16" height="1.300" fill="#eef3fb"/></svg>
<div class="t" style="left:584px;top:195px;font-size:13px;font-family:'DejaVu Sans', 'Liberation Sans', sans-serif;color:#1c1c1c">[Archívne]</div>
<div class="t" style="left:812px;top:195px;font-size:12.5px;width:43px;font-family:'DejaVu Sans', 'Liberation Sans', sans-serif;color:#1c1c1c">&lt;DIR&gt;</div>
<div class="t" style="left:867px;top:195px;font-size:12.5px;font-family:'DejaVu Sans', 'Liberation Sans', sans-serif;color:#1c1c1c">10.03.2019 17:34:39</div>
<div class="t" style="left:1003px;top:195px;font-size:12.5px;letter-spacing:.1px;font-family:'DejaVu Sans', 'Liberation Sans', sans-serif;color:#1c1c1c">drwxrwx---</div>
<svg class="abs" style="left:560px;top:220px" width="20" height="18" viewBox="0 0 20 18"><path d="M0 1.500C0 .700 .600 0 1.500 0h5l1.500 2H20v16H0z" fill="#4676c0"/><rect x="0" y="3" width="20" height="15" rx=".600" fill="#5590e2"/><rect x="2" y="4.200" width="16" height="1.300" fill="#eef3fb"/></svg>
<div class="t" style="left:584px;top:221px;font-size:13px;font-family:'DejaVu Sans', 'Liberation Sans', sans-serif;color:#1c1c1c">[Digifoto]</div>
<div class="t" style="left:812px;top:221px;font-size:12.5px;width:43px;font-family:'DejaVu Sans', 'Liberation Sans', sans-serif;color:#1c1c1c">&lt;DIR&gt;</div>
<div class="t" style="left:867px;top:221px;font-size:12.5px;font-family:'DejaVu Sans', 'Liberation Sans', sans-serif;color:#1c1c1c">27.06.2019 20:56:04</div>
<div class="t" style="left:1003px;top:221px;font-size:12.5px;letter-spacing:.1px;font-family:'DejaVu Sans', 'Liberation Sans', sans-serif;color:#1c1c1c">drwxrwx---</div>
<svg class="abs" style="left:560px;top:246px" width="20" height="18" viewBox="0 0 20 18"><path d="M0 1.500C0 .700 .600 0 1.500 0h5l1.500 2H20v16H0z" fill="#4676c0"/><rect x="0" y="3" width="20" height="15" rx=".600" fill="#5590e2"/><rect x="2" y="4.200" width="16" height="1.300" fill="#eef3fb"/></svg>
<div class="t" style="left:584px;top:247px;font-size:13px;font-family:'DejaVu Sans', 'Liberation Sans', sans-serif;color:#1c1c1c">[Download]</div>
<div class="t" style="left:812px;top:247px;font-size:12.5px;width:43px;font-family:'DejaVu Sans', 'Liberation Sans', sans-serif;color:#1c1c1c">&lt;DIR&gt;</div>
<div class="t" style="left:867px;top:247px;font-size:12.5px;font-family:'DejaVu Sans', 'Liberation Sans', sans-serif;color:#1c1c1c">27.08.2018 19:54:14</div>
<div class="t" style="left:1003px;top:247px;font-size:12.5px;letter-spacing:.1px;font-family:'DejaVu Sans', 'Liberation Sans', sans-serif;color:#1c1c1c">drwxrwx---</div>
<svg class="abs" style="left:560px;top:272px" width="20" height="18" viewBox="0 0 20 18"><path d="M0 1.500C0 .700 .600 0 1.500 0h5l1.500 2H20v16H0z" fill="#4676c0"/><rect x="0" y="3" width="20" height="15" rx=".600" fill="#5590e2"/><rect x="2" y="4.200" width="16" height="1.300" fill="#eef3fb"/></svg>
<div class="t" style="left:584px;top:273px;font-size:13px;font-family:'DejaVu Sans', 'Liberation Sans', sans-serif;color:#1c1c1c">[Hudba]</div>
<div class="t" style="left:812px;top:273px;font-size:12.5px;width:43px;font-family:'DejaVu Sans', 'Liberation Sans', sans-serif;color:#1c1c1c">&lt;DIR&gt;</div>
<div class="t" style="left:867px;top:273px;font-size:12.5px;font-family:'DejaVu Sans', 'Liberation Sans', sans-serif;color:#1c1c1c">03.06.2019 22:03:45</div>
<div class="t" style="left:1003px;top:273px;font-size:12.5px;letter-spacing:.1px;font-family:'DejaVu Sans', 'Liberation Sans', sans-serif;color:#1c1c1c">drwxrwx---</div>
<svg class="abs" style="left:560px;top:298px" width="20" height="18" viewBox="0 0 20 18"><path d="M0 1.500C0 .700 .600 0 1.500 0h5l1.500 2H20v16H0z" fill="#4676c0"/><rect x="0" y="3" width="20" height="15" rx=".600" fill="#5590e2"/><rect x="2" y="4.200" width="16" height="1.300" fill="#eef3fb"/></svg>
<div class="t" style="left:584px;top:299px;font-size:13px;font-family:'DejaVu Sans', 'Liberation Sans', sans-serif;color:#1c1c1c">[Humor]</div>
<div class="t" style="left:812px;top:299px;font-size:12.5px;width:43px;font-family:'DejaVu Sans', 'Liberation Sans', sans-serif;color:#1c1c1c">&lt;DIR&gt;</div>
<div class="t" style="left:867px;top:299px;font-size:12.5px;font-family:'DejaVu Sans', 'Liberation Sans', sans-serif;color:#1c1c1c">03.06.2019 22:00:28</div>
<div class="t" style="left:1003px;top:299px;font-size:12.5px;letter-spacing:.1px;font-family:'DejaVu Sans', 'Liberation Sans', sans-serif;color:#1c1c1c">drwxrwx---</div>
<svg class="abs" style="left:560px;top:324px" width="20" height="18" viewBox="0 0 20 18"><path d="M0 1.500C0 .700 .600 0 1.500 0h5l1.500 2H20v16H0z" fill="#4676c0"/><rect x="0" y="3" width="20" height="15" rx=".600" fill="#5590e2"/><rect x="2" y="4.200" width="16" height="1.300" fill="#eef3fb"/></svg>
<div class="t" style="left:584px;top:325px;font-size:13px;font-family:'DejaVu Sans', 'Liberation Sans', sans-serif;color:#1c1c1c">[Linuxsoft]</div>
<div class="t" style="left:812px;top:325px;font-size:12.5px;width:43px;font-family:'DejaVu Sans', 'Liberation Sans', sans-serif;color:#1c1c1c">&lt;DIR&gt;</div>
<div class="t" style="left:867px;top:325px;font-size:12.5px;font-family:'DejaVu Sans', 'Liberation Sans', sans-serif;color:#1c1c1c">27.10.2019 00:13:52</div>
<div class="t" style="left:1003px;top:325px;font-size:12.5px;letter-spacing:.1px;font-family:'DejaVu Sans', 'Liberation Sans', sans-serif;color:#1c1c1c">drwxrwx---</div>
<svg class="abs" style="left:560px;top:350px" width="20" height="18" viewBox="0 0 20 18"><path d="M0 1.500C0 .700 .600 0 1.500 0h5l1.500 2H20v16H0z" fill="#4676c0"/><rect x="0" y="3" width="20" height="15" rx=".600" fill="#5590e2"/><rect x="2" y="4.200" width="16" height="1.300" fill="#eef3fb"/></svg>
<div class="t" style="left:584px;top:351px;font-size:13px;font-family:'DejaVu Sans', 'Liberation Sans', sans-serif;color:#1c1c1c">[Movies]</div>
<div class="t" style="left:812px;top:351px;font-size:12.5px;width:43px;font-family:'DejaVu Sans', 'Liberation Sans', sans-serif;color:#1c1c1c">&lt;DIR&gt;</div>
<div class="t" style="left:867px;top:351px;font-size:12.5px;font-family:'DejaVu Sans', 'Liberation Sans', sans-serif;color:#1c1c1c">22.10.2019 20:13:12</div>
<div class="t" style="left:1003px;top:351px;font-size:12.5px;letter-spacing:.1px;font-family:'DejaVu Sans', 'Liberation Sans', sans-serif;color:#1c1c1c">drwxrwx---</div>
<svg class="abs" style="left:560px;top:376px" width="20" height="18" viewBox="0 0 20 18"><path d="M0 1.500C0 .700 .600 0 1.500 0h5l1.500 2H20v16H0z" fill="#4676c0"/><rect x="0" y="3" width="20" height="15" rx=".600" fill="#5590e2"/><rect x="2" y="4.200" width="16" height="1.300" fill="#eef3fb"/></svg>
<div class="t" style="left:584px;top:377px;font-size:13px;font-family:'DejaVu Sans', 'Liberation Sans', sans-serif;color:#1c1c1c">[Virtualka]</div>
<div class="t" style="left:812px;top:377px;font-size:12.5px;width:43px;font-family:'DejaVu Sans', 'Liberation Sans', sans-serif;color:#1c1c1c">&lt;DIR&gt;</div>
<div class="t" style="left:867px;top:377px;font-size:12.5px;font-family:'DejaVu Sans', 'Liberation Sans', sans-serif;color:#1c1c1c">21.10.2019 23:33:13</div>
<div class="t" style="left:1003px;top:377px;font-size:12.5px;letter-spacing:.1px;font-family:'DejaVu Sans', 'Liberation Sans', sans-serif;color:#1c1c1c">drwxrwx---</div>
<svg class="abs" style="left:560px;top:402px" width="20" height="18" viewBox="0 0 20 18"><path d="M0 1.500C0 .700 .600 0 1.500 0h5l1.500 2H20v16H0z" fill="#4676c0"/><rect x="0" y="3" width="20" height="15" rx=".600" fill="#5590e2"/><rect x="2" y="4.200" width="16" height="1.300" fill="#eef3fb"/></svg>
<div class="t" style="left:584px;top:403px;font-size:13px;font-family:'DejaVu Sans', 'Liberation Sans', sans-serif;color:#1c1c1c">[Výberovky]</div>
<div class="t" style="left:812px;top:403px;font-size:12.5px;width:43px;font-family:'DejaVu Sans', 'Liberation Sans', sans-serif;color:#1c1c1c">&lt;DIR&gt;</div>
<div class="t" style="left:867px;top:403px;font-size:12.5px;font-family:'DejaVu Sans', 'Liberation Sans', sans-serif;color:#1c1c1c">19.01.2018 23:03:11</div>
<div class="t" style="left:1003px;top:403px;font-size:12.5px;letter-spacing:.1px;font-family:'DejaVu Sans', 'Liberation Sans', sans-serif;color:#1c1c1c">drwxrwx---</div>
<svg class="abs" style="left:560px;top:428px" width="20" height="18" viewBox="0 0 20 18"><path d="M0 1.500C0 .700 .600 0 1.500 0h5l1.500 2H20v16H0z" fill="#4676c0"/><rect x="0" y="3" width="20" height="15" rx=".600" fill="#5590e2"/><rect x="2" y="4.200" width="16" height="1.300" fill="#eef3fb"/></svg>
<div class="t" style="left:584px;top:429px;font-size:13px;font-family:'DejaVu Sans', 'Liberation Sans', sans-serif;color:#1c1c1c">[Windows]</div>
<div class="t" style="left:812px;top:429px;font-size:12.5px;width:43px;font-family:'DejaVu Sans', 'Liberation Sans', sans-serif;color:#1c1c1c">&lt;DIR&gt;</div>
<div class="t" style="left:867px;top:429px;font-size:12.5px;font-family:'DejaVu Sans', 'Liberation Sans', sans-serif;color:#1c1c1c">19.10.2019 15:44:52</div>
<div class="t" style="left:1003px;top:429px;font-size:12.5px;letter-spacing:.1px;font-family:'DejaVu Sans', 'Liberation Sans', sans-serif;color:#1c1c1c">drwxrwx---</div>
<div class="t" style="left:555px;top:643px;color:#2a2a2a">Vybrané: 0 z 0, súbory: 0 z 0, adresáre: 0 of 10</div>
<div class="abs" style="left:2px;top:663px;width:1068px;height:24px;background:#fcfcfc;border:1px solid #b8b8b8;border-right:none"></div>
<div class="abs" style="left:1070px;top:663px;width:27px;height:24px;background:linear-gradient(#e2e2e2,#cfcfcf);border:1px solid #b0b0b0;border-radius:0 3px 3px 0"></div>
<svg class="abs" style="left:1079px;top:673px" width="9" height="6" viewBox="0 0 9 6"><path d="M0 0h9L4.500 5.500z" fill="#4a4a4a"/></svg>
<div class="t" style="left:378px;top:696px;width:140px;text-align:center;color:#2a2a2a">Move F6</div>
<div class="t" style="left:518px;top:696px;width:140px;text-align:center;color:#2a2a2a">Adresár F7</div>
<div class="t" style="left:666px;top:696px;width:140px;text-align:center;color:#2a2a2a">Vymazať F8</div>
<div class="t" style="left:817px;top:696px;width:140px;text-align:center;color:#2a2a2a">Terminal F9</div>
<div class="t" style="left:961px;top:696px;width:140px;text-align:center;color:#2a2a2a">Exit Alt+X</div>
<div class="t" style="left:231px;top:696px;width:140px;text-align:center;color:#2a2a2a">Copy F5</div>
<div class="t" style="left:84px;top:696px;width:140px;text-align:center;color:#2a2a2a">Edit F4</div>
<div class="t" style="left:-24px;top:696px;width:140px;text-align:center;color:#2a2a2a">View F3</div>
</div>
<div id="term" class="abs" style="left:441px;top:587px;width:578px;height:417px;background:#d6d6d6;box-shadow:0 2px 8px rgba(0,0,0,.55),0 0 0 1px rgba(0,0,0,.4)">
<div class="abs" style="left:0;top:0;width:578px;height:25px;background:#444"></div>
<div class="t" style="left:0;top:6px;width:506px;text-align:center;font-weight:bold;font-size:12.5px;color:#8c8c8c">Terminál - dumaru@dell: ~</div>
<svg class="abs" style="left:510px;top:8px" width="10" height="10" viewBox="0 0 10 10"><rect x="1" y="5" width="8" height="2" fill="#a8a8a8"/></svg>
<svg class="abs" style="left:534px;top:8px" width="10" height="10" viewBox="0 0 10 10"><rect x="2" y="2" width="6.500" height="6.500" fill="none" stroke="#a8a8a8" stroke-width="1.800"/></svg>
<svg class="abs" style="left:558px;top:8px" width="10" height="10" viewBox="0 0 10 10"><path d="M1.500 1.500l7 7M8.500 1.500l-7 7" stroke="#b4b4b4" stroke-width="2"/></svg>
<div class="t" style="left:10px;top:32px;color:#8a8a8a">Súbor</div>
<div class="t" style="left:61px;top:32px;color:#8a8a8a">Upraviť</div>
<div class="t" style="left:120px;top:32px;color:#8a8a8a">Zobraziť</div>
<div class="t" style="left:184px;top:32px;color:#8a8a8a">Terminál</div>
<div class="t" style="left:251px;top:32px;color:#8a8a8a">Karty</div>
<div class="t" style="left:298px;top:32px;color:#8a8a8a">Pomocník</div>
<div class="abs" style="left:1px;top:51px;width:561px;height:362px;background:#141a28"></div>
<div class="abs" style="left:562px;top:51px;width:15px;height:362px;background:linear-gradient(90deg,#dcdcdc,#f0f0f0)"></div>
<div class="abs" style="left:565px;top:54px;width:10px;height:357px;background:#ececec;border:1px solid #9a9a9a;border-radius:5px"></div>
<pre id="tt" class="abs" style="left:2px;top:53px">
<b class="g">dumaru@dell</b>:<b class="b">~</b>$ screenfetch
                          <b class="r">./+o+-</b>       <b class="r">dumaru</b><b class="w">@</b><b class="r">dell</b>
                  <b class="w">yyyyy- </b><b class="r">-yyyyyy+</b>      <b class="r">OS:</b> Ubuntu 18.04 bionic
               <b class="w">://+//////</b><b class="r">-yyyyyyo</b>      <b class="r">Kernel:</b> x86_64 Linux 5.0.0-32-generic
           <b class="y">.++ </b><b class="w">.:/++++++/-</b><b class="r">.+sss/`</b>      <b class="r">Uptime:</b> 3h 39m
         <b class="y">.:++o:  </b><b class="w">/++++++++/:--:/-</b>      <b class="r">Packages:</b> 2136
        <b class="y">o:+o+:++.</b><b class="w">`..```.-/oo+++++/</b>     <b class="r">Shell:</b> bash
       <b class="y">.:+o:+o/.</b><b class="w">          `+sssoo+/</b>    <b class="r">Resolution:</b> 1920x1080
  <b class="w">.++/+:</b><b class="y">+oo+o:`</b><b class="w">             /sssooo.</b>   <b class="r">DE:</b> XFCE
 <b class="w">/+++//+:</b><b class="y">`oo+o</b><b class="w">               /::--:.</b>   <b class="r">WM:</b> Xfwm4
 <b class="w">\+/+o+++</b><b class="y">`o++o</b><b class="r">               ++////.</b>   <b class="r">WM Theme:</b> Numix
  <b class="w">.++.o+++</b><b class="y">oo+:`</b><b class="r">             /dddhhh.</b>   <b class="r">GTK Theme:</b> Greybird [GTK2]
       <b class="y">.+.o+oo:.</b><b class="r">          `oddhhhh+</b>    <b class="r">Icon Theme:</b> Papirus
        <b class="y">\+.++o+o``-````.:</b><b class="r">ohdhhhhh+</b>     <b class="r">Font:</b> Noto Sans 9
         <b class="y">`:o+++ </b><b class="r">`ohhhhhhhhyo++os:</b>      <b class="r">CPU:</b> Intel Core2 Duo E8400 @ 2x 3GHz [39.
5°C]
           <b class="y">.o:`</b><b class="r">.syhhhhhhh/</b><b class="y">.oo++o`</b>      <b class="r">GPU:</b> AMD CAICOS (DRM 2.50.0 / 5.0.0-32-ge
neric, LLVM 8.0.0)
               <b class="r">/osyyyyyyo</b><b class="y">++ooo+++/</b>     <b class="r">RAM:</b> 881MiB / 3810MiB
                   <b class="r">````` </b><b class="y">+oo+++o\:</b>
                          <b class="y">`oo++.</b>
<b class="g">dumaru@dell</b>:<b class="b">~</b>$ 
</pre>
<div class="abs" style="left:107px;top:368px;width:8px;height:15px;border:1px solid #e8e8e8"></div>
<div class="abs" style="left:0;top:413px;width:578px;height:4px;background:#555"></div>
</div>
<div id="menu" class="abs" style="left:0;top:29px;width:400px;height:500px;background:rgba(206,206,206,.9);border-right:1px solid rgba(120,120,120,.8);border-bottom:1px solid rgba(110,110,110,.8);border-left:1px solid rgba(150,150,150,.8)">
<div class="abs" style="left:2px;top:3px;width:394px;height:30px;background:#fcfcfc;border:1px solid #4a8fd8;border-radius:3px;box-shadow:inset 0 1px 2px rgba(0,0,0,.12)"></div>
<svg class="abs" style="left:375px;top:10px" width="15" height="15" viewBox="0 0 15 15"><circle cx="5.800" cy="5.800" r="4.300" fill="none" stroke="#333" stroke-width="1.800"/><path d="M9 9l4.800 4.800" stroke="#333" stroke-width="2.200" stroke-linecap="round"/></svg>
<div class="abs" style="left:2px;top:39px;width:288px;height:419px;background:#fbfbfb;border:1px solid #a8a8a8;overflow:hidden">
<div class="abs" style="left:271px;top:0;width:16px;height:419px;background:linear-gradient(90deg,#e4e4e4,#f4f4f4)"></div>
<div class="abs" style="left:275px;top:3px;width:9px;height:42px;background:#dadada;border:1px solid #8f8f8f;border-radius:5px"></div>
<svg class="abs" style="left:3px;top:8px" width="22" height="22" viewBox="0 0 22 22"><ellipse cx="11" cy="11" rx="7.500" ry="10" fill="#3b4aa8"/><path d="M7.500 7.500l7 7-3.500 3.200V4.300l3.500 3.200-7 7" stroke="#fff" stroke-width="1.300" fill="none"/></svg>
<div class="t" style="left:28px;top:5px;font-weight:bold;font-size:12.5px;color:#222">Adaptéry Bluetooth</div>
<div class="t" style="left:28px;top:22px;font-size:12.5px;color:#2e2e2e">Set Bluetooth Adapter Properties</div>
<svg class="abs" style="left:3px;top:48px" width="22" height="22" viewBox="0 0 22 22"><circle cx="11" cy="11" r="10.500" fill="#f7c331"/><circle cx="12" cy="12.500" r="8.500" fill="#f08a2b" opacity=".9"/><path d="M5.500 11a5.500 5.500 0 0 1 9.500-3.800M16.500 11a5.500 5.500 0 0 1-9.500 3.800" stroke="#3a3a3a" stroke-width="2" fill="none"/><path d="M13 7.800l4 .6-.8-4zM9 14.200l-4-.6.800 4z" fill="#3a3a3a"/><circle cx="11" cy="11" r="2.400" fill="#fff"/></svg>
<div class="t" style="left:28px;top:45px;font-weight:bold;font-size:12.5px;color:#222">Aktualizácia softvéru</div>
<div class="t" style="left:28px;top:62px;font-size:12.5px;color:#2e2e2e">Zobraziť a nainštalovať dostupné aktualiz...</div>
<svg class="abs" style="left:3px;top:88px" width="22" height="22" viewBox="0 0 22 22"><circle cx="11" cy="11" r="10.500" fill="#4a4a4a"/><text x="11" y="16.500" text-anchor="middle" font-family="DejaVu Sans, sans-serif" font-size="15" font-weight="bold" fill="#fff">a</text></svg>
<div class="t" style="left:28px;top:85px;font-weight:bold;font-size:12.5px;color:#222">Audacious</div>
<div class="t" style="left:28px;top:102px;font-size:12.5px;color:#2e2e2e">Počúvajte hudbu</div>
<svg class="abs" style="left:3px;top:128px" width="22" height="22" viewBox="0 0 22 22"><circle cx="11" cy="11" r="10.500" fill="#4a4a4a"/><text x="11" y="16.500" text-anchor="middle" font-family="DejaVu Sans, sans-serif" font-size="15" font-weight="bold" fill="#fff">a</text></svg>
<div class="t" style="left:28px;top:125px;font-weight:bold;font-size:12.5px;color:#222">Audacious Qt Interface</div>
<div class="t" style="left:28px;top:142px;font-size:12.5px;color:#2e2e2e">Listen to music</div>
<svg class="abs" style="left:3px;top:168px" width="22" height="22" viewBox="0 0 22 22"><path d="M11 1l9.500 5v10L11 21 1.500 16V6z" fill="#85c93a"/><path d="M11 11l9.500-5v10L11 21z" fill="#6aad28"/><path d="M11 11L1.500 6v10L11 21z" fill="#a5df5c"/><path d="M11 1l9.500 5L11 11 1.500 6z" fill="#c0ee80"/></svg>
<div class="t" style="left:28px;top:165px;font-weight:bold;font-size:12.5px;color:#222">balenaEtcher</div>
<div class="t" style="left:28px;top:182px;font-size:12.5px;color:#2e2e2e">Flash OS images to SD cards and USB dri...</div>
<svg class="abs" style="left:3px;top:208px" width="22" height="22" viewBox="0 0 22 22"><path d="M17 1l1.800 .6-3.800 11-1.800-.6z" fill="#d63a3a"/><path d="M9.500 11.500l6.500 2.300c0 3-2 6-4 7.700-3-.4-7.500-2-10-4.500 3.500-.8 6-2.700 7.500-5.500z" fill="#f7c846"/><path d="M9.500 11.500l6.500 2.300-.5 1.800-6.800-2.400z" fill="#e0a82a"/></svg>
<div class="t" style="left:28px;top:205px;font-weight:bold;font-size:12.5px;color:#222">BleachBit (as root)</div>
<div class="t" style="left:28px;top:222px;font-size:12.5px;color:#2e2e2e">Voľné miesto a zachovanie súkromia</div>
<svg class="abs" style="left:3px;top:248px" width="22" height="22" viewBox="0 0 22 22"><path d="M17 1l1.800 .6-3.800 11-1.800-.6z" fill="#d63a3a"/><path d="M9.500 11.500l6.500 2.300c0 3-2 6-4 7.700-3-.4-7.500-2-10-4.500 3.500-.8 6-2.700 7.500-5.500z" fill="#f7c846"/><path d="M9.500 11.500l6.500 2.300-.5 1.800-6.800-2.400z" fill="#e0a82a"/></svg>
<div class="t" style="left:28px;top:245px;font-weight:bold;font-size:12.5px;color:#222">BleachBit</div>
<div class="t" style="left:28px;top:262px;font-size:12.5px;color:#2e2e2e">Voľné miesto a zachovanie súkromia</div>
<svg class="abs" style="left:3px;top:288px" width="22" height="22" viewBox="0 0 22 22"><circle cx="10" cy="10" r="9.500" fill="#dcdcdc"/><circle cx="10" cy="10" r="3.200" fill="#9a9a9a"/><circle cx="10" cy="10" r="1.700" fill="#fff"/><circle cx="15.500" cy="15.500" r="6" fill="#f0592b"/><path d="M15.500 11.500c2 2 3 3.300 3 5 0 1.700-1.300 2.800-3 2.800s-3-1.100-3-2.800c0-1 .5-1.800 1.200-2.500 .3 .8 .8 1.200 1.300 1.200 .2-1.300 0-2.500 .5-3.700z" fill="#fff"/></svg>
<div class="t" style="left:28px;top:285px;font-weight:bold;font-size:12.5px;color:#222">Brasero</div>
<div class="t" style="left:28px;top:302px;font-size:12.5px;color:#2e2e2e">Vytvára a kopíruje disky CD a DVD</div>
<svg class="abs" style="left:3px;top:328px" width="22" height="22" viewBox="0 0 22 22"><path d="M11 1C5 1 .5 5.300 .5 10.700c0 3 1.400 5.600 3.700 7.400V22l3.600-2c1 .3 2.100 .4 3.200 .4 6 0 10.500-4.300 10.500-9.700S17 1 11 1z" fill="#1e9bf5"/><path d="M4.500 13.500l5.300-5.600 2.600 2.700 4.900-2.700-5.300 5.600-2.600-2.700z" fill="#fff"/></svg>
<div class="t" style="left:28px;top:325px;font-weight:bold;font-size:12.5px;color:#222">Caprine</div>
<div class="t" style="left:28px;top:342px;font-size:12.5px;color:#2e2e2e">Caprine is an unofficial and privacy focus...</div>
<svg class="abs" style="left:3px;top:368px" width="22" height="22" viewBox="0 0 22 22"><circle cx="11" cy="12" r="9.500" fill="#d8323a"/><path d="M3 7L1.500 1.500 7 4zM19 7l1.500-5.500L15 4z" fill="#d8323a"/><path d="M4 10l5.500 2.500L5 14.500zM18 10l-5.500 2.500 4.500 2z" fill="#fff"/><path d="M6.500 17.500h9" stroke="#8a1a20" stroke-width="1.200"/></svg>
<div class="t" style="left:28px;top:365px;font-weight:bold;font-size:12.5px;color:#222">ClamTk</div>
<div class="t" style="left:28px;top:382px;font-size:12.5px;color:#2e2e2e">Skenovanie hrozieb...</div>
<svg class="abs" style="left:3px;top:408px" width="22" height="22" viewBox="0 0 22 22"><rect x="3" y="4" width="16" height="14" rx="1" fill="#d0d0d0"/><rect x="6" y="10" width="10" height="1.500" fill="#8a8a8a"/></svg>
<div class="t" style="left:28px;top:405px;font-weight:bold;font-size:12.5px;color:#222">ClipIt</div>
</div>
<svg class="abs" style="left:299px;top:45px" width="16" height="16" viewBox="0 0 16 16"><path d="M8 .8l2.100 4.700 5.100 .5-3.900 3.400 1.200 5-4.500-2.700-4.500 2.700 1.200-5L.8 6l5.100-.5z" fill="#4a4a4a" stroke="#4a4a4a" stroke-width="1" stroke-linejoin="round"/></svg>
<div class="t" style="left:320px;top:46px;font-size:12.5px;color:#3a3a3a">Obľúbené</div>
<div class="abs" style="left:296px;top:67px;width:100px;height:27px;border:1px solid #8c8c8c;border-radius:3px;background:linear-gradient(#c4c4c4,#b4b4b4);box-shadow:inset 0 1px 0 rgba(255,255,255,.25)"></div>
<svg class="abs" style="left:299px;top:73px" width="16" height="16" viewBox="0 0 16 16"><circle cx="8" cy="8" r="8" fill="#3daee9"/><path d="M6.300 3h3.400v4.500h2.500L8 11.500 3.800 7.500h2.500z" fill="#fff"/><rect x="4" y="12" width="8" height="1.300" fill="#fff"/></svg>
<div class="t" style="left:320px;top:74px;font-size:12.5px;color:#3a3a3a">Všetky</div>
<svg class="abs" style="left:299px;top:101px" width="16" height="16" viewBox="0 0 16 16"><circle cx="8" cy="4.500" r="4" fill="#9c4ad0"/><circle cx="11.500" cy="6.500" r="4" fill="#3f8fe8"/><circle cx="11" cy="10.500" r="4" fill="#2aa876"/><circle cx="7" cy="12" r="4" fill="#f2c230"/><circle cx="4.300" cy="9.500" r="4" fill="#f07f2a"/><circle cx="4.800" cy="5.500" r="4" fill="#ea3f4a"/></svg>
<div class="t" style="left:320px;top:102px;font-size:12.5px;color:#3a3a3a">Grafika</div>
<svg class="abs" style="left:299px;top:129px" width="16" height="16" viewBox="0 0 16 16"><path d="M2 2h12c1 0 2 1 2 2v9.500c0 1-1 1.500-1.800 .8L11 11H5l-3.200 3.300C1 15 0 14.500 0 13.500V4c0-1 1-2 2-2z" fill="#4a4a4a"/><circle cx="4" cy="5.500" r="1.600" fill="#d8d8d8"/><circle cx="12.500" cy="4.300" r="1.100" fill="#e8523f"/><circle cx="10.800" cy="6.600" r="1.100" fill="#f2c230"/></svg>
<div class="t" style="left:320px;top:130px;font-size:12.5px;color:#3a3a3a">Hry</div>
<svg class="abs" style="left:299px;top:157px" width="16" height="16" viewBox="0 0 16 16"><circle cx="8" cy="8" r="8" fill="#5a63c8"/><path d="M13 3L9.200 9.200 6.800 6.800z" fill="#f06a4a"/><path d="M3 13l3.800-6.200 2.400 2.400z" fill="#e8e8f0"/></svg>
<div class="t" style="left:320px;top:158px;font-size:12.5px;color:#3a3a3a">Internet</div>
<svg class="abs" style="left:299px;top:185px" width="16" height="16" viewBox="0 0 16 16"><rect x="2" y="0" width="12" height="16" fill="#e6e6e6"/><rect x="4" y="4" width="8" height="1" fill="#555"/><rect x="4" y="6" width="8" height="1" fill="#555"/><rect x="4" y="8" width="8" height="1" fill="#555"/><rect x="4" y="10" width="8" height="1" fill="#555"/><rect x="4" y="12" width="8" height="1" fill="#555"/></svg>
<div class="t" style="left:320px;top:186px;font-size:12.5px;color:#3a3a3a">Kancelária</div>
<svg class="abs" style="left:299px;top:213px" width="16" height="16" viewBox="0 0 16 16"><rect x="0" y="1" width="16" height="13" fill="#8a3fb8"/><rect x="1" y="2.500" width="1.500" height="2" fill="#d8b8f0"/><rect x="1" y="6.500" width="1.500" height="2" fill="#d8b8f0"/><rect x="1" y="10.500" width="1.500" height="2" fill="#d8b8f0"/><rect x="13.500" y="2.500" width="1.500" height="2" fill="#d8b8f0"/><rect x="13.500" y="6.500" width="1.500" height="2" fill="#d8b8f0"/><path d="M5.500 4.500l5 3-5 3z" fill="#fff"/><path d="M9.500 16V9.500l5-1V14" stroke="#f0842a" stroke-width="1.300" fill="none"/><circle cx="8.300" cy="15" r="1.700" fill="#f0842a"/><circle cx="13.300" cy="13.500" r="1.700" fill="#f0842a"/></svg>
<div class="t" style="left:320px;top:214px;font-size:12.5px;color:#3a3a3a">Multimédiá</div>
<svg class="abs" style="left:299px;top:241px" width="16" height="16" viewBox="0 0 16 16"><rect width="16" height="16" fill="#3f4fb8"/><path d="M3.500 2v12M8 2v12M12.500 2v12" stroke="#2a3690" stroke-width="1.200"/><circle cx="3.500" cy="6" r="1.900" fill="#fff"/><circle cx="8" cy="10.500" r="1.900" fill="#fff"/><circle cx="12.500" cy="7" r="1.900" fill="#fff"/></svg>
<div class="t" style="left:320px;top:242px;font-size:12.5px;color:#3a3a3a">Nastavenia</div>
<svg class="abs" style="left:299px;top:269px" width="16" height="16" viewBox="0 0 16 16"><path d="M0 2l9 13H0z" fill="#2a9a78"/><path d="M1 15c3-1 7-1.500 14 0" stroke="#e8e8e8" stroke-width="1.300" fill="none"/><rect x="7" y="1.500" width="3.500" height="7" rx="1" fill="#4a4a4a"/><circle cx="8.800" cy="5" r="1.100" fill="#e8e8e8"/><path d="M5.500 12l3.300-3.500 3.500 3.500" stroke="#e8e8e8" stroke-width="1.300" fill="none"/></svg>
<div class="t" style="left:320px;top:270px;font-size:12.5px;color:#3a3a3a">Príslušenstvo</div>
<svg class="abs" style="left:299px;top:297px" width="16" height="16" viewBox="0 0 16 16"><polygon points="16.0,7.2 16.0,8.8 13.7,9.7 13.2,10.8 14.2,13.1 13.1,14.2 10.8,13.2 9.7,13.7 8.8,16.0 7.2,16.0 6.3,13.7 5.2,13.2 2.9,14.2 1.8,13.1 2.8,10.8 2.3,9.7 0.0,8.8 0.0,7.2 2.3,6.3 2.8,5.2 1.8,2.9 2.9,1.8 5.2,2.8 6.3,2.3 7.2,0.0 8.8,0.0 9.7,2.3 10.8,2.8 13.1,1.8 14.2,2.9 13.2,5.2 13.7,6.3" fill="#4f5f68"/><circle cx="8" cy="8" r="2.600" fill="#cfcfcf"/></svg>
<div class="t" style="left:320px;top:298px;font-size:12.5px;color:#3a3a3a">Systém</div>
<svg class="abs" style="left:299px;top:325px" width="16" height="16" viewBox="0 0 16 16"><circle cx="8" cy="8" r="8" fill="#3fb8a8"/><circle cx="8" cy="8" r="4.300" fill="none" stroke="#e8f8f4" stroke-width="1.200"/><circle cx="8" cy="8" r="1.600" fill="#e8f8f4"/><circle cx="8" cy="3.700" r="1.300" fill="#e8f8f4"/><circle cx="8" cy="12.300" r="1.300" fill="#e8f8f4"/><circle cx="3.700" cy="8" r="1.300" fill="#e8f8f4"/><circle cx="12.300" cy="8" r="1.300" fill="#e8f8f4"/></svg>
<div class="t" style="left:320px;top:326px;font-size:12.5px;color:#3a3a3a">Vzdelávanie</div>
<svg class="abs" style="left:14px;top:467px" width="29" height="29" viewBox="0 0 29 29"><circle cx="14.500" cy="14.500" r="14.500" fill="#4a8fe0"/><circle cx="14.500" cy="10" r="4.300" fill="#fff"/><path d="M6 21.500c0-4 4-5.500 8.500-5.500s8.500 1.500 8.500 5.500v1.500H6z" fill="#fff"/></svg>
<div class="t" style="left:55px;top:474px;font-size:14px;font-weight:bold;color:#4a4a4a;letter-spacing:.9px">Dumaru</div>
<svg class="abs" style="left:302px;top:471px" width="20" height="20" viewBox="0 0 20 20"><rect width="20" height="20" fill="#3f4fb8"/><path d="M5 3v14M10 3v14M15 3v14" stroke="#2a3690" stroke-width="1.300"/><circle cx="5" cy="8" r="2.200" fill="#fff"/><circle cx="10" cy="12.500" r="2.200" fill="#fff"/><circle cx="15" cy="9" r="2.200" fill="#fff"/></svg>
<svg class="abs" style="left:332px;top:471px" width="20" height="20" viewBox="0 0 20 20"><circle cx="10" cy="10" r="10" fill="#f08a2b"/><rect x="5.500" y="9" width="9" height="6.500" rx=".8" fill="#fff"/><path d="M7.500 9V7.200a2.500 2.500 0 0 1 5 0V9" stroke="#fff" stroke-width="1.500" fill="none"/></svg>
<svg class="abs" style="left:362px;top:471px" width="20" height="20" viewBox="0 0 20 20"><circle cx="10" cy="10" r="10" fill="#7cc23a"/><circle cx="10" cy="10" r="5.800" fill="none" stroke="#fff" stroke-width="1.700"/><path d="M6.500 10h6M10.500 7.500l2.500 2.500-2.500 2.500" stroke="#fff" stroke-width="1.500" fill="none"/></svg>
<svg class="abs" style="left:386px;top:486px" width="11" height="11" viewBox="0 0 11 11"><path d="M11 0v11H0z" fill="#5a5a5a"/></svg>
</div>
<div id="top">
<div class="abs" style="left:0;top:0;width:72px;height:28px;background:#3b3b3b"></div>
<svg class="abs" style="left:7px;top:5px" width="20" height="18" viewBox="0 0 20 18"><rect width="20" height="18" rx="1" fill="#4a8fdb"/><rect x="5" y="3.2" width="12" height="2" fill="#f6dc5a"/><rect x="5" y="8" width="12" height="2" fill="#f6dc5a"/><rect x="5" y="12.8" width="12" height="2" fill="#f6dc5a"/><rect x="1.8" y="8" width="2" height="2" fill="#f6dc5a"/><rect x="1.8" y="12.8" width="2" height="2" fill="#f6dc5a"/><path d="M1.3 4.2l1.2 1.2 2-2.6" stroke="#f6dc5a" stroke-width="1" fill="none"/></svg>
<div class="t" style="left:34px;top:7px;font-size:12.5px;color:#e8e8e8">MENU</div>
<svg class="abs" style="left:76px;top:4px" width="20" height="20" viewBox="0 0 20 20"><rect x="1" y="0" width="18" height="3" fill="#4a90d9"/><rect x="1" y="2" width="18" height="2" fill="#8bc34a"/><rect x="1" y="4" width="18" height="3" fill="#f5d24a"/><rect x="0" y="7" width="20" height="13" rx="1" fill="#8a8a8a"/><rect x="7.5" y="11" width="5" height="1.8" fill="#f0f0f0"/></svg>
<svg class="abs" style="left:104px;top:5px" width="20" height="18" viewBox="0 0 20 18"><rect width="20" height="18" rx="1" fill="#444"/><text x="1.5" y="8.5" font-family="DejaVu Sans, sans-serif" font-size="8" font-weight="bold" fill="#eee">$</text><rect x="8.5" y="7.5" width="6" height="1.2" fill="#eee"/></svg>
<svg class="abs" style="left:131px;top:3px" width="22" height="22" viewBox="0 0 22 22"><defs><radialGradient id="ffg" cx=".62" cy=".18" r=".95"><stop offset="0" stop-color="#ffe14a"/><stop offset=".4" stop-color="#ff8f1a"/><stop offset="1" stop-color="#e72f55"/></radialGradient></defs><path d="M11.200 2.800c1.900-.9 3.100-2.100 3.500-2.800 .5 1.700 2.300 2.900 4.300 5.300 2.700 3.600 2.300 8.400-.4 11.400-3 3.300-8.600 4.200-12.800 2C1.500 16.400 .200 11.100 1.600 7.500c.3-1.400 .8-2.400 1.500-3.200 .1 1 .5 1.700 1 2.200 1-1.800 3.800-3.200 7.100-3.700z" fill="url(#ffg)"/><circle cx="11.300" cy="11.800" r="4.900" fill="#7542e5"/><path d="M5.200 8.600c1.700-2.100 4.800-2.900 7.300-1.900 1.400 .6 2.400 1.700 2.900 3-1.300-1.200-3.300-1.300-4.700-.500-1.300 .7-1.900 2-1.500 3.300 .4 1.400 1.700 2.200 3.200 2.100-1.700 1.300-4.300 1.100-5.900-.400-1.400-1.400-1.900-3.600-1.300-5.600z" fill="#ff9a2e"/></svg>
<svg class="abs" style="left:160px;top:4px" width="20" height="20" viewBox="0 0 20 20"><circle cx="10" cy="10" r="10" fill="#db4437"/><path d="M10 10L1.340 5A10 10 0 0 0 10 20z" fill="#0f9d58"/><path d="M10 10v10A10 10 0 0 0 18.660 5z" fill="#ffcd40"/><path d="M10 10L1.340 5A10 10 0 0 1 18.660 5z" fill="#db4437"/><circle cx="10" cy="10" r="4.700" fill="#f1f1f1"/><circle cx="10" cy="10" r="3.700" fill="#4285f4"/></svg>
<svg class="abs" style="left:188px;top:4px" width="20" height="20" viewBox="0 0 20 20"><path d="M10 0C4.400 0 0 4.100 0 9.300c0 2.900 1.400 5.400 3.600 7.100V20l3.400-1.900c1 .3 2 .4 3 .4 5.600 0 10-4.100 10-9.300S15.600 0 10 0z" fill="#1e9bf5"/><path d="M4 12l5-5.300 2.500 2.600L16 6.700l-5 5.300-2.500-2.600z" fill="#fff"/></svg>
<svg class="abs" style="left:216px;top:4px" width="20" height="20" viewBox="0 0 20 20"><rect width="20" height="20" fill="#6aa62e"/><path d="M2.500 4.500v7.500c0 2 1.200 3 3 3s3-1 3-3V9.500" stroke="#fff" stroke-width="2.400" fill="none"/><path d="M17.500 5.500c-1-1.700-2.600-2.500-4.500-2.200-2 .4-3.200 2-3.200 4.200v6c0 2.500 1.500 4 3.800 4 2.200 0 3.900-1.300 3.900-3.500v-3" stroke="#fff" stroke-width="2.400" fill="none"/><path d="M10.200 6.500h3.600v4h2.200l-4 4.500-4-4.500h2.200z" fill="#4f8a1e"/></svg>
<svg class="abs" style="left:243px;top:3px" width="22" height="22" viewBox="0 0 22 22"><path d="M11 0l11 11-11 11L0 11z" fill="#35a9e0"/><path d="M11 22l11-11-3-3L8 19z" fill="#2b93c9"/><path d="M7.500 5v12M15 4.500L8 11.500l5 5" stroke="#fff" stroke-width="1.600" fill="none"/></svg>
<svg class="abs" style="left:272px;top:4px" width="20" height="20" viewBox="0 0 20 20"><circle cx="10" cy="10" r="10" fill="#4a4a4a"/><text x="10" y="15" text-anchor="middle" font-family="DejaVu Sans, sans-serif" font-size="14" font-weight="bold" fill="#fff">a</text></svg>
<svg class="abs" style="left:300px;top:4px" width="20" height="20" viewBox="0 0 20 20"><circle cx="10" cy="10" r="10" fill="#1ed760"/><path d="M4.200 7.200c4-1.200 8.400-.8 11.800 1.200" stroke="#191414" stroke-width="2" fill="none" stroke-linecap="round"/><path d="M5 10.600c3.400-1 6.800-.6 9.600 1" stroke="#191414" stroke-width="1.700" fill="none" stroke-linecap="round"/><path d="M5.800 13.700c2.700-.7 5.200-.4 7.400 .8" stroke="#191414" stroke-width="1.400" fill="none" stroke-linecap="round"/></svg>
<svg class="abs" style="left:328px;top:6px" width="20" height="16" viewBox="0 0 20 16"><rect width="20" height="16" fill="#2b4552"/><rect x="11" y="2" width="8" height="12" fill="#3a5a68"/><circle cx="6.500" cy="7" r="2.200" fill="#e04a5a"/><path d="M2 2.500l9 9M11 2.500l-9 9" stroke="#7a909a" stroke-width=".6"/><rect x="13" y="4" width="5" height="1" fill="#8fb0bd"/><rect x="13" y="7" width="5" height="1" fill="#8fb0bd"/><rect x="15" y="11" width="3" height="2" fill="#4aa3df"/></svg>
<svg class="abs" style="left:356px;top:4px" width="20" height="20" viewBox="0 0 20 20"><rect width="20" height="20" rx="1" fill="#f5b36a"/><path d="M8.500 3h3v8h3.200L10 16.500 5.300 11h3.200z" fill="#3a3a3a"/></svg>
<svg class="abs" style="left:383px;top:4px" width="22" height="20" viewBox="0 0 22 20"><rect x="1" y="0" width="20" height="20" rx="4.500" fill="#e8512b"/><path d="M0 3.600h2a6.250 6.250 0 0 1 0 12.500H0M22 3.600h-2a6.250 6.250 0 0 0 0 12.500h2" stroke="#fff" stroke-width="1.700" fill="none"/></svg>
<div class="abs" style="left:1537px;top:0;width:48px;height:28px;background:#232323"></div>
<div class="abs" style="left:1538px;top:1px;width:23px;height:12px;background:#34629a"></div>
<div class="abs" style="left:1561px;top:0;width:1px;height:28px;background:#2e2e2e"></div>
<div class="abs" style="left:1537px;top:13px;width:48px;height:1px;background:#2e2e2e"></div>
<svg class="abs" style="left:1542px;top:2px" width="18" height="11" viewBox="0 0 18 11"><rect x="6.500" y="1.500" width="10" height="6" fill="none" stroke="#7ab0f0" stroke-width="1"/><rect x="1.500" y="5.500" width="6" height="4" fill="#34629a" stroke="#e8eef8" stroke-width="1"/></svg>
<div class="abs" style="left:1589px;top:3px;width:6px;height:22px;background:#4a4a4a"></div>
<div class="abs" style="left:1597px;top:3px;width:6px;height:22px;background:#4a4a4a"></div>
<svg class="abs" style="left:1610px;top:4px" width="20" height="20" viewBox="0 0 20 20"><path d="M0 0h20v14l-6 6H0z" fill="#f4cf3f"/><path d="M20 14l-6 6v-6z" fill="#c9a21f"/><rect x="3" y="4.500" width="14" height="2" fill="#5a5140"/><rect x="3" y="8.500" width="10" height="2" fill="#5a5140"/><rect x="3" y="12.500" width="7" height="2" fill="#5a5140"/></svg>
<svg class="abs" style="left:1640px;top:6px" width="17" height="16" viewBox="0 0 17 16"><path d="M0 5h3.500L8 1v14l-4.500-4H0z" fill="#f2f2f2"/><path d="M10 4.500c1.500 1 1.500 6 0 7" stroke="#f2f2f2" stroke-width="1.500" fill="none"/><path d="M12.300 2.300c3 2.500 3 9 0 11.400" stroke="#6a6a6a" stroke-width="1.500" fill="none"/></svg>
<svg class="abs" style="left:1666px;top:7px" width="18" height="14" viewBox="0 0 18 14"><path d="M9 14L0 3.200C5-1 13-1 18 3.200z" fill="#6e6e6e"/><path d="M9 14L3.300 7.200c3.300-2.700 8.100-2.700 11.400 0z" fill="#f2f2f2"/></svg>
<svg class="abs" style="left:1695px;top:6px" width="14" height="16" viewBox="0 0 14 16"><path d="M7 0c.8 0 1.300.5 1.300 1.300 2.500.6 3.900 2.700 3.900 5.400v3.600l1.800 1.900v1H0v-1l1.800-1.900V6.700c0-2.700 1.400-4.800 3.900-5.400C5.700.5 6.200 0 7 0z" fill="#f2f2f2"/><path d="M5.300 14.200h3.400c0 1-.8 1.800-1.700 1.800s-1.700-.8-1.700-1.800z" fill="#f2f2f2"/></svg>
<svg class="abs" style="left:1725px;top:6px" width="11" height="16" viewBox="0 0 11 16"><rect x="3" y="0" width="5" height="2" fill="#f2f2f2"/><rect x="0" y="1.500" width="11" height="14.500" rx="1" fill="#f2f2f2"/><path d="M6.500 3.500L3 9.200h2.200L4.500 14 8 8H5.800z" fill="#1d1d1d"/></svg>
<svg class="abs" style="left:1749px;top:3px" width="22" height="21" viewBox="0 0 22 21"><path d="M10 0l1.600 3.500h-3.200z" transform="rotate(0 10 10)" fill="#f3a33a"/><path d="M10 0l1.600 3.500h-3.200z" transform="rotate(20 10 10)" fill="#f3a33a"/><path d="M10 0l1.600 3.500h-3.200z" transform="rotate(40 10 10)" fill="#f3a33a"/><path d="M10 0l1.600 3.500h-3.200z" transform="rotate(60 10 10)" fill="#f3a33a"/><path d="M10 0l1.600 3.500h-3.200z" transform="rotate(80 10 10)" fill="#f3a33a"/><path d="M10 0l1.600 3.500h-3.200z" transform="rotate(100 10 10)" fill="#f3a33a"/><path d="M10 0l1.600 3.500h-3.200z" transform="rotate(120 10 10)" fill="#f3a33a"/><path d="M10 0l1.600 3.500h-3.200z" transform="rotate(140 10 10)" fill="#f3a33a"/><path d="M10 0l1.600 3.500h-3.200z" transform="rotate(160 10 10)" fill="#f3a33a"/><path d="M10 0l1.600 3.500h-3.200z" transform="rotate(180 10 10)" fill="#f3a33a"/><path d="M10 0l1.600 3.500h-3.200z" transform="rotate(200 10 10)" fill="#f3a33a"/><path d="M10 0l1.600 3.500h-3.200z" transform="rotate(220 10 10)" fill="#f3a33a"/><path d="M10 0l1.600 3.500h-3.200z" transform="rotate(240 10 10)" fill="#f3a33a"/><path d="M10 0l1.600 3.500h-3.200z" transform="rotate(260 10 10)" fill="#f3a33a"/><path d="M10 0l1.600 3.500h-3.200z" transform="rotate(280 10 10)" fill="#f3a33a"/><path d="M10 0l1.600 3.500h-3.200z" transform="rotate(300 10 10)" fill="#f3a33a"/><path d="M10 0l1.600 3.500h-3.200z" transform="rotate(320 10 10)" fill="#f3a33a"/><path d="M10 0l1.600 3.500h-3.200z" transform="rotate(340 10 10)" fill="#f3a33a"/><circle cx="10" cy="10" r="7.200" fill="#f7b84a"/><circle cx="9" cy="9" r="4.500" fill="#ffd27a"/><path d="M9.500 20c0-2 1.500-3.200 3.200-3 .6-1.800 3.400-2 4.200-.2 1.800-.4 3 .8 3.100 3.200z" fill="#e8e8ec"/></svg>
<div class="t" style="left:1773px;top:7px;font-size:12.2px;color:#e8e8e8">9 °C</div>
<div class="t" style="left:1802px;top:7px;font-size:12.2px;color:#e8e8e8">Pi 01 nov, 12:34</div>
<svg class="abs" style="left:1896px;top:5px" width="20" height="18" viewBox="0 0 20 18"><rect width="20" height="18" fill="#3a3a3a"/><rect y="1" width="20" height="1" fill="#555"/><rect y="3" width="20" height="1" fill="#555"/><rect y="5" width="20" height="1" fill="#555"/><path d="M0 18V4.500c1.500-1 2.500-.5 3.200.8 1 2 2 3.200 4 3.300 2.500.1 4-.8 6-.6 1.500.2 2.500-1.500 4-1.700 1.300-.1 2.200.6 2.800 1.500V18z" fill="#3fcf6e"/></svg>
</div>
<div id="bot">
<svg class="abs" style="left:3px;top:6px" width="18" height="16" viewBox="0 0 18 16"><rect x="1" y="0" width="16" height="16" rx="3.500" fill="#e8512b"/><path d="M0 3h1.500a5 5 0 0 1 0 10H0M18 3h-1.500a5 5 0 0 0 0 10h1.500" stroke="#fff" stroke-width="1.500" fill="none"/></svg>
<div class="t" style="left:26px;top:8px;font-size:12.5px;color:#dcdcdc">Double Commander</div>
<svg class="abs" style="left:203px;top:6px" width="17" height="17" viewBox="0 0 22 22"><path d="M11.200 2.800c1.900-.9 3.100-2.100 3.500-2.800 .5 1.700 2.300 2.900 4.300 5.300 2.700 3.600 2.300 8.400-.4 11.400-3 3.300-8.600 4.200-12.800 2C1.500 16.400 .200 11.100 1.600 7.500c.3-1.400 .8-2.400 1.500-3.200 .1 1 .5 1.700 1 2.200 1-1.800 3.800-3.200 7.100-3.700z" fill="url(#ffg)"/><circle cx="11.300" cy="11.800" r="4.900" fill="#7542e5"/><path d="M5.200 8.600c1.700-2.100 4.800-2.900 7.300-1.900 1.400 .6 2.400 1.700 2.900 3-1.300-1.200-3.300-1.300-4.700-.500-1.300 .7-1.900 2-1.500 3.300 .4 1.400 1.700 2.200 3.200 2.100-1.700 1.300-4.300 1.100-5.900-.400-1.400-1.400-1.900-3.600-1.300-5.600z" fill="#ff9a2e"/></svg>
<div class="t" style="left:226px;top:8px;font-size:12.2px;color:#d0d0d0">[AbcLinuxu.cz - Linux na stříb...</div>
<svg class="abs" style="left:404px;top:8px" width="16" height="13" viewBox="0 0 16 13"><rect width="16" height="13" rx="1" fill="#555"/><text x="1.500" y="8" font-family="DejaVu Sans, sans-serif" font-size="7.500" font-weight="bold" fill="#eee">$</text><rect x="7.500" y="7.200" width="5" height="1.200" fill="#eee"/></svg>
<div class="t" style="left:426px;top:8px;font-size:12.5px;color:#dcdcdc">Terminál - dumaru@dell: ~</div>
</div>
</body></html>
